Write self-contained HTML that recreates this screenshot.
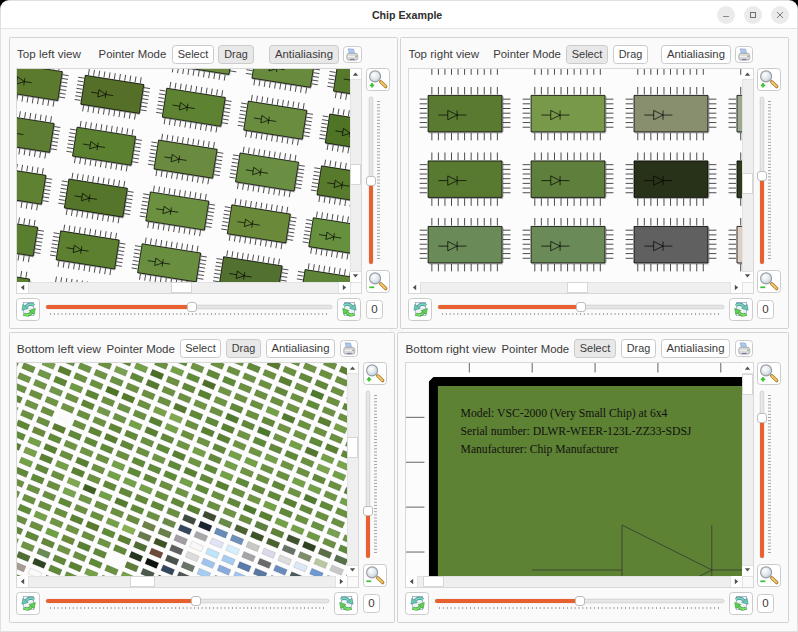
<!DOCTYPE html><html><head><meta charset="utf-8"><style>html,body{margin:0;padding:0;background:#000;overflow:hidden}svg{display:block}</style></head><body><svg width="798" height="632" viewBox="0 0 798 632" shape-rendering="auto">
<defs>
<radialGradient id="lens" cx="0.4" cy="0.35" r="0.7"><stop offset="0" stop-color="#ffffff"/><stop offset="0.6" stop-color="#dfe5ea"/><stop offset="1" stop-color="#b8c2cc"/></radialGradient>
<clipPath id="clipTL"><rect x="17" y="69" width="333" height="213"/></clipPath>
<clipPath id="clipTR"><rect x="409" y="69" width="333" height="213"/></clipPath>
<clipPath id="clipBL"><rect x="17" y="363" width="330" height="213"/></clipPath>
<clipPath id="clipBR"><rect x="406" y="363" width="336" height="213"/></clipPath>
<path id="pins" d="M18 13L18 5M18 54L18 62M25 13L25 5M25 54L25 62M32 13L32 5M32 54L32 62M39 13L39 5M39 54L39 62M46 13L46 5M46 54L46 62M53 13L53 5M53 54L53 62M60 13L60 5M60 54L60 62M67 13L67 5M67 54L67 62M74 13L74 5M74 54L74 62M81 13L81 5M81 54L81 62M88 13L88 5M88 54L88 62M5 18L13 18M94 18L102 18M5 23L13 23M94 23L102 23M5 28L13 28M94 28L102 28M5 33L13 33M94 33L102 33M5 38L13 38M94 38L102 38M5 43L13 43M94 43L102 43M5 48L13 48M94 48L102 48M25 35L35 35M35 30L35 40M35 30L45 35M35 40L45 35M45 30L45 40M45 35L55 35" fill="none" stroke="#000" stroke-width="0.7" vector-effect="non-scaling-stroke"/>
</defs>
<rect x="0" y="0" width="798" height="632" fill="#000000"/>
<path d="M0 632 L0 9 A9 9 0 0 1 9 0 L789 0 A9 9 0 0 1 798 9 L798 632Z" fill="#e0e0e0"/>
<path d="M1 631 L1 9 A8 8 0 0 1 9 1 L789 1 A8 8 0 0 1 797 9 L797 631Z" fill="#fafafa"/>
<path d="M1 28 L1 9 A8 8 0 0 1 9 1 L789 1 A8 8 0 0 1 797 9 L797 28Z" fill="#ffffff"/>
<rect x="1" y="28" width="796" height="1" fill="#e4e4e4"/>
<text x="0" y="0" transform="translate(371.90,18.80) scale(0.9258,1)" font-family='"Liberation Sans", sans-serif' font-size="11.5" font-weight="bold" fill="#2e2e2e">Chip Example</text>
<circle cx="726" cy="15" r="9" fill="#ebebeb"/>
<rect x="723" y="16" width="6" height="1" fill="#8a8a8a"/>
<circle cx="753" cy="15" r="9" fill="#ebebeb"/>
<rect x="750.5" y="12.5" width="5" height="5" fill="none" stroke="#707070" stroke-width="1"/>
<circle cx="780" cy="15" r="9" fill="#ebebeb"/>
<path d="M777 12L783 18M783 12L777 18" stroke="#707070" stroke-width="0.9"/>
<rect x="9.5" y="37.5" width="388" height="291" fill="#fafafa" stroke="#d3d3d3" stroke-width="1" rx="1"/>
<text x="0" y="0" transform="translate(17.00,58.40) scale(1.0115,1)" font-family='"Liberation Sans", sans-serif' font-size="11.5" fill="#3a3a3a">Top left view</text>
<text x="0" y="0" transform="translate(98.60,58.40) scale(0.9898,1)" font-family='"Liberation Sans", sans-serif' font-size="11.5" fill="#3a3a3a">Pointer Mode</text>
<rect x="172.5" y="45.5" width="41" height="18" fill="#ffffff" stroke="#cbcbcb" stroke-width="1" rx="3"/>
<text x="0" y="0" transform="translate(177.75,58.30) scale(0.9543,1)" font-family='"Liberation Sans", sans-serif' font-size="11.5" fill="#3a3a3a">Select</text>
<rect x="218.5" y="45.5" width="35" height="18" fill="#e8e8e8" stroke="#cbcbcb" stroke-width="1" rx="3"/>
<text x="0" y="0" transform="translate(224.25,58.30) scale(0.9428,1)" font-family='"Liberation Sans", sans-serif' font-size="11.5" fill="#3a3a3a">Drag</text>
<rect x="269.5" y="45.5" width="69" height="18" fill="#e8e8e8" stroke="#cbcbcb" stroke-width="1" rx="3"/>
<text x="0" y="0" transform="translate(275.00,58.30) scale(0.9862,1)" font-family='"Liberation Sans", sans-serif' font-size="11.5" fill="#3a3a3a">Antialiasing</text>
<rect x="343.5" y="46.5" width="18" height="16" fill="#ffffff" stroke="#cbcbcb" stroke-width="1" rx="3"/>
<g transform="translate(346,48)">
<path d="M2.2 0.8 L7.6 1.2 L8.6 6 L3.4 6Z" fill="#a6ccf2" stroke="#8c90c8" stroke-width="0.6"/>
<path d="M0.8 7.2 Q0.8 5.2 3.5 5.2 L9 5.2 Q11.8 5.2 11.8 7.6 L11.8 10.6 Q11.8 12.2 9.4 12.2 L3 12.2 Q0.8 12.2 0.8 10.6Z" fill="#d8d8d8" stroke="#9a9a9a" stroke-width="0.7"/>
<path d="M1.8 8.4h9" stroke="#f4f4f4" stroke-width="1"/>
<path d="M4 11.4 L8.6 11.4" stroke="#7474a0" stroke-width="1"/>
<circle cx="10" cy="8.2" r="0.7" fill="#4a9a4a"/>
</g>
<rect x="16.5" y="68.5" width="345" height="225" fill="#fcfcfc" stroke="#d8d8d8" stroke-width="1"/>
<g clip-path="url(#clipTL)">
<g transform="matrix(0.741,0.117,-0.117,0.741,-61.76,-118.083)"><path d="M15 54L94 54M94 53L94 15" stroke="#a0a0a4" stroke-width="1" fill="none"/><rect x="14" y="14" width="79" height="39" fill="#5f8236" stroke="#000" stroke-width="0.8" vector-effect="non-scaling-stroke"/><use href="#pins"/></g><g transform="matrix(0.741,0.117,-0.117,0.741,19.724,-105.177)"><path d="M15 54L94 54M94 53L94 15" stroke="#a0a0a4" stroke-width="1" fill="none"/><rect x="14" y="14" width="79" height="39" fill="#5f8236" stroke="#000" stroke-width="0.8" vector-effect="non-scaling-stroke"/><use href="#pins"/></g><g transform="matrix(0.741,0.117,-0.117,0.741,101.208,-92.271)"><path d="M15 54L94 54M94 53L94 15" stroke="#a0a0a4" stroke-width="1" fill="none"/><rect x="14" y="14" width="79" height="39" fill="#5f8236" stroke="#000" stroke-width="0.8" vector-effect="non-scaling-stroke"/><use href="#pins"/></g><g transform="matrix(0.741,0.117,-0.117,0.741,182.693,-79.365)"><path d="M15 54L94 54M94 53L94 15" stroke="#a0a0a4" stroke-width="1" fill="none"/><rect x="14" y="14" width="79" height="39" fill="#5f8236" stroke="#000" stroke-width="0.8" vector-effect="non-scaling-stroke"/><use href="#pins"/></g><g transform="matrix(0.741,0.117,-0.117,0.741,264.177,-66.459)"><path d="M15 54L94 54M94 53L94 15" stroke="#a0a0a4" stroke-width="1" fill="none"/><rect x="14" y="14" width="79" height="39" fill="#5f8236" stroke="#000" stroke-width="0.8" vector-effect="non-scaling-stroke"/><use href="#pins"/></g><g transform="matrix(0.741,0.117,-0.117,0.741,345.661,-53.553)"><path d="M15 54L94 54M94 53L94 15" stroke="#a0a0a4" stroke-width="1" fill="none"/><rect x="14" y="14" width="79" height="39" fill="#5f8236" stroke="#000" stroke-width="0.8" vector-effect="non-scaling-stroke"/><use href="#pins"/></g><g transform="matrix(0.741,0.117,-0.117,0.741,427.146,-40.648)"><path d="M15 54L94 54M94 53L94 15" stroke="#a0a0a4" stroke-width="1" fill="none"/><rect x="14" y="14" width="79" height="39" fill="#5f8236" stroke="#000" stroke-width="0.8" vector-effect="non-scaling-stroke"/><use href="#pins"/></g><g transform="matrix(0.741,0.117,-0.117,0.741,-69.973,-66.229)"><path d="M15 54L94 54M94 53L94 15" stroke="#a0a0a4" stroke-width="1" fill="none"/><rect x="14" y="14" width="79" height="39" fill="#5f8236" stroke="#000" stroke-width="0.8" vector-effect="non-scaling-stroke"/><use href="#pins"/></g><g transform="matrix(0.741,0.117,-0.117,0.741,11.511,-53.323)"><path d="M15 54L94 54M94 53L94 15" stroke="#a0a0a4" stroke-width="1" fill="none"/><rect x="14" y="14" width="79" height="39" fill="#5f8236" stroke="#000" stroke-width="0.8" vector-effect="non-scaling-stroke"/><use href="#pins"/></g><g transform="matrix(0.741,0.117,-0.117,0.741,92.996,-40.417)"><path d="M15 54L94 54M94 53L94 15" stroke="#a0a0a4" stroke-width="1" fill="none"/><rect x="14" y="14" width="79" height="39" fill="#5f8236" stroke="#000" stroke-width="0.8" vector-effect="non-scaling-stroke"/><use href="#pins"/></g><g transform="matrix(0.741,0.117,-0.117,0.741,174.48,-27.511)"><path d="M15 54L94 54M94 53L94 15" stroke="#a0a0a4" stroke-width="1" fill="none"/><rect x="14" y="14" width="79" height="39" fill="#5f8236" stroke="#000" stroke-width="0.8" vector-effect="non-scaling-stroke"/><use href="#pins"/></g><g transform="matrix(0.741,0.117,-0.117,0.741,255.964,-14.606)"><path d="M15 54L94 54M94 53L94 15" stroke="#a0a0a4" stroke-width="1" fill="none"/><rect x="14" y="14" width="79" height="39" fill="#5f8236" stroke="#000" stroke-width="0.8" vector-effect="non-scaling-stroke"/><use href="#pins"/></g><g transform="matrix(0.741,0.117,-0.117,0.741,337.448,-1.7)"><path d="M15 54L94 54M94 53L94 15" stroke="#a0a0a4" stroke-width="1" fill="none"/><rect x="14" y="14" width="79" height="39" fill="#5f8236" stroke="#000" stroke-width="0.8" vector-effect="non-scaling-stroke"/><use href="#pins"/></g><g transform="matrix(0.741,0.117,-0.117,0.741,418.933,11.206)"><path d="M15 54L94 54M94 53L94 15" stroke="#a0a0a4" stroke-width="1" fill="none"/><rect x="14" y="14" width="79" height="39" fill="#5f8236" stroke="#000" stroke-width="0.8" vector-effect="non-scaling-stroke"/><use href="#pins"/></g><g transform="matrix(0.741,0.117,-0.117,0.741,-78.186,-14.375)"><path d="M15 54L94 54M94 53L94 15" stroke="#a0a0a4" stroke-width="1" fill="none"/><rect x="14" y="14" width="79" height="39" fill="#5f8236" stroke="#000" stroke-width="0.8" vector-effect="non-scaling-stroke"/><use href="#pins"/></g><g transform="matrix(0.741,0.117,-0.117,0.741,3.299,-1.469)"><path d="M15 54L94 54M94 53L94 15" stroke="#a0a0a4" stroke-width="1" fill="none"/><rect x="14" y="14" width="79" height="39" fill="#5f8236" stroke="#000" stroke-width="0.8" vector-effect="non-scaling-stroke"/><use href="#pins"/></g><g transform="matrix(0.741,0.117,-0.117,0.741,84.783,11.436)"><path d="M15 54L94 54M94 53L94 15" stroke="#a0a0a4" stroke-width="1" fill="none"/><rect x="14" y="14" width="79" height="39" fill="#5e8034" stroke="#000" stroke-width="0.8" vector-effect="non-scaling-stroke"/><use href="#pins"/></g><g transform="matrix(0.741,0.117,-0.117,0.741,166.267,24.342)"><path d="M15 54L94 54M94 53L94 15" stroke="#a0a0a4" stroke-width="1" fill="none"/><rect x="14" y="14" width="79" height="39" fill="#6a8a3e" stroke="#000" stroke-width="0.8" vector-effect="non-scaling-stroke"/><use href="#pins"/></g><g transform="matrix(0.741,0.117,-0.117,0.741,247.751,37.248)"><path d="M15 54L94 54M94 53L94 15" stroke="#a0a0a4" stroke-width="1" fill="none"/><rect x="14" y="14" width="79" height="39" fill="#678a3c" stroke="#000" stroke-width="0.8" vector-effect="non-scaling-stroke"/><use href="#pins"/></g><g transform="matrix(0.741,0.117,-0.117,0.741,329.236,50.154)"><path d="M15 54L94 54M94 53L94 15" stroke="#a0a0a4" stroke-width="1" fill="none"/><rect x="14" y="14" width="79" height="39" fill="#55782c" stroke="#000" stroke-width="0.8" vector-effect="non-scaling-stroke"/><use href="#pins"/></g><g transform="matrix(0.741,0.117,-0.117,0.741,410.72,63.06)"><path d="M15 54L94 54M94 53L94 15" stroke="#a0a0a4" stroke-width="1" fill="none"/><rect x="14" y="14" width="79" height="39" fill="#5f8236" stroke="#000" stroke-width="0.8" vector-effect="non-scaling-stroke"/><use href="#pins"/></g><g transform="matrix(0.741,0.117,-0.117,0.741,-86.399,37.478)"><path d="M15 54L94 54M94 53L94 15" stroke="#a0a0a4" stroke-width="1" fill="none"/><rect x="14" y="14" width="79" height="39" fill="#5f8236" stroke="#000" stroke-width="0.8" vector-effect="non-scaling-stroke"/><use href="#pins"/></g><g transform="matrix(0.741,0.117,-0.117,0.741,-4.914,50.384)"><path d="M15 54L94 54M94 53L94 15" stroke="#a0a0a4" stroke-width="1" fill="none"/><rect x="14" y="14" width="79" height="39" fill="#5b7a2e" stroke="#000" stroke-width="0.8" vector-effect="non-scaling-stroke"/><use href="#pins"/></g><g transform="matrix(0.741,0.117,-0.117,0.741,76.57,63.29)"><path d="M15 54L94 54M94 53L94 15" stroke="#a0a0a4" stroke-width="1" fill="none"/><rect x="14" y="14" width="79" height="39" fill="#556f28" stroke="#000" stroke-width="0.8" vector-effect="non-scaling-stroke"/><use href="#pins"/></g><g transform="matrix(0.741,0.117,-0.117,0.741,158.054,76.196)"><path d="M15 54L94 54M94 53L94 15" stroke="#a0a0a4" stroke-width="1" fill="none"/><rect x="14" y="14" width="79" height="39" fill="#5c8232" stroke="#000" stroke-width="0.8" vector-effect="non-scaling-stroke"/><use href="#pins"/></g><g transform="matrix(0.741,0.117,-0.117,0.741,239.539,89.102)"><path d="M15 54L94 54M94 53L94 15" stroke="#a0a0a4" stroke-width="1" fill="none"/><rect x="14" y="14" width="79" height="39" fill="#6a8c3e" stroke="#000" stroke-width="0.8" vector-effect="non-scaling-stroke"/><use href="#pins"/></g><g transform="matrix(0.741,0.117,-0.117,0.741,321.023,102.008)"><path d="M15 54L94 54M94 53L94 15" stroke="#a0a0a4" stroke-width="1" fill="none"/><rect x="14" y="14" width="79" height="39" fill="#4f7425" stroke="#000" stroke-width="0.8" vector-effect="non-scaling-stroke"/><use href="#pins"/></g><g transform="matrix(0.741,0.117,-0.117,0.741,402.507,114.913)"><path d="M15 54L94 54M94 53L94 15" stroke="#a0a0a4" stroke-width="1" fill="none"/><rect x="14" y="14" width="79" height="39" fill="#5f8236" stroke="#000" stroke-width="0.8" vector-effect="non-scaling-stroke"/><use href="#pins"/></g><g transform="matrix(0.741,0.117,-0.117,0.741,-94.611,89.332)"><path d="M15 54L94 54M94 53L94 15" stroke="#a0a0a4" stroke-width="1" fill="none"/><rect x="14" y="14" width="79" height="39" fill="#5f8236" stroke="#000" stroke-width="0.8" vector-effect="non-scaling-stroke"/><use href="#pins"/></g><g transform="matrix(0.741,0.117,-0.117,0.741,-13.127,102.238)"><path d="M15 54L94 54M94 53L94 15" stroke="#a0a0a4" stroke-width="1" fill="none"/><rect x="14" y="14" width="79" height="39" fill="#5c7d32" stroke="#000" stroke-width="0.8" vector-effect="non-scaling-stroke"/><use href="#pins"/></g><g transform="matrix(0.741,0.117,-0.117,0.741,68.357,115.144)"><path d="M15 54L94 54M94 53L94 15" stroke="#a0a0a4" stroke-width="1" fill="none"/><rect x="14" y="14" width="79" height="39" fill="#5a8030" stroke="#000" stroke-width="0.8" vector-effect="non-scaling-stroke"/><use href="#pins"/></g><g transform="matrix(0.741,0.117,-0.117,0.741,149.841,128.049)"><path d="M15 54L94 54M94 53L94 15" stroke="#a0a0a4" stroke-width="1" fill="none"/><rect x="14" y="14" width="79" height="39" fill="#6a8a40" stroke="#000" stroke-width="0.8" vector-effect="non-scaling-stroke"/><use href="#pins"/></g><g transform="matrix(0.741,0.117,-0.117,0.741,231.326,140.955)"><path d="M15 54L94 54M94 53L94 15" stroke="#a0a0a4" stroke-width="1" fill="none"/><rect x="14" y="14" width="79" height="39" fill="#6a8e42" stroke="#000" stroke-width="0.8" vector-effect="non-scaling-stroke"/><use href="#pins"/></g><g transform="matrix(0.741,0.117,-0.117,0.741,312.81,153.861)"><path d="M15 54L94 54M94 53L94 15" stroke="#a0a0a4" stroke-width="1" fill="none"/><rect x="14" y="14" width="79" height="39" fill="#587a2c" stroke="#000" stroke-width="0.8" vector-effect="non-scaling-stroke"/><use href="#pins"/></g><g transform="matrix(0.741,0.117,-0.117,0.741,394.294,166.767)"><path d="M15 54L94 54M94 53L94 15" stroke="#a0a0a4" stroke-width="1" fill="none"/><rect x="14" y="14" width="79" height="39" fill="#5f8236" stroke="#000" stroke-width="0.8" vector-effect="non-scaling-stroke"/><use href="#pins"/></g><g transform="matrix(0.741,0.117,-0.117,0.741,-102.824,141.186)"><path d="M15 54L94 54M94 53L94 15" stroke="#a0a0a4" stroke-width="1" fill="none"/><rect x="14" y="14" width="79" height="39" fill="#5f8236" stroke="#000" stroke-width="0.8" vector-effect="non-scaling-stroke"/><use href="#pins"/></g><g transform="matrix(0.741,0.117,-0.117,0.741,-21.34,154.091)"><path d="M15 54L94 54M94 53L94 15" stroke="#a0a0a4" stroke-width="1" fill="none"/><rect x="14" y="14" width="79" height="39" fill="#5e8132" stroke="#000" stroke-width="0.8" vector-effect="non-scaling-stroke"/><use href="#pins"/></g><g transform="matrix(0.741,0.117,-0.117,0.741,60.144,166.997)"><path d="M15 54L94 54M94 53L94 15" stroke="#a0a0a4" stroke-width="1" fill="none"/><rect x="14" y="14" width="79" height="39" fill="#54752a" stroke="#000" stroke-width="0.8" vector-effect="non-scaling-stroke"/><use href="#pins"/></g><g transform="matrix(0.741,0.117,-0.117,0.741,141.629,179.903)"><path d="M15 54L94 54M94 53L94 15" stroke="#a0a0a4" stroke-width="1" fill="none"/><rect x="14" y="14" width="79" height="39" fill="#6a9040" stroke="#000" stroke-width="0.8" vector-effect="non-scaling-stroke"/><use href="#pins"/></g><g transform="matrix(0.741,0.117,-0.117,0.741,223.113,192.809)"><path d="M15 54L94 54M94 53L94 15" stroke="#a0a0a4" stroke-width="1" fill="none"/><rect x="14" y="14" width="79" height="39" fill="#6a8a3a" stroke="#000" stroke-width="0.8" vector-effect="non-scaling-stroke"/><use href="#pins"/></g><g transform="matrix(0.741,0.117,-0.117,0.741,304.597,205.715)"><path d="M15 54L94 54M94 53L94 15" stroke="#a0a0a4" stroke-width="1" fill="none"/><rect x="14" y="14" width="79" height="39" fill="#66903e" stroke="#000" stroke-width="0.8" vector-effect="non-scaling-stroke"/><use href="#pins"/></g><g transform="matrix(0.741,0.117,-0.117,0.741,386.082,218.621)"><path d="M15 54L94 54M94 53L94 15" stroke="#a0a0a4" stroke-width="1" fill="none"/><rect x="14" y="14" width="79" height="39" fill="#5f8236" stroke="#000" stroke-width="0.8" vector-effect="non-scaling-stroke"/><use href="#pins"/></g><g transform="matrix(0.741,0.117,-0.117,0.741,-111.037,193.039)"><path d="M15 54L94 54M94 53L94 15" stroke="#a0a0a4" stroke-width="1" fill="none"/><rect x="14" y="14" width="79" height="39" fill="#5f8236" stroke="#000" stroke-width="0.8" vector-effect="non-scaling-stroke"/><use href="#pins"/></g><g transform="matrix(0.741,0.117,-0.117,0.741,-29.553,205.945)"><path d="M15 54L94 54M94 53L94 15" stroke="#a0a0a4" stroke-width="1" fill="none"/><rect x="14" y="14" width="79" height="39" fill="#5a7e30" stroke="#000" stroke-width="0.8" vector-effect="non-scaling-stroke"/><use href="#pins"/></g><g transform="matrix(0.741,0.117,-0.117,0.741,51.932,218.851)"><path d="M15 54L94 54M94 53L94 15" stroke="#a0a0a4" stroke-width="1" fill="none"/><rect x="14" y="14" width="79" height="39" fill="#5c8030" stroke="#000" stroke-width="0.8" vector-effect="non-scaling-stroke"/><use href="#pins"/></g><g transform="matrix(0.741,0.117,-0.117,0.741,133.416,231.757)"><path d="M15 54L94 54M94 53L94 15" stroke="#a0a0a4" stroke-width="1" fill="none"/><rect x="14" y="14" width="79" height="39" fill="#6a8e40" stroke="#000" stroke-width="0.8" vector-effect="non-scaling-stroke"/><use href="#pins"/></g><g transform="matrix(0.741,0.117,-0.117,0.741,214.9,244.663)"><path d="M15 54L94 54M94 53L94 15" stroke="#a0a0a4" stroke-width="1" fill="none"/><rect x="14" y="14" width="79" height="39" fill="#527030" stroke="#000" stroke-width="0.8" vector-effect="non-scaling-stroke"/><use href="#pins"/></g><g transform="matrix(0.741,0.117,-0.117,0.741,296.384,257.568)"><path d="M15 54L94 54M94 53L94 15" stroke="#a0a0a4" stroke-width="1" fill="none"/><rect x="14" y="14" width="79" height="39" fill="#5e8438" stroke="#000" stroke-width="0.8" vector-effect="non-scaling-stroke"/><use href="#pins"/></g><g transform="matrix(0.741,0.117,-0.117,0.741,377.869,270.474)"><path d="M15 54L94 54M94 53L94 15" stroke="#a0a0a4" stroke-width="1" fill="none"/><rect x="14" y="14" width="79" height="39" fill="#5f8236" stroke="#000" stroke-width="0.8" vector-effect="non-scaling-stroke"/><use href="#pins"/></g><g transform="matrix(0.741,0.117,-0.117,0.741,-119.25,244.893)"><path d="M15 54L94 54M94 53L94 15" stroke="#a0a0a4" stroke-width="1" fill="none"/><rect x="14" y="14" width="79" height="39" fill="#5f8236" stroke="#000" stroke-width="0.8" vector-effect="non-scaling-stroke"/><use href="#pins"/></g><g transform="matrix(0.741,0.117,-0.117,0.741,-37.766,257.799)"><path d="M15 54L94 54M94 53L94 15" stroke="#a0a0a4" stroke-width="1" fill="none"/><rect x="14" y="14" width="79" height="39" fill="#5a8030" stroke="#000" stroke-width="0.8" vector-effect="non-scaling-stroke"/><use href="#pins"/></g><g transform="matrix(0.741,0.117,-0.117,0.741,43.719,270.705)"><path d="M15 54L94 54M94 53L94 15" stroke="#a0a0a4" stroke-width="1" fill="none"/><rect x="14" y="14" width="79" height="39" fill="#5c8034" stroke="#000" stroke-width="0.8" vector-effect="non-scaling-stroke"/><use href="#pins"/></g><g transform="matrix(0.741,0.117,-0.117,0.741,125.203,283.61)"><path d="M15 54L94 54M94 53L94 15" stroke="#a0a0a4" stroke-width="1" fill="none"/><rect x="14" y="14" width="79" height="39" fill="#5c8034" stroke="#000" stroke-width="0.8" vector-effect="non-scaling-stroke"/><use href="#pins"/></g><g transform="matrix(0.741,0.117,-0.117,0.741,206.687,296.516)"><path d="M15 54L94 54M94 53L94 15" stroke="#a0a0a4" stroke-width="1" fill="none"/><rect x="14" y="14" width="79" height="39" fill="#5c8034" stroke="#000" stroke-width="0.8" vector-effect="non-scaling-stroke"/><use href="#pins"/></g><g transform="matrix(0.741,0.117,-0.117,0.741,288.172,309.422)"><path d="M15 54L94 54M94 53L94 15" stroke="#a0a0a4" stroke-width="1" fill="none"/><rect x="14" y="14" width="79" height="39" fill="#5c8034" stroke="#000" stroke-width="0.8" vector-effect="non-scaling-stroke"/><use href="#pins"/></g><g transform="matrix(0.741,0.117,-0.117,0.741,369.656,322.328)"><path d="M15 54L94 54M94 53L94 15" stroke="#a0a0a4" stroke-width="1" fill="none"/><rect x="14" y="14" width="79" height="39" fill="#5f8236" stroke="#000" stroke-width="0.8" vector-effect="non-scaling-stroke"/><use href="#pins"/></g><g transform="matrix(0.741,0.117,-0.117,0.741,-127.463,296.747)"><path d="M15 54L94 54M94 53L94 15" stroke="#a0a0a4" stroke-width="1" fill="none"/><rect x="14" y="14" width="79" height="39" fill="#5f8236" stroke="#000" stroke-width="0.8" vector-effect="non-scaling-stroke"/><use href="#pins"/></g><g transform="matrix(0.741,0.117,-0.117,0.741,-45.978,309.652)"><path d="M15 54L94 54M94 53L94 15" stroke="#a0a0a4" stroke-width="1" fill="none"/><rect x="14" y="14" width="79" height="39" fill="#5f8236" stroke="#000" stroke-width="0.8" vector-effect="non-scaling-stroke"/><use href="#pins"/></g><g transform="matrix(0.741,0.117,-0.117,0.741,35.506,322.558)"><path d="M15 54L94 54M94 53L94 15" stroke="#a0a0a4" stroke-width="1" fill="none"/><rect x="14" y="14" width="79" height="39" fill="#5f8236" stroke="#000" stroke-width="0.8" vector-effect="non-scaling-stroke"/><use href="#pins"/></g><g transform="matrix(0.741,0.117,-0.117,0.741,116.99,335.464)"><path d="M15 54L94 54M94 53L94 15" stroke="#a0a0a4" stroke-width="1" fill="none"/><rect x="14" y="14" width="79" height="39" fill="#5f8236" stroke="#000" stroke-width="0.8" vector-effect="non-scaling-stroke"/><use href="#pins"/></g><g transform="matrix(0.741,0.117,-0.117,0.741,198.475,348.37)"><path d="M15 54L94 54M94 53L94 15" stroke="#a0a0a4" stroke-width="1" fill="none"/><rect x="14" y="14" width="79" height="39" fill="#5f8236" stroke="#000" stroke-width="0.8" vector-effect="non-scaling-stroke"/><use href="#pins"/></g><g transform="matrix(0.741,0.117,-0.117,0.741,279.959,361.276)"><path d="M15 54L94 54M94 53L94 15" stroke="#a0a0a4" stroke-width="1" fill="none"/><rect x="14" y="14" width="79" height="39" fill="#5f8236" stroke="#000" stroke-width="0.8" vector-effect="non-scaling-stroke"/><use href="#pins"/></g><g transform="matrix(0.741,0.117,-0.117,0.741,361.443,374.182)"><path d="M15 54L94 54M94 53L94 15" stroke="#a0a0a4" stroke-width="1" fill="none"/><rect x="14" y="14" width="79" height="39" fill="#5f8236" stroke="#000" stroke-width="0.8" vector-effect="non-scaling-stroke"/><use href="#pins"/></g>
</g>
<rect x="350" y="69" width="11" height="213" fill="#efefef"/>
<rect x="350" y="69" width="1" height="213" fill="#e2e2e2"/>
<rect x="350" y="69" width="11" height="10" fill="#ffffff"/>
<rect x="350" y="272" width="11" height="10" fill="#ffffff"/>
<rect x="350" y="79" width="11" height="1" fill="#e2e2e2"/>
<rect x="350" y="271" width="11" height="1" fill="#e2e2e2"/>
<path d="M352.8 75.8 L355.5 72.6 L358.2 75.8Z" fill="#505050"/>
<path d="M352.8 274.2 L355.5 277.4 L358.2 274.2Z" fill="#505050"/>
<rect x="350.5" y="164.5" width="10" height="20" fill="#ffffff" stroke="#d6d6d6" stroke-width="1"/>
<rect x="17" y="282" width="333" height="11" fill="#efefef"/>
<rect x="17" y="282" width="333" height="1" fill="#e2e2e2"/>
<rect x="17" y="282" width="11" height="11" fill="#ffffff"/>
<rect x="339" y="282" width="11" height="11" fill="#ffffff"/>
<rect x="28" y="282" width="1" height="11" fill="#e2e2e2"/>
<rect x="338" y="282" width="1" height="11" fill="#e2e2e2"/>
<path d="M24.2 284.8 L20.8 287.5 L24.2 290.2Z" fill="#505050"/>
<path d="M342.8 284.8 L346.2 287.5 L342.8 290.2Z" fill="#505050"/>
<rect x="171.5" y="282.5" width="20" height="10" fill="#ffffff" stroke="#d6d6d6" stroke-width="1"/>
<rect x="350" y="282" width="11" height="11" fill="#fafafa"/>
<rect x="350" y="282" width="1" height="11" fill="#e2e2e2"/>
<rect x="350" y="282" width="11" height="1" fill="#e2e2e2"/>
<rect x="366.5" y="68.5" width="23" height="22" fill="#ffffff" stroke="#cbcbcb" stroke-width="1" rx="3"/>
<line x1="380.70000000000005" y1="81.80000000000001" x2="385.70000000000005" y2="86.60000000000001" stroke="#a87a30" stroke-width="3.4" stroke-linecap="round"/>
<line x1="380.90000000000003" y1="82.0" x2="385.5" y2="86.4" stroke="#f2c866" stroke-width="2" stroke-linecap="round"/>
<circle cx="375.1" cy="76.4" r="5.5" fill="url(#lens)" stroke="#959ca4" stroke-width="1.1"/>
<path d="M369.8 85.3h4.4M372 83.1v4.4" stroke="#38c030" stroke-width="1.7"/>
<rect x="366.5" y="270.5" width="23" height="22" fill="#ffffff" stroke="#cbcbcb" stroke-width="1" rx="3"/>
<line x1="380.70000000000005" y1="283.79999999999995" x2="385.70000000000005" y2="288.59999999999997" stroke="#a87a30" stroke-width="3.4" stroke-linecap="round"/>
<line x1="380.90000000000003" y1="284.0" x2="385.5" y2="288.4" stroke="#f2c866" stroke-width="2" stroke-linecap="round"/>
<circle cx="375.1" cy="278.4" r="5.5" fill="url(#lens)" stroke="#959ca4" stroke-width="1.1"/>
<path d="M369.3 287.3h5" stroke="#38c030" stroke-width="1.7"/>
<rect x="369.2" y="97" width="3.6" height="167" fill="#e6e6e6" stroke="#c8c8c8" stroke-width="0.7" rx="1.8"/>
<rect x="369" y="181" width="4" height="83" fill="#e8602e" rx="2"/>
<rect x="377" y="101.00" width="3" height="1" fill="#a4a4a4"/>
<rect x="377" y="104.14" width="3" height="1" fill="#a4a4a4"/>
<rect x="377" y="107.28" width="3" height="1" fill="#a4a4a4"/>
<rect x="377" y="110.42" width="3" height="1" fill="#a4a4a4"/>
<rect x="377" y="113.56" width="3" height="1" fill="#a4a4a4"/>
<rect x="377" y="116.70" width="3" height="1" fill="#a4a4a4"/>
<rect x="377" y="119.84" width="3" height="1" fill="#a4a4a4"/>
<rect x="377" y="122.98" width="3" height="1" fill="#a4a4a4"/>
<rect x="377" y="126.12" width="3" height="1" fill="#a4a4a4"/>
<rect x="377" y="129.26" width="3" height="1" fill="#a4a4a4"/>
<rect x="377" y="132.40" width="3" height="1" fill="#a4a4a4"/>
<rect x="377" y="135.54" width="3" height="1" fill="#a4a4a4"/>
<rect x="377" y="138.68" width="3" height="1" fill="#a4a4a4"/>
<rect x="377" y="141.82" width="3" height="1" fill="#a4a4a4"/>
<rect x="377" y="144.96" width="3" height="1" fill="#a4a4a4"/>
<rect x="377" y="148.10" width="3" height="1" fill="#a4a4a4"/>
<rect x="377" y="151.24" width="3" height="1" fill="#a4a4a4"/>
<rect x="377" y="154.38" width="3" height="1" fill="#a4a4a4"/>
<rect x="377" y="157.52" width="3" height="1" fill="#a4a4a4"/>
<rect x="377" y="160.66" width="3" height="1" fill="#a4a4a4"/>
<rect x="377" y="163.80" width="3" height="1" fill="#a4a4a4"/>
<rect x="377" y="166.94" width="3" height="1" fill="#a4a4a4"/>
<rect x="377" y="170.08" width="3" height="1" fill="#a4a4a4"/>
<rect x="377" y="173.22" width="3" height="1" fill="#a4a4a4"/>
<rect x="377" y="176.36" width="3" height="1" fill="#a4a4a4"/>
<rect x="377" y="179.50" width="3" height="1" fill="#a4a4a4"/>
<rect x="377" y="182.64" width="3" height="1" fill="#a4a4a4"/>
<rect x="377" y="185.78" width="3" height="1" fill="#a4a4a4"/>
<rect x="377" y="188.92" width="3" height="1" fill="#a4a4a4"/>
<rect x="377" y="192.06" width="3" height="1" fill="#a4a4a4"/>
<rect x="377" y="195.20" width="3" height="1" fill="#a4a4a4"/>
<rect x="377" y="198.34" width="3" height="1" fill="#a4a4a4"/>
<rect x="377" y="201.48" width="3" height="1" fill="#a4a4a4"/>
<rect x="377" y="204.62" width="3" height="1" fill="#a4a4a4"/>
<rect x="377" y="207.76" width="3" height="1" fill="#a4a4a4"/>
<rect x="377" y="210.90" width="3" height="1" fill="#a4a4a4"/>
<rect x="377" y="214.04" width="3" height="1" fill="#a4a4a4"/>
<rect x="377" y="217.18" width="3" height="1" fill="#a4a4a4"/>
<rect x="377" y="220.32" width="3" height="1" fill="#a4a4a4"/>
<rect x="377" y="223.46" width="3" height="1" fill="#a4a4a4"/>
<rect x="377" y="226.60" width="3" height="1" fill="#a4a4a4"/>
<rect x="377" y="229.74" width="3" height="1" fill="#a4a4a4"/>
<rect x="377" y="232.88" width="3" height="1" fill="#a4a4a4"/>
<rect x="377" y="236.02" width="3" height="1" fill="#a4a4a4"/>
<rect x="377" y="239.16" width="3" height="1" fill="#a4a4a4"/>
<rect x="377" y="242.30" width="3" height="1" fill="#a4a4a4"/>
<rect x="377" y="245.44" width="3" height="1" fill="#a4a4a4"/>
<rect x="377" y="248.58" width="3" height="1" fill="#a4a4a4"/>
<rect x="377" y="251.72" width="3" height="1" fill="#a4a4a4"/>
<rect x="377" y="254.86" width="3" height="1" fill="#a4a4a4"/>
<rect x="377" y="258.00" width="3" height="1" fill="#a4a4a4"/>
<rect x="366.5" y="176.5" width="9" height="9" fill="#ffffff" stroke="#bdbdbd" stroke-width="1" rx="2.5"/>
<rect x="16.5" y="298.5" width="23" height="22" fill="#ffffff" stroke="#cbcbcb" stroke-width="1" rx="3"/>
<g transform="translate(21.5,302)">
<rect x="1.8" y="0.6" width="10.4" height="13" fill="#eef1f5" stroke="#92a2b8" stroke-width="0.7"/>
<path d="M12.6 3.4 Q8.2 0.4 4.4 4.8" stroke="#3c8c98" stroke-width="3" fill="none"/>
<path d="M12.6 3.4 Q8.2 0.4 4.4 4.8" stroke="#7ed8b8" stroke-width="1.8" fill="none"/>
<path d="M0.4 8.2 L1.4 2.4 L6.8 6.4Z" fill="#6ccaa8" stroke="#3c8c98" stroke-width="0.6"/>
<path d="M2.4 12.0 Q6.8 14.8 10.4 10.0" stroke="#3a9a40" stroke-width="3" fill="none"/>
<path d="M2.4 12.0 Q6.8 14.8 10.4 10.0" stroke="#78e060" stroke-width="1.8" fill="none"/>
<path d="M13.8 6.4 L12.8 12.4 L7.6 8.6Z" fill="#60d050" stroke="#3a9a40" stroke-width="0.6"/>
</g>
<rect x="337.5" y="298.5" width="23" height="22" fill="#ffffff" stroke="#cbcbcb" stroke-width="1" rx="3"/>
<g transform="translate(342.5,302) translate(14,0) scale(-1,1)">
<rect x="1.8" y="0.6" width="10.4" height="13" fill="#eef1f5" stroke="#92a2b8" stroke-width="0.7"/>
<path d="M12.6 3.4 Q8.2 0.4 4.4 4.8" stroke="#3c8c98" stroke-width="3" fill="none"/>
<path d="M12.6 3.4 Q8.2 0.4 4.4 4.8" stroke="#7ed8b8" stroke-width="1.8" fill="none"/>
<path d="M0.4 8.2 L1.4 2.4 L6.8 6.4Z" fill="#6ccaa8" stroke="#3c8c98" stroke-width="0.6"/>
<path d="M2.4 12.0 Q6.8 14.8 10.4 10.0" stroke="#3a9a40" stroke-width="3" fill="none"/>
<path d="M2.4 12.0 Q6.8 14.8 10.4 10.0" stroke="#78e060" stroke-width="1.8" fill="none"/>
<path d="M13.8 6.4 L12.8 12.4 L7.6 8.6Z" fill="#60d050" stroke="#3a9a40" stroke-width="0.6"/>
</g>
<rect x="46" y="305.2" width="286" height="3.6" fill="#e6e6e6" stroke="#c8c8c8" stroke-width="0.7" rx="1.8"/>
<rect x="46" y="305" width="143" height="4" fill="#e8602e" rx="2"/>
<rect x="50.00" y="313" width="1" height="2" fill="#a4a4a4"/>
<rect x="53.83" y="313" width="1" height="2" fill="#a4a4a4"/>
<rect x="57.67" y="313" width="1" height="2" fill="#a4a4a4"/>
<rect x="61.50" y="313" width="1" height="2" fill="#a4a4a4"/>
<rect x="65.33" y="313" width="1" height="2" fill="#a4a4a4"/>
<rect x="69.17" y="313" width="1" height="2" fill="#a4a4a4"/>
<rect x="73.00" y="313" width="1" height="2" fill="#a4a4a4"/>
<rect x="76.83" y="313" width="1" height="2" fill="#a4a4a4"/>
<rect x="80.67" y="313" width="1" height="2" fill="#a4a4a4"/>
<rect x="84.50" y="313" width="1" height="2" fill="#a4a4a4"/>
<rect x="88.33" y="313" width="1" height="2" fill="#a4a4a4"/>
<rect x="92.17" y="313" width="1" height="2" fill="#a4a4a4"/>
<rect x="96.00" y="313" width="1" height="2" fill="#a4a4a4"/>
<rect x="99.83" y="313" width="1" height="2" fill="#a4a4a4"/>
<rect x="103.67" y="313" width="1" height="2" fill="#a4a4a4"/>
<rect x="107.50" y="313" width="1" height="2" fill="#a4a4a4"/>
<rect x="111.33" y="313" width="1" height="2" fill="#a4a4a4"/>
<rect x="115.17" y="313" width="1" height="2" fill="#a4a4a4"/>
<rect x="119.00" y="313" width="1" height="2" fill="#a4a4a4"/>
<rect x="122.83" y="313" width="1" height="2" fill="#a4a4a4"/>
<rect x="126.67" y="313" width="1" height="2" fill="#a4a4a4"/>
<rect x="130.50" y="313" width="1" height="2" fill="#a4a4a4"/>
<rect x="134.33" y="313" width="1" height="2" fill="#a4a4a4"/>
<rect x="138.17" y="313" width="1" height="2" fill="#a4a4a4"/>
<rect x="142.00" y="313" width="1" height="2" fill="#a4a4a4"/>
<rect x="145.83" y="313" width="1" height="2" fill="#a4a4a4"/>
<rect x="149.67" y="313" width="1" height="2" fill="#a4a4a4"/>
<rect x="153.50" y="313" width="1" height="2" fill="#a4a4a4"/>
<rect x="157.33" y="313" width="1" height="2" fill="#a4a4a4"/>
<rect x="161.17" y="313" width="1" height="2" fill="#a4a4a4"/>
<rect x="165.00" y="313" width="1" height="2" fill="#a4a4a4"/>
<rect x="168.83" y="313" width="1" height="2" fill="#a4a4a4"/>
<rect x="172.67" y="313" width="1" height="2" fill="#a4a4a4"/>
<rect x="176.50" y="313" width="1" height="2" fill="#a4a4a4"/>
<rect x="180.33" y="313" width="1" height="2" fill="#a4a4a4"/>
<rect x="184.17" y="313" width="1" height="2" fill="#a4a4a4"/>
<rect x="188.00" y="313" width="1" height="2" fill="#a4a4a4"/>
<rect x="191.83" y="313" width="1" height="2" fill="#a4a4a4"/>
<rect x="195.67" y="313" width="1" height="2" fill="#a4a4a4"/>
<rect x="199.50" y="313" width="1" height="2" fill="#a4a4a4"/>
<rect x="203.33" y="313" width="1" height="2" fill="#a4a4a4"/>
<rect x="207.17" y="313" width="1" height="2" fill="#a4a4a4"/>
<rect x="211.00" y="313" width="1" height="2" fill="#a4a4a4"/>
<rect x="214.83" y="313" width="1" height="2" fill="#a4a4a4"/>
<rect x="218.67" y="313" width="1" height="2" fill="#a4a4a4"/>
<rect x="222.50" y="313" width="1" height="2" fill="#a4a4a4"/>
<rect x="226.33" y="313" width="1" height="2" fill="#a4a4a4"/>
<rect x="230.17" y="313" width="1" height="2" fill="#a4a4a4"/>
<rect x="234.00" y="313" width="1" height="2" fill="#a4a4a4"/>
<rect x="237.83" y="313" width="1" height="2" fill="#a4a4a4"/>
<rect x="241.67" y="313" width="1" height="2" fill="#a4a4a4"/>
<rect x="245.50" y="313" width="1" height="2" fill="#a4a4a4"/>
<rect x="249.33" y="313" width="1" height="2" fill="#a4a4a4"/>
<rect x="253.17" y="313" width="1" height="2" fill="#a4a4a4"/>
<rect x="257.00" y="313" width="1" height="2" fill="#a4a4a4"/>
<rect x="260.83" y="313" width="1" height="2" fill="#a4a4a4"/>
<rect x="264.67" y="313" width="1" height="2" fill="#a4a4a4"/>
<rect x="268.50" y="313" width="1" height="2" fill="#a4a4a4"/>
<rect x="272.33" y="313" width="1" height="2" fill="#a4a4a4"/>
<rect x="276.17" y="313" width="1" height="2" fill="#a4a4a4"/>
<rect x="280.00" y="313" width="1" height="2" fill="#a4a4a4"/>
<rect x="283.83" y="313" width="1" height="2" fill="#a4a4a4"/>
<rect x="287.67" y="313" width="1" height="2" fill="#a4a4a4"/>
<rect x="291.50" y="313" width="1" height="2" fill="#a4a4a4"/>
<rect x="295.33" y="313" width="1" height="2" fill="#a4a4a4"/>
<rect x="299.17" y="313" width="1" height="2" fill="#a4a4a4"/>
<rect x="303.00" y="313" width="1" height="2" fill="#a4a4a4"/>
<rect x="306.83" y="313" width="1" height="2" fill="#a4a4a4"/>
<rect x="310.67" y="313" width="1" height="2" fill="#a4a4a4"/>
<rect x="314.50" y="313" width="1" height="2" fill="#a4a4a4"/>
<rect x="318.33" y="313" width="1" height="2" fill="#a4a4a4"/>
<rect x="322.17" y="313" width="1" height="2" fill="#a4a4a4"/>
<rect x="326.00" y="313" width="1" height="2" fill="#a4a4a4"/>
<rect x="187.5" y="302.5" width="9" height="9" fill="#ffffff" stroke="#bdbdbd" stroke-width="1" rx="2.5"/>
<rect x="366.5" y="300.5" width="16" height="18" fill="#ffffff" stroke="#cbcbcb" stroke-width="1" rx="3"/>
<text x="0" y="0" transform="translate(371.30,313.30) scale(1.0008,1)" font-family='"Liberation Sans", sans-serif' font-size="11.5" fill="#3a3a3a">0</text>
<rect x="400.5" y="37.5" width="388" height="291" fill="#fafafa" stroke="#d3d3d3" stroke-width="1" rx="1"/>
<text x="0" y="0" transform="translate(408.40,58.40) scale(1.0070,1)" font-family='"Liberation Sans", sans-serif' font-size="11.5" fill="#3a3a3a">Top right view</text>
<text x="0" y="0" transform="translate(493.20,58.40) scale(0.9898,1)" font-family='"Liberation Sans", sans-serif' font-size="11.5" fill="#3a3a3a">Pointer Mode</text>
<rect x="566.5" y="45.5" width="41" height="18" fill="#e8e8e8" stroke="#cbcbcb" stroke-width="1" rx="3"/>
<text x="0" y="0" transform="translate(571.75,58.30) scale(0.9543,1)" font-family='"Liberation Sans", sans-serif' font-size="11.5" fill="#3a3a3a">Select</text>
<rect x="613.5" y="45.5" width="34" height="18" fill="#ffffff" stroke="#cbcbcb" stroke-width="1" rx="3"/>
<text x="0" y="0" transform="translate(618.75,58.30) scale(0.9428,1)" font-family='"Liberation Sans", sans-serif' font-size="11.5" fill="#3a3a3a">Drag</text>
<rect x="661.5" y="45.5" width="69" height="18" fill="#ffffff" stroke="#cbcbcb" stroke-width="1" rx="3"/>
<text x="0" y="0" transform="translate(667.00,58.30) scale(0.9862,1)" font-family='"Liberation Sans", sans-serif' font-size="11.5" fill="#3a3a3a">Antialiasing</text>
<rect x="735.5" y="46.5" width="17" height="16" fill="#ffffff" stroke="#cbcbcb" stroke-width="1" rx="3"/>
<g transform="translate(738,48)">
<path d="M2.2 0.8 L7.6 1.2 L8.6 6 L3.4 6Z" fill="#a6ccf2" stroke="#8c90c8" stroke-width="0.6"/>
<path d="M0.8 7.2 Q0.8 5.2 3.5 5.2 L9 5.2 Q11.8 5.2 11.8 7.6 L11.8 10.6 Q11.8 12.2 9.4 12.2 L3 12.2 Q0.8 12.2 0.8 10.6Z" fill="#d8d8d8" stroke="#9a9a9a" stroke-width="0.7"/>
<path d="M1.8 8.4h9" stroke="#f4f4f4" stroke-width="1"/>
<path d="M4 11.4 L8.6 11.4" stroke="#7474a0" stroke-width="1"/>
<circle cx="10" cy="8.2" r="0.7" fill="#4a9a4a"/>
</g>
<rect x="408.5" y="68.5" width="345" height="225" fill="#fcfcfc" stroke="#d8d8d8" stroke-width="1"/>
<g clip-path="url(#clipTR)">
<g transform="matrix(0.936,0,-0,0.936,312.04,16.78)"><path d="M15 54L94 54M94 53L94 15" stroke="#a0a0a4" stroke-width="1" fill="none"/><rect x="14" y="14" width="79" height="39" fill="#6a8a4a" stroke="#000" stroke-width="0.8" vector-effect="non-scaling-stroke"/><use href="#pins"/></g><g transform="matrix(0.936,0,-0,0.936,415,16.78)"><path d="M15 54L94 54M94 53L94 15" stroke="#a0a0a4" stroke-width="1" fill="none"/><rect x="14" y="14" width="79" height="39" fill="#6a8a4a" stroke="#000" stroke-width="0.8" vector-effect="non-scaling-stroke"/><use href="#pins"/></g><g transform="matrix(0.936,0,-0,0.936,517.96,16.78)"><path d="M15 54L94 54M94 53L94 15" stroke="#a0a0a4" stroke-width="1" fill="none"/><rect x="14" y="14" width="79" height="39" fill="#6a8a4a" stroke="#000" stroke-width="0.8" vector-effect="non-scaling-stroke"/><use href="#pins"/></g><g transform="matrix(0.936,0,-0,0.936,620.92,16.78)"><path d="M15 54L94 54M94 53L94 15" stroke="#a0a0a4" stroke-width="1" fill="none"/><rect x="14" y="14" width="79" height="39" fill="#6a8a4a" stroke="#000" stroke-width="0.8" vector-effect="non-scaling-stroke"/><use href="#pins"/></g><g transform="matrix(0.936,0,-0,0.936,723.88,16.78)"><path d="M15 54L94 54M94 53L94 15" stroke="#a0a0a4" stroke-width="1" fill="none"/><rect x="14" y="14" width="79" height="39" fill="#6a8a4a" stroke="#000" stroke-width="0.8" vector-effect="non-scaling-stroke"/><use href="#pins"/></g><g transform="matrix(0.936,0,-0,0.936,312.04,82.3)"><path d="M15 54L94 54M94 53L94 15" stroke="#a0a0a4" stroke-width="1" fill="none"/><rect x="14" y="14" width="79" height="39" fill="#6a8a4a" stroke="#000" stroke-width="0.8" vector-effect="non-scaling-stroke"/><use href="#pins"/></g><g transform="matrix(0.936,0,-0,0.936,415,82.3)"><path d="M15 54L94 54M94 53L94 15" stroke="#a0a0a4" stroke-width="1" fill="none"/><rect x="14" y="14" width="79" height="39" fill="#5a7a32" stroke="#000" stroke-width="0.8" vector-effect="non-scaling-stroke"/><use href="#pins"/></g><g transform="matrix(0.936,0,-0,0.936,517.96,82.3)"><path d="M15 54L94 54M94 53L94 15" stroke="#a0a0a4" stroke-width="1" fill="none"/><rect x="14" y="14" width="79" height="39" fill="#78994a" stroke="#000" stroke-width="0.8" vector-effect="non-scaling-stroke"/><use href="#pins"/></g><g transform="matrix(0.936,0,-0,0.936,620.92,82.3)"><path d="M15 54L94 54M94 53L94 15" stroke="#a0a0a4" stroke-width="1" fill="none"/><rect x="14" y="14" width="79" height="39" fill="#878f6e" stroke="#000" stroke-width="0.8" vector-effect="non-scaling-stroke"/><use href="#pins"/></g><g transform="matrix(0.936,0,-0,0.936,723.88,82.3)"><path d="M15 54L94 54M94 53L94 15" stroke="#a0a0a4" stroke-width="1" fill="none"/><rect x="14" y="14" width="79" height="39" fill="#9aa890" stroke="#000" stroke-width="0.8" vector-effect="non-scaling-stroke"/><use href="#pins"/></g><g transform="matrix(0.936,0,-0,0.936,312.04,147.82)"><path d="M15 54L94 54M94 53L94 15" stroke="#a0a0a4" stroke-width="1" fill="none"/><rect x="14" y="14" width="79" height="39" fill="#6a8a4a" stroke="#000" stroke-width="0.8" vector-effect="non-scaling-stroke"/><use href="#pins"/></g><g transform="matrix(0.936,0,-0,0.936,415,147.82)"><path d="M15 54L94 54M94 53L94 15" stroke="#a0a0a4" stroke-width="1" fill="none"/><rect x="14" y="14" width="79" height="39" fill="#587a30" stroke="#000" stroke-width="0.8" vector-effect="non-scaling-stroke"/><use href="#pins"/></g><g transform="matrix(0.936,0,-0,0.936,517.96,147.82)"><path d="M15 54L94 54M94 53L94 15" stroke="#a0a0a4" stroke-width="1" fill="none"/><rect x="14" y="14" width="79" height="39" fill="#5f7f3c" stroke="#000" stroke-width="0.8" vector-effect="non-scaling-stroke"/><use href="#pins"/></g><g transform="matrix(0.936,0,-0,0.936,620.92,147.82)"><path d="M15 54L94 54M94 53L94 15" stroke="#a0a0a4" stroke-width="1" fill="none"/><rect x="14" y="14" width="79" height="39" fill="#283218" stroke="#000" stroke-width="0.8" vector-effect="non-scaling-stroke"/><use href="#pins"/></g><g transform="matrix(0.936,0,-0,0.936,723.88,147.82)"><path d="M15 54L94 54M94 53L94 15" stroke="#a0a0a4" stroke-width="1" fill="none"/><rect x="14" y="14" width="79" height="39" fill="#2d3a1e" stroke="#000" stroke-width="0.8" vector-effect="non-scaling-stroke"/><use href="#pins"/></g><g transform="matrix(0.936,0,-0,0.936,312.04,213.34)"><path d="M15 54L94 54M94 53L94 15" stroke="#a0a0a4" stroke-width="1" fill="none"/><rect x="14" y="14" width="79" height="39" fill="#6a8a4a" stroke="#000" stroke-width="0.8" vector-effect="non-scaling-stroke"/><use href="#pins"/></g><g transform="matrix(0.936,0,-0,0.936,415,213.34)"><path d="M15 54L94 54M94 53L94 15" stroke="#a0a0a4" stroke-width="1" fill="none"/><rect x="14" y="14" width="79" height="39" fill="#6a8a58" stroke="#000" stroke-width="0.8" vector-effect="non-scaling-stroke"/><use href="#pins"/></g><g transform="matrix(0.936,0,-0,0.936,517.96,213.34)"><path d="M15 54L94 54M94 53L94 15" stroke="#a0a0a4" stroke-width="1" fill="none"/><rect x="14" y="14" width="79" height="39" fill="#6a8a58" stroke="#000" stroke-width="0.8" vector-effect="non-scaling-stroke"/><use href="#pins"/></g><g transform="matrix(0.936,0,-0,0.936,620.92,213.34)"><path d="M15 54L94 54M94 53L94 15" stroke="#a0a0a4" stroke-width="1" fill="none"/><rect x="14" y="14" width="79" height="39" fill="#606060" stroke="#000" stroke-width="0.8" vector-effect="non-scaling-stroke"/><use href="#pins"/></g><g transform="matrix(0.936,0,-0,0.936,723.88,213.34)"><path d="M15 54L94 54M94 53L94 15" stroke="#a0a0a4" stroke-width="1" fill="none"/><rect x="14" y="14" width="79" height="39" fill="#e0d0c4" stroke="#000" stroke-width="0.8" vector-effect="non-scaling-stroke"/><use href="#pins"/></g><g transform="matrix(0.936,0,-0,0.936,312.04,278.86)"><path d="M15 54L94 54M94 53L94 15" stroke="#a0a0a4" stroke-width="1" fill="none"/><rect x="14" y="14" width="79" height="39" fill="#6a8a4a" stroke="#000" stroke-width="0.8" vector-effect="non-scaling-stroke"/><use href="#pins"/></g><g transform="matrix(0.936,0,-0,0.936,415,278.86)"><path d="M15 54L94 54M94 53L94 15" stroke="#a0a0a4" stroke-width="1" fill="none"/><rect x="14" y="14" width="79" height="39" fill="#6a8a4a" stroke="#000" stroke-width="0.8" vector-effect="non-scaling-stroke"/><use href="#pins"/></g><g transform="matrix(0.936,0,-0,0.936,517.96,278.86)"><path d="M15 54L94 54M94 53L94 15" stroke="#a0a0a4" stroke-width="1" fill="none"/><rect x="14" y="14" width="79" height="39" fill="#6a8a4a" stroke="#000" stroke-width="0.8" vector-effect="non-scaling-stroke"/><use href="#pins"/></g><g transform="matrix(0.936,0,-0,0.936,620.92,278.86)"><path d="M15 54L94 54M94 53L94 15" stroke="#a0a0a4" stroke-width="1" fill="none"/><rect x="14" y="14" width="79" height="39" fill="#6a8a4a" stroke="#000" stroke-width="0.8" vector-effect="non-scaling-stroke"/><use href="#pins"/></g><g transform="matrix(0.936,0,-0,0.936,723.88,278.86)"><path d="M15 54L94 54M94 53L94 15" stroke="#a0a0a4" stroke-width="1" fill="none"/><rect x="14" y="14" width="79" height="39" fill="#6a8a4a" stroke="#000" stroke-width="0.8" vector-effect="non-scaling-stroke"/><use href="#pins"/></g>
</g>
<rect x="742" y="69" width="11" height="213" fill="#efefef"/>
<rect x="742" y="69" width="1" height="213" fill="#e2e2e2"/>
<rect x="742" y="69" width="11" height="10" fill="#ffffff"/>
<rect x="742" y="272" width="11" height="10" fill="#ffffff"/>
<rect x="742" y="79" width="11" height="1" fill="#e2e2e2"/>
<rect x="742" y="271" width="11" height="1" fill="#e2e2e2"/>
<path d="M744.8 75.8 L747.5 72.6 L750.2 75.8Z" fill="#505050"/>
<path d="M744.8 274.2 L747.5 277.4 L750.2 274.2Z" fill="#505050"/>
<rect x="742.5" y="173.5" width="10" height="20" fill="#ffffff" stroke="#d6d6d6" stroke-width="1"/>
<rect x="409" y="282" width="333" height="11" fill="#efefef"/>
<rect x="409" y="282" width="333" height="1" fill="#e2e2e2"/>
<rect x="409" y="282" width="11" height="11" fill="#ffffff"/>
<rect x="731" y="282" width="11" height="11" fill="#ffffff"/>
<rect x="420" y="282" width="1" height="11" fill="#e2e2e2"/>
<rect x="730" y="282" width="1" height="11" fill="#e2e2e2"/>
<path d="M416.2 284.8 L412.8 287.5 L416.2 290.2Z" fill="#505050"/>
<path d="M734.8 284.8 L738.2 287.5 L734.8 290.2Z" fill="#505050"/>
<rect x="567.5" y="282.5" width="20" height="10" fill="#ffffff" stroke="#d6d6d6" stroke-width="1"/>
<rect x="742" y="282" width="11" height="11" fill="#fafafa"/>
<rect x="742" y="282" width="1" height="11" fill="#e2e2e2"/>
<rect x="742" y="282" width="11" height="1" fill="#e2e2e2"/>
<rect x="757.5" y="68.5" width="23" height="22" fill="#ffffff" stroke="#cbcbcb" stroke-width="1" rx="3"/>
<line x1="771.7" y1="81.80000000000001" x2="776.7" y2="86.60000000000001" stroke="#a87a30" stroke-width="3.4" stroke-linecap="round"/>
<line x1="771.9" y1="82.0" x2="776.5" y2="86.4" stroke="#f2c866" stroke-width="2" stroke-linecap="round"/>
<circle cx="766.1" cy="76.4" r="5.5" fill="url(#lens)" stroke="#959ca4" stroke-width="1.1"/>
<path d="M760.8 85.3h4.4M763 83.1v4.4" stroke="#38c030" stroke-width="1.7"/>
<rect x="757.5" y="270.5" width="23" height="22" fill="#ffffff" stroke="#cbcbcb" stroke-width="1" rx="3"/>
<line x1="771.7" y1="283.79999999999995" x2="776.7" y2="288.59999999999997" stroke="#a87a30" stroke-width="3.4" stroke-linecap="round"/>
<line x1="771.9" y1="284.0" x2="776.5" y2="288.4" stroke="#f2c866" stroke-width="2" stroke-linecap="round"/>
<circle cx="766.1" cy="278.4" r="5.5" fill="url(#lens)" stroke="#959ca4" stroke-width="1.1"/>
<path d="M760.3 287.3h5" stroke="#38c030" stroke-width="1.7"/>
<rect x="760.2" y="97" width="3.6" height="167" fill="#e6e6e6" stroke="#c8c8c8" stroke-width="0.7" rx="1.8"/>
<rect x="760" y="176" width="4" height="88" fill="#e8602e" rx="2"/>
<rect x="768" y="101.00" width="3" height="1" fill="#a4a4a4"/>
<rect x="768" y="104.14" width="3" height="1" fill="#a4a4a4"/>
<rect x="768" y="107.28" width="3" height="1" fill="#a4a4a4"/>
<rect x="768" y="110.42" width="3" height="1" fill="#a4a4a4"/>
<rect x="768" y="113.56" width="3" height="1" fill="#a4a4a4"/>
<rect x="768" y="116.70" width="3" height="1" fill="#a4a4a4"/>
<rect x="768" y="119.84" width="3" height="1" fill="#a4a4a4"/>
<rect x="768" y="122.98" width="3" height="1" fill="#a4a4a4"/>
<rect x="768" y="126.12" width="3" height="1" fill="#a4a4a4"/>
<rect x="768" y="129.26" width="3" height="1" fill="#a4a4a4"/>
<rect x="768" y="132.40" width="3" height="1" fill="#a4a4a4"/>
<rect x="768" y="135.54" width="3" height="1" fill="#a4a4a4"/>
<rect x="768" y="138.68" width="3" height="1" fill="#a4a4a4"/>
<rect x="768" y="141.82" width="3" height="1" fill="#a4a4a4"/>
<rect x="768" y="144.96" width="3" height="1" fill="#a4a4a4"/>
<rect x="768" y="148.10" width="3" height="1" fill="#a4a4a4"/>
<rect x="768" y="151.24" width="3" height="1" fill="#a4a4a4"/>
<rect x="768" y="154.38" width="3" height="1" fill="#a4a4a4"/>
<rect x="768" y="157.52" width="3" height="1" fill="#a4a4a4"/>
<rect x="768" y="160.66" width="3" height="1" fill="#a4a4a4"/>
<rect x="768" y="163.80" width="3" height="1" fill="#a4a4a4"/>
<rect x="768" y="166.94" width="3" height="1" fill="#a4a4a4"/>
<rect x="768" y="170.08" width="3" height="1" fill="#a4a4a4"/>
<rect x="768" y="173.22" width="3" height="1" fill="#a4a4a4"/>
<rect x="768" y="176.36" width="3" height="1" fill="#a4a4a4"/>
<rect x="768" y="179.50" width="3" height="1" fill="#a4a4a4"/>
<rect x="768" y="182.64" width="3" height="1" fill="#a4a4a4"/>
<rect x="768" y="185.78" width="3" height="1" fill="#a4a4a4"/>
<rect x="768" y="188.92" width="3" height="1" fill="#a4a4a4"/>
<rect x="768" y="192.06" width="3" height="1" fill="#a4a4a4"/>
<rect x="768" y="195.20" width="3" height="1" fill="#a4a4a4"/>
<rect x="768" y="198.34" width="3" height="1" fill="#a4a4a4"/>
<rect x="768" y="201.48" width="3" height="1" fill="#a4a4a4"/>
<rect x="768" y="204.62" width="3" height="1" fill="#a4a4a4"/>
<rect x="768" y="207.76" width="3" height="1" fill="#a4a4a4"/>
<rect x="768" y="210.90" width="3" height="1" fill="#a4a4a4"/>
<rect x="768" y="214.04" width="3" height="1" fill="#a4a4a4"/>
<rect x="768" y="217.18" width="3" height="1" fill="#a4a4a4"/>
<rect x="768" y="220.32" width="3" height="1" fill="#a4a4a4"/>
<rect x="768" y="223.46" width="3" height="1" fill="#a4a4a4"/>
<rect x="768" y="226.60" width="3" height="1" fill="#a4a4a4"/>
<rect x="768" y="229.74" width="3" height="1" fill="#a4a4a4"/>
<rect x="768" y="232.88" width="3" height="1" fill="#a4a4a4"/>
<rect x="768" y="236.02" width="3" height="1" fill="#a4a4a4"/>
<rect x="768" y="239.16" width="3" height="1" fill="#a4a4a4"/>
<rect x="768" y="242.30" width="3" height="1" fill="#a4a4a4"/>
<rect x="768" y="245.44" width="3" height="1" fill="#a4a4a4"/>
<rect x="768" y="248.58" width="3" height="1" fill="#a4a4a4"/>
<rect x="768" y="251.72" width="3" height="1" fill="#a4a4a4"/>
<rect x="768" y="254.86" width="3" height="1" fill="#a4a4a4"/>
<rect x="768" y="258.00" width="3" height="1" fill="#a4a4a4"/>
<rect x="757.5" y="171.5" width="9" height="9" fill="#ffffff" stroke="#bdbdbd" stroke-width="1" rx="2.5"/>
<rect x="408.5" y="298.5" width="23" height="22" fill="#ffffff" stroke="#cbcbcb" stroke-width="1" rx="3"/>
<g transform="translate(413.5,302)">
<rect x="1.8" y="0.6" width="10.4" height="13" fill="#eef1f5" stroke="#92a2b8" stroke-width="0.7"/>
<path d="M12.6 3.4 Q8.2 0.4 4.4 4.8" stroke="#3c8c98" stroke-width="3" fill="none"/>
<path d="M12.6 3.4 Q8.2 0.4 4.4 4.8" stroke="#7ed8b8" stroke-width="1.8" fill="none"/>
<path d="M0.4 8.2 L1.4 2.4 L6.8 6.4Z" fill="#6ccaa8" stroke="#3c8c98" stroke-width="0.6"/>
<path d="M2.4 12.0 Q6.8 14.8 10.4 10.0" stroke="#3a9a40" stroke-width="3" fill="none"/>
<path d="M2.4 12.0 Q6.8 14.8 10.4 10.0" stroke="#78e060" stroke-width="1.8" fill="none"/>
<path d="M13.8 6.4 L12.8 12.4 L7.6 8.6Z" fill="#60d050" stroke="#3a9a40" stroke-width="0.6"/>
</g>
<rect x="729.5" y="298.5" width="23" height="22" fill="#ffffff" stroke="#cbcbcb" stroke-width="1" rx="3"/>
<g transform="translate(734.5,302) translate(14,0) scale(-1,1)">
<rect x="1.8" y="0.6" width="10.4" height="13" fill="#eef1f5" stroke="#92a2b8" stroke-width="0.7"/>
<path d="M12.6 3.4 Q8.2 0.4 4.4 4.8" stroke="#3c8c98" stroke-width="3" fill="none"/>
<path d="M12.6 3.4 Q8.2 0.4 4.4 4.8" stroke="#7ed8b8" stroke-width="1.8" fill="none"/>
<path d="M0.4 8.2 L1.4 2.4 L6.8 6.4Z" fill="#6ccaa8" stroke="#3c8c98" stroke-width="0.6"/>
<path d="M2.4 12.0 Q6.8 14.8 10.4 10.0" stroke="#3a9a40" stroke-width="3" fill="none"/>
<path d="M2.4 12.0 Q6.8 14.8 10.4 10.0" stroke="#78e060" stroke-width="1.8" fill="none"/>
<path d="M13.8 6.4 L12.8 12.4 L7.6 8.6Z" fill="#60d050" stroke="#3a9a40" stroke-width="0.6"/>
</g>
<rect x="438" y="305.2" width="286" height="3.6" fill="#e6e6e6" stroke="#c8c8c8" stroke-width="0.7" rx="1.8"/>
<rect x="438" y="305" width="140" height="4" fill="#e8602e" rx="2"/>
<rect x="442.00" y="313" width="1" height="2" fill="#a4a4a4"/>
<rect x="445.83" y="313" width="1" height="2" fill="#a4a4a4"/>
<rect x="449.67" y="313" width="1" height="2" fill="#a4a4a4"/>
<rect x="453.50" y="313" width="1" height="2" fill="#a4a4a4"/>
<rect x="457.33" y="313" width="1" height="2" fill="#a4a4a4"/>
<rect x="461.17" y="313" width="1" height="2" fill="#a4a4a4"/>
<rect x="465.00" y="313" width="1" height="2" fill="#a4a4a4"/>
<rect x="468.83" y="313" width="1" height="2" fill="#a4a4a4"/>
<rect x="472.67" y="313" width="1" height="2" fill="#a4a4a4"/>
<rect x="476.50" y="313" width="1" height="2" fill="#a4a4a4"/>
<rect x="480.33" y="313" width="1" height="2" fill="#a4a4a4"/>
<rect x="484.17" y="313" width="1" height="2" fill="#a4a4a4"/>
<rect x="488.00" y="313" width="1" height="2" fill="#a4a4a4"/>
<rect x="491.83" y="313" width="1" height="2" fill="#a4a4a4"/>
<rect x="495.67" y="313" width="1" height="2" fill="#a4a4a4"/>
<rect x="499.50" y="313" width="1" height="2" fill="#a4a4a4"/>
<rect x="503.33" y="313" width="1" height="2" fill="#a4a4a4"/>
<rect x="507.17" y="313" width="1" height="2" fill="#a4a4a4"/>
<rect x="511.00" y="313" width="1" height="2" fill="#a4a4a4"/>
<rect x="514.83" y="313" width="1" height="2" fill="#a4a4a4"/>
<rect x="518.67" y="313" width="1" height="2" fill="#a4a4a4"/>
<rect x="522.50" y="313" width="1" height="2" fill="#a4a4a4"/>
<rect x="526.33" y="313" width="1" height="2" fill="#a4a4a4"/>
<rect x="530.17" y="313" width="1" height="2" fill="#a4a4a4"/>
<rect x="534.00" y="313" width="1" height="2" fill="#a4a4a4"/>
<rect x="537.83" y="313" width="1" height="2" fill="#a4a4a4"/>
<rect x="541.67" y="313" width="1" height="2" fill="#a4a4a4"/>
<rect x="545.50" y="313" width="1" height="2" fill="#a4a4a4"/>
<rect x="549.33" y="313" width="1" height="2" fill="#a4a4a4"/>
<rect x="553.17" y="313" width="1" height="2" fill="#a4a4a4"/>
<rect x="557.00" y="313" width="1" height="2" fill="#a4a4a4"/>
<rect x="560.83" y="313" width="1" height="2" fill="#a4a4a4"/>
<rect x="564.67" y="313" width="1" height="2" fill="#a4a4a4"/>
<rect x="568.50" y="313" width="1" height="2" fill="#a4a4a4"/>
<rect x="572.33" y="313" width="1" height="2" fill="#a4a4a4"/>
<rect x="576.17" y="313" width="1" height="2" fill="#a4a4a4"/>
<rect x="580.00" y="313" width="1" height="2" fill="#a4a4a4"/>
<rect x="583.83" y="313" width="1" height="2" fill="#a4a4a4"/>
<rect x="587.67" y="313" width="1" height="2" fill="#a4a4a4"/>
<rect x="591.50" y="313" width="1" height="2" fill="#a4a4a4"/>
<rect x="595.33" y="313" width="1" height="2" fill="#a4a4a4"/>
<rect x="599.17" y="313" width="1" height="2" fill="#a4a4a4"/>
<rect x="603.00" y="313" width="1" height="2" fill="#a4a4a4"/>
<rect x="606.83" y="313" width="1" height="2" fill="#a4a4a4"/>
<rect x="610.67" y="313" width="1" height="2" fill="#a4a4a4"/>
<rect x="614.50" y="313" width="1" height="2" fill="#a4a4a4"/>
<rect x="618.33" y="313" width="1" height="2" fill="#a4a4a4"/>
<rect x="622.17" y="313" width="1" height="2" fill="#a4a4a4"/>
<rect x="626.00" y="313" width="1" height="2" fill="#a4a4a4"/>
<rect x="629.83" y="313" width="1" height="2" fill="#a4a4a4"/>
<rect x="633.67" y="313" width="1" height="2" fill="#a4a4a4"/>
<rect x="637.50" y="313" width="1" height="2" fill="#a4a4a4"/>
<rect x="641.33" y="313" width="1" height="2" fill="#a4a4a4"/>
<rect x="645.17" y="313" width="1" height="2" fill="#a4a4a4"/>
<rect x="649.00" y="313" width="1" height="2" fill="#a4a4a4"/>
<rect x="652.83" y="313" width="1" height="2" fill="#a4a4a4"/>
<rect x="656.67" y="313" width="1" height="2" fill="#a4a4a4"/>
<rect x="660.50" y="313" width="1" height="2" fill="#a4a4a4"/>
<rect x="664.33" y="313" width="1" height="2" fill="#a4a4a4"/>
<rect x="668.17" y="313" width="1" height="2" fill="#a4a4a4"/>
<rect x="672.00" y="313" width="1" height="2" fill="#a4a4a4"/>
<rect x="675.83" y="313" width="1" height="2" fill="#a4a4a4"/>
<rect x="679.67" y="313" width="1" height="2" fill="#a4a4a4"/>
<rect x="683.50" y="313" width="1" height="2" fill="#a4a4a4"/>
<rect x="687.33" y="313" width="1" height="2" fill="#a4a4a4"/>
<rect x="691.17" y="313" width="1" height="2" fill="#a4a4a4"/>
<rect x="695.00" y="313" width="1" height="2" fill="#a4a4a4"/>
<rect x="698.83" y="313" width="1" height="2" fill="#a4a4a4"/>
<rect x="702.67" y="313" width="1" height="2" fill="#a4a4a4"/>
<rect x="706.50" y="313" width="1" height="2" fill="#a4a4a4"/>
<rect x="710.33" y="313" width="1" height="2" fill="#a4a4a4"/>
<rect x="714.17" y="313" width="1" height="2" fill="#a4a4a4"/>
<rect x="718.00" y="313" width="1" height="2" fill="#a4a4a4"/>
<rect x="576.5" y="302.5" width="9" height="9" fill="#ffffff" stroke="#bdbdbd" stroke-width="1" rx="2.5"/>
<rect x="757.5" y="300.5" width="16" height="18" fill="#ffffff" stroke="#cbcbcb" stroke-width="1" rx="3"/>
<text x="0" y="0" transform="translate(762.30,313.30) scale(1.0008,1)" font-family='"Liberation Sans", sans-serif' font-size="11.5" fill="#3a3a3a">0</text>
<rect x="9.5" y="332.5" width="385" height="290" fill="#fafafa" stroke="#d3d3d3" stroke-width="1" rx="1"/>
<text x="0" y="0" transform="translate(16.80,352.50) scale(1.0374,1)" font-family='"Liberation Sans", sans-serif' font-size="11.5" fill="#3a3a3a">Bottom left view</text>
<text x="0" y="0" transform="translate(106.50,352.50) scale(1.0001,1)" font-family='"Liberation Sans", sans-serif' font-size="11.5" fill="#3a3a3a">Pointer Mode</text>
<rect x="180.5" y="339.5" width="40" height="18" fill="#ffffff" stroke="#cbcbcb" stroke-width="1" rx="3"/>
<text x="0" y="0" transform="translate(185.25,352.30) scale(0.9543,1)" font-family='"Liberation Sans", sans-serif' font-size="11.5" fill="#3a3a3a">Select</text>
<rect x="226.5" y="339.5" width="34" height="18" fill="#e8e8e8" stroke="#cbcbcb" stroke-width="1" rx="3"/>
<text x="0" y="0" transform="translate(231.75,352.30) scale(0.9428,1)" font-family='"Liberation Sans", sans-serif' font-size="11.5" fill="#3a3a3a">Drag</text>
<rect x="266.5" y="339.5" width="68" height="18" fill="#ffffff" stroke="#cbcbcb" stroke-width="1" rx="3"/>
<text x="0" y="0" transform="translate(271.50,352.30) scale(0.9862,1)" font-family='"Liberation Sans", sans-serif' font-size="11.5" fill="#3a3a3a">Antialiasing</text>
<rect x="340.5" y="340.5" width="17" height="16" fill="#ffffff" stroke="#cbcbcb" stroke-width="1" rx="3"/>
<g transform="translate(343,342)">
<path d="M2.2 0.8 L7.6 1.2 L8.6 6 L3.4 6Z" fill="#a6ccf2" stroke="#8c90c8" stroke-width="0.6"/>
<path d="M0.8 7.2 Q0.8 5.2 3.5 5.2 L9 5.2 Q11.8 5.2 11.8 7.6 L11.8 10.6 Q11.8 12.2 9.4 12.2 L3 12.2 Q0.8 12.2 0.8 10.6Z" fill="#d8d8d8" stroke="#9a9a9a" stroke-width="0.7"/>
<path d="M1.8 8.4h9" stroke="#f4f4f4" stroke-width="1"/>
<path d="M4 11.4 L8.6 11.4" stroke="#7474a0" stroke-width="1"/>
<circle cx="10" cy="8.2" r="0.7" fill="#4a9a4a"/>
</g>
<rect x="16.5" y="362.5" width="342" height="225" fill="#fcfcfc" stroke="#d8d8d8" stroke-width="1"/>
<g clip-path="url(#clipBL)">
<rect transform="matrix(0.145,0.061,-0.061,0.145,348.895,342.802)" x="14" y="14" width="79" height="39" fill="#6e9444" stroke="#000" stroke-opacity="0.5" stroke-width="1.2"/><rect transform="matrix(0.145,0.061,-0.061,0.145,328.704,346.171)" x="14" y="14" width="79" height="39" fill="#5f8a38" stroke="#000" stroke-opacity="0.5" stroke-width="1.2"/><rect transform="matrix(0.145,0.061,-0.061,0.145,344.601,352.919)" x="14" y="14" width="79" height="39" fill="#62883a" stroke="#000" stroke-opacity="0.5" stroke-width="1.2"/><rect transform="matrix(0.145,0.061,-0.061,0.145,292.615,342.791)" x="14" y="14" width="79" height="39" fill="#74a048" stroke="#000" stroke-opacity="0.5" stroke-width="1.2"/><rect transform="matrix(0.145,0.061,-0.061,0.145,308.512,349.539)" x="14" y="14" width="79" height="39" fill="#6a9040" stroke="#000" stroke-opacity="0.5" stroke-width="1.2"/><rect transform="matrix(0.145,0.061,-0.061,0.145,324.41,356.287)" x="14" y="14" width="79" height="39" fill="#6a9040" stroke="#000" stroke-opacity="0.5" stroke-width="1.2"/><rect transform="matrix(0.145,0.061,-0.061,0.145,340.307,363.035)" x="14" y="14" width="79" height="39" fill="#5a8032" stroke="#000" stroke-opacity="0.5" stroke-width="1.2"/><rect transform="matrix(0.145,0.061,-0.061,0.145,272.424,346.16)" x="14" y="14" width="79" height="39" fill="#6a9040" stroke="#000" stroke-opacity="0.5" stroke-width="1.2"/><rect transform="matrix(0.145,0.061,-0.061,0.145,288.321,352.908)" x="14" y="14" width="79" height="39" fill="#6a9040" stroke="#000" stroke-opacity="0.5" stroke-width="1.2"/><rect transform="matrix(0.145,0.061,-0.061,0.145,304.218,359.656)" x="14" y="14" width="79" height="39" fill="#6e9444" stroke="#000" stroke-opacity="0.5" stroke-width="1.2"/><rect transform="matrix(0.145,0.061,-0.061,0.145,320.115,366.404)" x="14" y="14" width="79" height="39" fill="#6a9040" stroke="#000" stroke-opacity="0.5" stroke-width="1.2"/><rect transform="matrix(0.145,0.061,-0.061,0.145,336.013,373.151)" x="14" y="14" width="79" height="39" fill="#6a9040" stroke="#000" stroke-opacity="0.5" stroke-width="1.2"/><rect transform="matrix(0.145,0.061,-0.061,0.145,351.91,379.899)" x="14" y="14" width="79" height="39" fill="#6a9040" stroke="#000" stroke-opacity="0.5" stroke-width="1.2"/><rect transform="matrix(0.145,0.061,-0.061,0.145,236.336,342.78)" x="14" y="14" width="79" height="39" fill="#5f8a38" stroke="#000" stroke-opacity="0.5" stroke-width="1.2"/><rect transform="matrix(0.145,0.061,-0.061,0.145,252.233,349.528)" x="14" y="14" width="79" height="39" fill="#6a9040" stroke="#000" stroke-opacity="0.5" stroke-width="1.2"/><rect transform="matrix(0.145,0.061,-0.061,0.145,268.13,356.276)" x="14" y="14" width="79" height="39" fill="#5a7a34" stroke="#000" stroke-opacity="0.5" stroke-width="1.2"/><rect transform="matrix(0.145,0.061,-0.061,0.145,284.027,363.024)" x="14" y="14" width="79" height="39" fill="#6a9040" stroke="#000" stroke-opacity="0.5" stroke-width="1.2"/><rect transform="matrix(0.145,0.061,-0.061,0.145,299.924,369.772)" x="14" y="14" width="79" height="39" fill="#62883a" stroke="#000" stroke-opacity="0.5" stroke-width="1.2"/><rect transform="matrix(0.145,0.061,-0.061,0.145,315.821,376.52)" x="14" y="14" width="79" height="39" fill="#62883a" stroke="#000" stroke-opacity="0.5" stroke-width="1.2"/><rect transform="matrix(0.145,0.061,-0.061,0.145,331.718,383.268)" x="14" y="14" width="79" height="39" fill="#6a9040" stroke="#000" stroke-opacity="0.5" stroke-width="1.2"/><rect transform="matrix(0.145,0.061,-0.061,0.145,347.616,390.016)" x="14" y="14" width="79" height="39" fill="#5f8a38" stroke="#000" stroke-opacity="0.5" stroke-width="1.2"/><rect transform="matrix(0.145,0.061,-0.061,0.145,216.144,346.149)" x="14" y="14" width="79" height="39" fill="#6a9040" stroke="#000" stroke-opacity="0.5" stroke-width="1.2"/><rect transform="matrix(0.145,0.061,-0.061,0.145,232.042,352.897)" x="14" y="14" width="79" height="39" fill="#6a9040" stroke="#000" stroke-opacity="0.5" stroke-width="1.2"/><rect transform="matrix(0.145,0.061,-0.061,0.145,247.939,359.645)" x="14" y="14" width="79" height="39" fill="#62883a" stroke="#000" stroke-opacity="0.5" stroke-width="1.2"/><rect transform="matrix(0.145,0.061,-0.061,0.145,263.836,366.392)" x="14" y="14" width="79" height="39" fill="#6a9040" stroke="#000" stroke-opacity="0.5" stroke-width="1.2"/><rect transform="matrix(0.145,0.061,-0.061,0.145,279.733,373.14)" x="14" y="14" width="79" height="39" fill="#5a8032" stroke="#000" stroke-opacity="0.5" stroke-width="1.2"/><rect transform="matrix(0.145,0.061,-0.061,0.145,295.63,379.888)" x="14" y="14" width="79" height="39" fill="#6a9040" stroke="#000" stroke-opacity="0.5" stroke-width="1.2"/><rect transform="matrix(0.145,0.061,-0.061,0.145,311.527,386.636)" x="14" y="14" width="79" height="39" fill="#4e7a2e" stroke="#000" stroke-opacity="0.5" stroke-width="1.2"/><rect transform="matrix(0.145,0.061,-0.061,0.145,327.424,393.384)" x="14" y="14" width="79" height="39" fill="#6a9040" stroke="#000" stroke-opacity="0.5" stroke-width="1.2"/><rect transform="matrix(0.145,0.061,-0.061,0.145,343.321,400.132)" x="14" y="14" width="79" height="39" fill="#5f8a38" stroke="#000" stroke-opacity="0.5" stroke-width="1.2"/><rect transform="matrix(0.145,0.061,-0.061,0.145,180.056,342.769)" x="14" y="14" width="79" height="39" fill="#74a048" stroke="#000" stroke-opacity="0.5" stroke-width="1.2"/><rect transform="matrix(0.145,0.061,-0.061,0.145,195.953,349.517)" x="14" y="14" width="79" height="39" fill="#74a048" stroke="#000" stroke-opacity="0.5" stroke-width="1.2"/><rect transform="matrix(0.145,0.061,-0.061,0.145,211.85,356.265)" x="14" y="14" width="79" height="39" fill="#6a9040" stroke="#000" stroke-opacity="0.5" stroke-width="1.2"/><rect transform="matrix(0.145,0.061,-0.061,0.145,227.747,363.013)" x="14" y="14" width="79" height="39" fill="#6a9040" stroke="#000" stroke-opacity="0.5" stroke-width="1.2"/><rect transform="matrix(0.145,0.061,-0.061,0.145,243.645,369.761)" x="14" y="14" width="79" height="39" fill="#6a9040" stroke="#000" stroke-opacity="0.5" stroke-width="1.2"/><rect transform="matrix(0.145,0.061,-0.061,0.145,259.542,376.509)" x="14" y="14" width="79" height="39" fill="#6a9040" stroke="#000" stroke-opacity="0.5" stroke-width="1.2"/><rect transform="matrix(0.145,0.061,-0.061,0.145,275.439,383.257)" x="14" y="14" width="79" height="39" fill="#62883a" stroke="#000" stroke-opacity="0.5" stroke-width="1.2"/><rect transform="matrix(0.145,0.061,-0.061,0.145,291.336,390.005)" x="14" y="14" width="79" height="39" fill="#6a9040" stroke="#000" stroke-opacity="0.5" stroke-width="1.2"/><rect transform="matrix(0.145,0.061,-0.061,0.145,307.233,396.753)" x="14" y="14" width="79" height="39" fill="#5f8a38" stroke="#000" stroke-opacity="0.5" stroke-width="1.2"/><rect transform="matrix(0.145,0.061,-0.061,0.145,323.13,403.5)" x="14" y="14" width="79" height="39" fill="#6a9040" stroke="#000" stroke-opacity="0.5" stroke-width="1.2"/><rect transform="matrix(0.145,0.061,-0.061,0.145,339.027,410.248)" x="14" y="14" width="79" height="39" fill="#6a9040" stroke="#000" stroke-opacity="0.5" stroke-width="1.2"/><rect transform="matrix(0.145,0.061,-0.061,0.145,159.865,346.138)" x="14" y="14" width="79" height="39" fill="#5a8032" stroke="#000" stroke-opacity="0.5" stroke-width="1.2"/><rect transform="matrix(0.145,0.061,-0.061,0.145,175.762,352.886)" x="14" y="14" width="79" height="39" fill="#5f8a38" stroke="#000" stroke-opacity="0.5" stroke-width="1.2"/><rect transform="matrix(0.145,0.061,-0.061,0.145,191.659,359.633)" x="14" y="14" width="79" height="39" fill="#6e9444" stroke="#000" stroke-opacity="0.5" stroke-width="1.2"/><rect transform="matrix(0.145,0.061,-0.061,0.145,207.556,366.381)" x="14" y="14" width="79" height="39" fill="#62883a" stroke="#000" stroke-opacity="0.5" stroke-width="1.2"/><rect transform="matrix(0.145,0.061,-0.061,0.145,223.453,373.129)" x="14" y="14" width="79" height="39" fill="#5f8a38" stroke="#000" stroke-opacity="0.5" stroke-width="1.2"/><rect transform="matrix(0.145,0.061,-0.061,0.145,239.35,379.877)" x="14" y="14" width="79" height="39" fill="#6a9040" stroke="#000" stroke-opacity="0.5" stroke-width="1.2"/><rect transform="matrix(0.145,0.061,-0.061,0.145,255.248,386.625)" x="14" y="14" width="79" height="39" fill="#6a9040" stroke="#000" stroke-opacity="0.5" stroke-width="1.2"/><rect transform="matrix(0.145,0.061,-0.061,0.145,271.145,393.373)" x="14" y="14" width="79" height="39" fill="#6a9040" stroke="#000" stroke-opacity="0.5" stroke-width="1.2"/><rect transform="matrix(0.145,0.061,-0.061,0.145,287.042,400.121)" x="14" y="14" width="79" height="39" fill="#6e9444" stroke="#000" stroke-opacity="0.5" stroke-width="1.2"/><rect transform="matrix(0.145,0.061,-0.061,0.145,302.939,406.869)" x="14" y="14" width="79" height="39" fill="#6a9040" stroke="#000" stroke-opacity="0.5" stroke-width="1.2"/><rect transform="matrix(0.145,0.061,-0.061,0.145,318.836,413.617)" x="14" y="14" width="79" height="39" fill="#5a8032" stroke="#000" stroke-opacity="0.5" stroke-width="1.2"/><rect transform="matrix(0.145,0.061,-0.061,0.145,334.733,420.365)" x="14" y="14" width="79" height="39" fill="#74a048" stroke="#000" stroke-opacity="0.5" stroke-width="1.2"/><rect transform="matrix(0.145,0.061,-0.061,0.145,350.63,427.113)" x="14" y="14" width="79" height="39" fill="#5f8a38" stroke="#000" stroke-opacity="0.5" stroke-width="1.2"/><rect transform="matrix(0.145,0.061,-0.061,0.145,123.776,342.758)" x="14" y="14" width="79" height="39" fill="#6a9040" stroke="#000" stroke-opacity="0.5" stroke-width="1.2"/><rect transform="matrix(0.145,0.061,-0.061,0.145,139.674,349.506)" x="14" y="14" width="79" height="39" fill="#6a9040" stroke="#000" stroke-opacity="0.5" stroke-width="1.2"/><rect transform="matrix(0.145,0.061,-0.061,0.145,155.571,356.254)" x="14" y="14" width="79" height="39" fill="#6a9040" stroke="#000" stroke-opacity="0.5" stroke-width="1.2"/><rect transform="matrix(0.145,0.061,-0.061,0.145,171.468,363.002)" x="14" y="14" width="79" height="39" fill="#74a048" stroke="#000" stroke-opacity="0.5" stroke-width="1.2"/><rect transform="matrix(0.145,0.061,-0.061,0.145,187.365,369.75)" x="14" y="14" width="79" height="39" fill="#5f8a38" stroke="#000" stroke-opacity="0.5" stroke-width="1.2"/><rect transform="matrix(0.145,0.061,-0.061,0.145,203.262,376.498)" x="14" y="14" width="79" height="39" fill="#4e6e2a" stroke="#000" stroke-opacity="0.5" stroke-width="1.2"/><rect transform="matrix(0.145,0.061,-0.061,0.145,219.159,383.246)" x="14" y="14" width="79" height="39" fill="#6e9444" stroke="#000" stroke-opacity="0.5" stroke-width="1.2"/><rect transform="matrix(0.145,0.061,-0.061,0.145,235.056,389.994)" x="14" y="14" width="79" height="39" fill="#6a9040" stroke="#000" stroke-opacity="0.5" stroke-width="1.2"/><rect transform="matrix(0.145,0.061,-0.061,0.145,250.953,396.741)" x="14" y="14" width="79" height="39" fill="#6a9040" stroke="#000" stroke-opacity="0.5" stroke-width="1.2"/><rect transform="matrix(0.145,0.061,-0.061,0.145,266.851,403.489)" x="14" y="14" width="79" height="39" fill="#74a048" stroke="#000" stroke-opacity="0.5" stroke-width="1.2"/><rect transform="matrix(0.145,0.061,-0.061,0.145,282.748,410.237)" x="14" y="14" width="79" height="39" fill="#527a30" stroke="#000" stroke-opacity="0.5" stroke-width="1.2"/><rect transform="matrix(0.145,0.061,-0.061,0.145,298.645,416.985)" x="14" y="14" width="79" height="39" fill="#6a9040" stroke="#000" stroke-opacity="0.5" stroke-width="1.2"/><rect transform="matrix(0.145,0.061,-0.061,0.145,314.542,423.733)" x="14" y="14" width="79" height="39" fill="#6a9040" stroke="#000" stroke-opacity="0.5" stroke-width="1.2"/><rect transform="matrix(0.145,0.061,-0.061,0.145,330.439,430.481)" x="14" y="14" width="79" height="39" fill="#6a9040" stroke="#000" stroke-opacity="0.5" stroke-width="1.2"/><rect transform="matrix(0.145,0.061,-0.061,0.145,346.336,437.229)" x="14" y="14" width="79" height="39" fill="#6a9040" stroke="#000" stroke-opacity="0.5" stroke-width="1.2"/><rect transform="matrix(0.145,0.061,-0.061,0.145,103.585,346.126)" x="14" y="14" width="79" height="39" fill="#5f8a38" stroke="#000" stroke-opacity="0.5" stroke-width="1.2"/><rect transform="matrix(0.145,0.061,-0.061,0.145,119.482,352.874)" x="14" y="14" width="79" height="39" fill="#62883a" stroke="#000" stroke-opacity="0.5" stroke-width="1.2"/><rect transform="matrix(0.145,0.061,-0.061,0.145,135.379,359.622)" x="14" y="14" width="79" height="39" fill="#74a048" stroke="#000" stroke-opacity="0.5" stroke-width="1.2"/><rect transform="matrix(0.145,0.061,-0.061,0.145,151.277,366.37)" x="14" y="14" width="79" height="39" fill="#4a7028" stroke="#000" stroke-opacity="0.5" stroke-width="1.2"/><rect transform="matrix(0.145,0.061,-0.061,0.145,167.174,373.118)" x="14" y="14" width="79" height="39" fill="#6a9040" stroke="#000" stroke-opacity="0.5" stroke-width="1.2"/><rect transform="matrix(0.145,0.061,-0.061,0.145,183.071,379.866)" x="14" y="14" width="79" height="39" fill="#62883a" stroke="#000" stroke-opacity="0.5" stroke-width="1.2"/><rect transform="matrix(0.145,0.061,-0.061,0.145,198.968,386.614)" x="14" y="14" width="79" height="39" fill="#5a8032" stroke="#000" stroke-opacity="0.5" stroke-width="1.2"/><rect transform="matrix(0.145,0.061,-0.061,0.145,214.865,393.362)" x="14" y="14" width="79" height="39" fill="#6e9444" stroke="#000" stroke-opacity="0.5" stroke-width="1.2"/><rect transform="matrix(0.145,0.061,-0.061,0.145,230.762,400.11)" x="14" y="14" width="79" height="39" fill="#62883a" stroke="#000" stroke-opacity="0.5" stroke-width="1.2"/><rect transform="matrix(0.145,0.061,-0.061,0.145,246.659,406.858)" x="14" y="14" width="79" height="39" fill="#6a9040" stroke="#000" stroke-opacity="0.5" stroke-width="1.2"/><rect transform="matrix(0.145,0.061,-0.061,0.145,262.556,413.606)" x="14" y="14" width="79" height="39" fill="#62883a" stroke="#000" stroke-opacity="0.5" stroke-width="1.2"/><rect transform="matrix(0.145,0.061,-0.061,0.145,278.454,420.354)" x="14" y="14" width="79" height="39" fill="#6e9444" stroke="#000" stroke-opacity="0.5" stroke-width="1.2"/><rect transform="matrix(0.145,0.061,-0.061,0.145,294.351,427.102)" x="14" y="14" width="79" height="39" fill="#6e9444" stroke="#000" stroke-opacity="0.5" stroke-width="1.2"/><rect transform="matrix(0.145,0.061,-0.061,0.145,310.248,433.85)" x="14" y="14" width="79" height="39" fill="#5f8a38" stroke="#000" stroke-opacity="0.5" stroke-width="1.2"/><rect transform="matrix(0.145,0.061,-0.061,0.145,326.145,440.597)" x="14" y="14" width="79" height="39" fill="#5a8032" stroke="#000" stroke-opacity="0.5" stroke-width="1.2"/><rect transform="matrix(0.145,0.061,-0.061,0.145,342.042,447.345)" x="14" y="14" width="79" height="39" fill="#5f8a38" stroke="#000" stroke-opacity="0.5" stroke-width="1.2"/><rect transform="matrix(0.145,0.061,-0.061,0.145,67.497,342.747)" x="14" y="14" width="79" height="39" fill="#74a048" stroke="#000" stroke-opacity="0.5" stroke-width="1.2"/><rect transform="matrix(0.145,0.061,-0.061,0.145,83.394,349.495)" x="14" y="14" width="79" height="39" fill="#5a8032" stroke="#000" stroke-opacity="0.5" stroke-width="1.2"/><rect transform="matrix(0.145,0.061,-0.061,0.145,99.291,356.243)" x="14" y="14" width="79" height="39" fill="#6a9040" stroke="#000" stroke-opacity="0.5" stroke-width="1.2"/><rect transform="matrix(0.145,0.061,-0.061,0.145,115.188,362.991)" x="14" y="14" width="79" height="39" fill="#78a050" stroke="#000" stroke-opacity="0.5" stroke-width="1.2"/><rect transform="matrix(0.145,0.061,-0.061,0.145,131.085,369.739)" x="14" y="14" width="79" height="39" fill="#5f8a38" stroke="#000" stroke-opacity="0.5" stroke-width="1.2"/><rect transform="matrix(0.145,0.061,-0.061,0.145,146.982,376.487)" x="14" y="14" width="79" height="39" fill="#567a32" stroke="#000" stroke-opacity="0.5" stroke-width="1.2"/><rect transform="matrix(0.145,0.061,-0.061,0.145,162.88,383.235)" x="14" y="14" width="79" height="39" fill="#6a9040" stroke="#000" stroke-opacity="0.5" stroke-width="1.2"/><rect transform="matrix(0.145,0.061,-0.061,0.145,178.777,389.982)" x="14" y="14" width="79" height="39" fill="#6a9040" stroke="#000" stroke-opacity="0.5" stroke-width="1.2"/><rect transform="matrix(0.145,0.061,-0.061,0.145,194.674,396.73)" x="14" y="14" width="79" height="39" fill="#6e9444" stroke="#000" stroke-opacity="0.5" stroke-width="1.2"/><rect transform="matrix(0.145,0.061,-0.061,0.145,210.571,403.478)" x="14" y="14" width="79" height="39" fill="#6a9040" stroke="#000" stroke-opacity="0.5" stroke-width="1.2"/><rect transform="matrix(0.145,0.061,-0.061,0.145,226.468,410.226)" x="14" y="14" width="79" height="39" fill="#4e7a2e" stroke="#000" stroke-opacity="0.5" stroke-width="1.2"/><rect transform="matrix(0.145,0.061,-0.061,0.145,242.365,416.974)" x="14" y="14" width="79" height="39" fill="#62883a" stroke="#000" stroke-opacity="0.5" stroke-width="1.2"/><rect transform="matrix(0.145,0.061,-0.061,0.145,258.262,423.722)" x="14" y="14" width="79" height="39" fill="#4e7a2e" stroke="#000" stroke-opacity="0.5" stroke-width="1.2"/><rect transform="matrix(0.145,0.061,-0.061,0.145,274.159,430.47)" x="14" y="14" width="79" height="39" fill="#6e9444" stroke="#000" stroke-opacity="0.5" stroke-width="1.2"/><rect transform="matrix(0.145,0.061,-0.061,0.145,290.056,437.218)" x="14" y="14" width="79" height="39" fill="#74a048" stroke="#000" stroke-opacity="0.5" stroke-width="1.2"/><rect transform="matrix(0.145,0.061,-0.061,0.145,305.954,443.966)" x="14" y="14" width="79" height="39" fill="#54782e" stroke="#000" stroke-opacity="0.5" stroke-width="1.2"/><rect transform="matrix(0.145,0.061,-0.061,0.145,321.851,450.714)" x="14" y="14" width="79" height="39" fill="#74a048" stroke="#000" stroke-opacity="0.5" stroke-width="1.2"/><rect transform="matrix(0.145,0.061,-0.061,0.145,337.748,457.462)" x="14" y="14" width="79" height="39" fill="#7aa44e" stroke="#000" stroke-opacity="0.5" stroke-width="1.2"/><rect transform="matrix(0.145,0.061,-0.061,0.145,353.645,464.21)" x="14" y="14" width="79" height="39" fill="#62883a" stroke="#000" stroke-opacity="0.5" stroke-width="1.2"/><rect transform="matrix(0.145,0.061,-0.061,0.145,47.306,346.115)" x="14" y="14" width="79" height="39" fill="#6e9444" stroke="#000" stroke-opacity="0.5" stroke-width="1.2"/><rect transform="matrix(0.145,0.061,-0.061,0.145,63.203,352.863)" x="14" y="14" width="79" height="39" fill="#6a9040" stroke="#000" stroke-opacity="0.5" stroke-width="1.2"/><rect transform="matrix(0.145,0.061,-0.061,0.145,79.1,359.611)" x="14" y="14" width="79" height="39" fill="#6a9444" stroke="#000" stroke-opacity="0.5" stroke-width="1.2"/><rect transform="matrix(0.145,0.061,-0.061,0.145,94.997,366.359)" x="14" y="14" width="79" height="39" fill="#6e9444" stroke="#000" stroke-opacity="0.5" stroke-width="1.2"/><rect transform="matrix(0.145,0.061,-0.061,0.145,110.894,373.107)" x="14" y="14" width="79" height="39" fill="#6a9444" stroke="#000" stroke-opacity="0.5" stroke-width="1.2"/><rect transform="matrix(0.145,0.061,-0.061,0.145,126.791,379.855)" x="14" y="14" width="79" height="39" fill="#6a9040" stroke="#000" stroke-opacity="0.5" stroke-width="1.2"/><rect transform="matrix(0.145,0.061,-0.061,0.145,142.688,386.603)" x="14" y="14" width="79" height="39" fill="#6a9040" stroke="#000" stroke-opacity="0.5" stroke-width="1.2"/><rect transform="matrix(0.145,0.061,-0.061,0.145,158.585,393.351)" x="14" y="14" width="79" height="39" fill="#6a9040" stroke="#000" stroke-opacity="0.5" stroke-width="1.2"/><rect transform="matrix(0.145,0.061,-0.061,0.145,174.483,400.099)" x="14" y="14" width="79" height="39" fill="#56782e" stroke="#000" stroke-opacity="0.5" stroke-width="1.2"/><rect transform="matrix(0.145,0.061,-0.061,0.145,190.38,406.847)" x="14" y="14" width="79" height="39" fill="#62883a" stroke="#000" stroke-opacity="0.5" stroke-width="1.2"/><rect transform="matrix(0.145,0.061,-0.061,0.145,206.277,413.595)" x="14" y="14" width="79" height="39" fill="#5f8a38" stroke="#000" stroke-opacity="0.5" stroke-width="1.2"/><rect transform="matrix(0.145,0.061,-0.061,0.145,222.174,420.343)" x="14" y="14" width="79" height="39" fill="#5a8032" stroke="#000" stroke-opacity="0.5" stroke-width="1.2"/><rect transform="matrix(0.145,0.061,-0.061,0.145,238.071,427.091)" x="14" y="14" width="79" height="39" fill="#6e9444" stroke="#000" stroke-opacity="0.5" stroke-width="1.2"/><rect transform="matrix(0.145,0.061,-0.061,0.145,253.968,433.838)" x="14" y="14" width="79" height="39" fill="#5f8a38" stroke="#000" stroke-opacity="0.5" stroke-width="1.2"/><rect transform="matrix(0.145,0.061,-0.061,0.145,269.865,440.586)" x="14" y="14" width="79" height="39" fill="#62883a" stroke="#000" stroke-opacity="0.5" stroke-width="1.2"/><rect transform="matrix(0.145,0.061,-0.061,0.145,285.762,447.334)" x="14" y="14" width="79" height="39" fill="#62883a" stroke="#000" stroke-opacity="0.5" stroke-width="1.2"/><rect transform="matrix(0.145,0.061,-0.061,0.145,301.659,454.082)" x="14" y="14" width="79" height="39" fill="#6a9040" stroke="#000" stroke-opacity="0.5" stroke-width="1.2"/><rect transform="matrix(0.145,0.061,-0.061,0.145,317.557,460.83)" x="14" y="14" width="79" height="39" fill="#7aa44e" stroke="#000" stroke-opacity="0.5" stroke-width="1.2"/><rect transform="matrix(0.145,0.061,-0.061,0.145,333.454,467.578)" x="14" y="14" width="79" height="39" fill="#72a046" stroke="#000" stroke-opacity="0.5" stroke-width="1.2"/><rect transform="matrix(0.145,0.061,-0.061,0.145,349.351,474.326)" x="14" y="14" width="79" height="39" fill="#74a048" stroke="#000" stroke-opacity="0.5" stroke-width="1.2"/><rect transform="matrix(0.145,0.061,-0.061,0.145,11.217,342.736)" x="14" y="14" width="79" height="39" fill="#6a9040" stroke="#000" stroke-opacity="0.5" stroke-width="1.2"/><rect transform="matrix(0.145,0.061,-0.061,0.145,27.114,349.484)" x="14" y="14" width="79" height="39" fill="#5a8032" stroke="#000" stroke-opacity="0.5" stroke-width="1.2"/><rect transform="matrix(0.145,0.061,-0.061,0.145,43.011,356.232)" x="14" y="14" width="79" height="39" fill="#78a050" stroke="#000" stroke-opacity="0.5" stroke-width="1.2"/><rect transform="matrix(0.145,0.061,-0.061,0.145,58.909,362.98)" x="14" y="14" width="79" height="39" fill="#5a8030" stroke="#000" stroke-opacity="0.5" stroke-width="1.2"/><rect transform="matrix(0.145,0.061,-0.061,0.145,74.806,369.728)" x="14" y="14" width="79" height="39" fill="#6a9040" stroke="#000" stroke-opacity="0.5" stroke-width="1.2"/><rect transform="matrix(0.145,0.061,-0.061,0.145,90.703,376.476)" x="14" y="14" width="79" height="39" fill="#6a9040" stroke="#000" stroke-opacity="0.5" stroke-width="1.2"/><rect transform="matrix(0.145,0.061,-0.061,0.145,106.6,383.223)" x="14" y="14" width="79" height="39" fill="#4f7425" stroke="#000" stroke-opacity="0.5" stroke-width="1.2"/><rect transform="matrix(0.145,0.061,-0.061,0.145,122.497,389.971)" x="14" y="14" width="79" height="39" fill="#557a2a" stroke="#000" stroke-opacity="0.5" stroke-width="1.2"/><rect transform="matrix(0.145,0.061,-0.061,0.145,138.394,396.719)" x="14" y="14" width="79" height="39" fill="#6a9040" stroke="#000" stroke-opacity="0.5" stroke-width="1.2"/><rect transform="matrix(0.145,0.061,-0.061,0.145,154.291,403.467)" x="14" y="14" width="79" height="39" fill="#78a04a" stroke="#000" stroke-opacity="0.5" stroke-width="1.2"/><rect transform="matrix(0.145,0.061,-0.061,0.145,170.188,410.215)" x="14" y="14" width="79" height="39" fill="#80a850" stroke="#000" stroke-opacity="0.5" stroke-width="1.2"/><rect transform="matrix(0.145,0.061,-0.061,0.145,186.086,416.963)" x="14" y="14" width="79" height="39" fill="#6a9040" stroke="#000" stroke-opacity="0.5" stroke-width="1.2"/><rect transform="matrix(0.145,0.061,-0.061,0.145,201.983,423.711)" x="14" y="14" width="79" height="39" fill="#5a8032" stroke="#000" stroke-opacity="0.5" stroke-width="1.2"/><rect transform="matrix(0.145,0.061,-0.061,0.145,217.88,430.459)" x="14" y="14" width="79" height="39" fill="#5a8032" stroke="#000" stroke-opacity="0.5" stroke-width="1.2"/><rect transform="matrix(0.145,0.061,-0.061,0.145,233.777,437.207)" x="14" y="14" width="79" height="39" fill="#6e9444" stroke="#000" stroke-opacity="0.5" stroke-width="1.2"/><rect transform="matrix(0.145,0.061,-0.061,0.145,249.674,443.955)" x="14" y="14" width="79" height="39" fill="#6e9444" stroke="#000" stroke-opacity="0.5" stroke-width="1.2"/><rect transform="matrix(0.145,0.061,-0.061,0.145,265.571,450.703)" x="14" y="14" width="79" height="39" fill="#74a048" stroke="#000" stroke-opacity="0.5" stroke-width="1.2"/><rect transform="matrix(0.145,0.061,-0.061,0.145,281.468,457.451)" x="14" y="14" width="79" height="39" fill="#6e9444" stroke="#000" stroke-opacity="0.5" stroke-width="1.2"/><rect transform="matrix(0.145,0.061,-0.061,0.145,297.365,464.199)" x="14" y="14" width="79" height="39" fill="#6a9040" stroke="#000" stroke-opacity="0.5" stroke-width="1.2"/><rect transform="matrix(0.145,0.061,-0.061,0.145,313.262,470.947)" x="14" y="14" width="79" height="39" fill="#62883a" stroke="#000" stroke-opacity="0.5" stroke-width="1.2"/><rect transform="matrix(0.145,0.061,-0.061,0.145,329.16,477.694)" x="14" y="14" width="79" height="39" fill="#6a9040" stroke="#000" stroke-opacity="0.5" stroke-width="1.2"/><rect transform="matrix(0.145,0.061,-0.061,0.145,345.057,484.442)" x="14" y="14" width="79" height="39" fill="#5a8032" stroke="#000" stroke-opacity="0.5" stroke-width="1.2"/><rect transform="matrix(0.145,0.061,-0.061,0.145,6.923,352.852)" x="14" y="14" width="79" height="39" fill="#62883a" stroke="#000" stroke-opacity="0.5" stroke-width="1.2"/><rect transform="matrix(0.145,0.061,-0.061,0.145,22.82,359.6)" x="14" y="14" width="79" height="39" fill="#6a9040" stroke="#000" stroke-opacity="0.5" stroke-width="1.2"/><rect transform="matrix(0.145,0.061,-0.061,0.145,38.717,366.348)" x="14" y="14" width="79" height="39" fill="#70964a" stroke="#000" stroke-opacity="0.5" stroke-width="1.2"/><rect transform="matrix(0.145,0.061,-0.061,0.145,54.614,373.096)" x="14" y="14" width="79" height="39" fill="#5e8634" stroke="#000" stroke-opacity="0.5" stroke-width="1.2"/><rect transform="matrix(0.145,0.061,-0.061,0.145,70.512,379.844)" x="14" y="14" width="79" height="39" fill="#6e9a44" stroke="#000" stroke-opacity="0.5" stroke-width="1.2"/><rect transform="matrix(0.145,0.061,-0.061,0.145,86.409,386.592)" x="14" y="14" width="79" height="39" fill="#5e8634" stroke="#000" stroke-opacity="0.5" stroke-width="1.2"/><rect transform="matrix(0.145,0.061,-0.061,0.145,102.306,393.34)" x="14" y="14" width="79" height="39" fill="#6a9040" stroke="#000" stroke-opacity="0.5" stroke-width="1.2"/><rect transform="matrix(0.145,0.061,-0.061,0.145,118.203,400.088)" x="14" y="14" width="79" height="39" fill="#6a9444" stroke="#000" stroke-opacity="0.5" stroke-width="1.2"/><rect transform="matrix(0.145,0.061,-0.061,0.145,134.1,406.836)" x="14" y="14" width="79" height="39" fill="#6a9040" stroke="#000" stroke-opacity="0.5" stroke-width="1.2"/><rect transform="matrix(0.145,0.061,-0.061,0.145,149.997,413.584)" x="14" y="14" width="79" height="39" fill="#5a8032" stroke="#000" stroke-opacity="0.5" stroke-width="1.2"/><rect transform="matrix(0.145,0.061,-0.061,0.145,165.894,420.332)" x="14" y="14" width="79" height="39" fill="#74a046" stroke="#000" stroke-opacity="0.5" stroke-width="1.2"/><rect transform="matrix(0.145,0.061,-0.061,0.145,181.791,427.079)" x="14" y="14" width="79" height="39" fill="#6a9040" stroke="#000" stroke-opacity="0.5" stroke-width="1.2"/><rect transform="matrix(0.145,0.061,-0.061,0.145,197.688,433.827)" x="14" y="14" width="79" height="39" fill="#6e9444" stroke="#000" stroke-opacity="0.5" stroke-width="1.2"/><rect transform="matrix(0.145,0.061,-0.061,0.145,213.586,440.575)" x="14" y="14" width="79" height="39" fill="#62883a" stroke="#000" stroke-opacity="0.5" stroke-width="1.2"/><rect transform="matrix(0.145,0.061,-0.061,0.145,229.483,447.323)" x="14" y="14" width="79" height="39" fill="#74a048" stroke="#000" stroke-opacity="0.5" stroke-width="1.2"/><rect transform="matrix(0.145,0.061,-0.061,0.145,245.38,454.071)" x="14" y="14" width="79" height="39" fill="#74a048" stroke="#000" stroke-opacity="0.5" stroke-width="1.2"/><rect transform="matrix(0.145,0.061,-0.061,0.145,261.277,460.819)" x="14" y="14" width="79" height="39" fill="#6a9040" stroke="#000" stroke-opacity="0.5" stroke-width="1.2"/><rect transform="matrix(0.145,0.061,-0.061,0.145,277.174,467.567)" x="14" y="14" width="79" height="39" fill="#6a9040" stroke="#000" stroke-opacity="0.5" stroke-width="1.2"/><rect transform="matrix(0.145,0.061,-0.061,0.145,293.071,474.315)" x="14" y="14" width="79" height="39" fill="#74a048" stroke="#000" stroke-opacity="0.5" stroke-width="1.2"/><rect transform="matrix(0.145,0.061,-0.061,0.145,308.968,481.063)" x="14" y="14" width="79" height="39" fill="#74a048" stroke="#000" stroke-opacity="0.5" stroke-width="1.2"/><rect transform="matrix(0.145,0.061,-0.061,0.145,324.865,487.811)" x="14" y="14" width="79" height="39" fill="#6e9444" stroke="#000" stroke-opacity="0.5" stroke-width="1.2"/><rect transform="matrix(0.145,0.061,-0.061,0.145,340.763,494.559)" x="14" y="14" width="79" height="39" fill="#74a048" stroke="#000" stroke-opacity="0.5" stroke-width="1.2"/><rect transform="matrix(0.145,0.061,-0.061,0.145,2.629,362.969)" x="14" y="14" width="79" height="39" fill="#6a9040" stroke="#000" stroke-opacity="0.5" stroke-width="1.2"/><rect transform="matrix(0.145,0.061,-0.061,0.145,18.526,369.717)" x="14" y="14" width="79" height="39" fill="#6e9444" stroke="#000" stroke-opacity="0.5" stroke-width="1.2"/><rect transform="matrix(0.145,0.061,-0.061,0.145,34.423,376.464)" x="14" y="14" width="79" height="39" fill="#6e9444" stroke="#000" stroke-opacity="0.5" stroke-width="1.2"/><rect transform="matrix(0.145,0.061,-0.061,0.145,50.32,383.212)" x="14" y="14" width="79" height="39" fill="#70964a" stroke="#000" stroke-opacity="0.5" stroke-width="1.2"/><rect transform="matrix(0.145,0.061,-0.061,0.145,66.217,389.96)" x="14" y="14" width="79" height="39" fill="#6a9040" stroke="#000" stroke-opacity="0.5" stroke-width="1.2"/><rect transform="matrix(0.145,0.061,-0.061,0.145,82.115,396.708)" x="14" y="14" width="79" height="39" fill="#5e8634" stroke="#000" stroke-opacity="0.5" stroke-width="1.2"/><rect transform="matrix(0.145,0.061,-0.061,0.145,98.012,403.456)" x="14" y="14" width="79" height="39" fill="#74984a" stroke="#000" stroke-opacity="0.5" stroke-width="1.2"/><rect transform="matrix(0.145,0.061,-0.061,0.145,113.909,410.204)" x="14" y="14" width="79" height="39" fill="#6a9444" stroke="#000" stroke-opacity="0.5" stroke-width="1.2"/><rect transform="matrix(0.145,0.061,-0.061,0.145,129.806,416.952)" x="14" y="14" width="79" height="39" fill="#74a048" stroke="#000" stroke-opacity="0.5" stroke-width="1.2"/><rect transform="matrix(0.145,0.061,-0.061,0.145,145.703,423.7)" x="14" y="14" width="79" height="39" fill="#5a8032" stroke="#000" stroke-opacity="0.5" stroke-width="1.2"/><rect transform="matrix(0.145,0.061,-0.061,0.145,161.6,430.448)" x="14" y="14" width="79" height="39" fill="#62883a" stroke="#000" stroke-opacity="0.5" stroke-width="1.2"/><rect transform="matrix(0.145,0.061,-0.061,0.145,177.497,437.196)" x="14" y="14" width="79" height="39" fill="#6e9444" stroke="#000" stroke-opacity="0.5" stroke-width="1.2"/><rect transform="matrix(0.145,0.061,-0.061,0.145,193.394,443.944)" x="14" y="14" width="79" height="39" fill="#74a048" stroke="#000" stroke-opacity="0.5" stroke-width="1.2"/><rect transform="matrix(0.145,0.061,-0.061,0.145,209.291,450.692)" x="14" y="14" width="79" height="39" fill="#62883a" stroke="#000" stroke-opacity="0.5" stroke-width="1.2"/><rect transform="matrix(0.145,0.061,-0.061,0.145,225.189,457.44)" x="14" y="14" width="79" height="39" fill="#74a048" stroke="#000" stroke-opacity="0.5" stroke-width="1.2"/><rect transform="matrix(0.145,0.061,-0.061,0.145,241.086,464.188)" x="14" y="14" width="79" height="39" fill="#6e9444" stroke="#000" stroke-opacity="0.5" stroke-width="1.2"/><rect transform="matrix(0.145,0.061,-0.061,0.145,256.983,470.935)" x="14" y="14" width="79" height="39" fill="#6a9040" stroke="#000" stroke-opacity="0.5" stroke-width="1.2"/><rect transform="matrix(0.145,0.061,-0.061,0.145,272.88,477.683)" x="14" y="14" width="79" height="39" fill="#62883a" stroke="#000" stroke-opacity="0.5" stroke-width="1.2"/><rect transform="matrix(0.145,0.061,-0.061,0.145,288.777,484.431)" x="14" y="14" width="79" height="39" fill="#6e9444" stroke="#000" stroke-opacity="0.5" stroke-width="1.2"/><rect transform="matrix(0.145,0.061,-0.061,0.145,304.674,491.179)" x="14" y="14" width="79" height="39" fill="#527a30" stroke="#000" stroke-opacity="0.5" stroke-width="1.2"/><rect transform="matrix(0.145,0.061,-0.061,0.145,320.571,497.927)" x="14" y="14" width="79" height="39" fill="#5f8a38" stroke="#000" stroke-opacity="0.5" stroke-width="1.2"/><rect transform="matrix(0.145,0.061,-0.061,0.145,336.468,504.675)" x="14" y="14" width="79" height="39" fill="#6a9040" stroke="#000" stroke-opacity="0.5" stroke-width="1.2"/><rect transform="matrix(0.145,0.061,-0.061,0.145,352.366,511.423)" x="14" y="14" width="79" height="39" fill="#6a9040" stroke="#000" stroke-opacity="0.5" stroke-width="1.2"/><rect transform="matrix(0.145,0.061,-0.061,0.145,14.232,379.833)" x="14" y="14" width="79" height="39" fill="#6a9040" stroke="#000" stroke-opacity="0.5" stroke-width="1.2"/><rect transform="matrix(0.145,0.061,-0.061,0.145,30.129,386.581)" x="14" y="14" width="79" height="39" fill="#6a9040" stroke="#000" stroke-opacity="0.5" stroke-width="1.2"/><rect transform="matrix(0.145,0.061,-0.061,0.145,46.026,393.329)" x="14" y="14" width="79" height="39" fill="#6e9444" stroke="#000" stroke-opacity="0.5" stroke-width="1.2"/><rect transform="matrix(0.145,0.061,-0.061,0.145,61.923,400.077)" x="14" y="14" width="79" height="39" fill="#6e9444" stroke="#000" stroke-opacity="0.5" stroke-width="1.2"/><rect transform="matrix(0.145,0.061,-0.061,0.145,77.82,406.825)" x="14" y="14" width="79" height="39" fill="#6a9040" stroke="#000" stroke-opacity="0.5" stroke-width="1.2"/><rect transform="matrix(0.145,0.061,-0.061,0.145,93.718,413.573)" x="14" y="14" width="79" height="39" fill="#6a9040" stroke="#000" stroke-opacity="0.5" stroke-width="1.2"/><rect transform="matrix(0.145,0.061,-0.061,0.145,109.615,420.32)" x="14" y="14" width="79" height="39" fill="#5e8634" stroke="#000" stroke-opacity="0.5" stroke-width="1.2"/><rect transform="matrix(0.145,0.061,-0.061,0.145,125.512,427.068)" x="14" y="14" width="79" height="39" fill="#62883a" stroke="#000" stroke-opacity="0.5" stroke-width="1.2"/><rect transform="matrix(0.145,0.061,-0.061,0.145,141.409,433.816)" x="14" y="14" width="79" height="39" fill="#6a9040" stroke="#000" stroke-opacity="0.5" stroke-width="1.2"/><rect transform="matrix(0.145,0.061,-0.061,0.145,157.306,440.564)" x="14" y="14" width="79" height="39" fill="#5f8a38" stroke="#000" stroke-opacity="0.5" stroke-width="1.2"/><rect transform="matrix(0.145,0.061,-0.061,0.145,173.203,447.312)" x="14" y="14" width="79" height="39" fill="#5a8032" stroke="#000" stroke-opacity="0.5" stroke-width="1.2"/><rect transform="matrix(0.145,0.061,-0.061,0.145,189.1,454.06)" x="14" y="14" width="79" height="39" fill="#6e9444" stroke="#000" stroke-opacity="0.5" stroke-width="1.2"/><rect transform="matrix(0.145,0.061,-0.061,0.145,204.997,460.808)" x="14" y="14" width="79" height="39" fill="#5f8a38" stroke="#000" stroke-opacity="0.5" stroke-width="1.2"/><rect transform="matrix(0.145,0.061,-0.061,0.145,220.894,467.556)" x="14" y="14" width="79" height="39" fill="#74a048" stroke="#000" stroke-opacity="0.5" stroke-width="1.2"/><rect transform="matrix(0.145,0.061,-0.061,0.145,236.792,474.304)" x="14" y="14" width="79" height="39" fill="#5f8a38" stroke="#000" stroke-opacity="0.5" stroke-width="1.2"/><rect transform="matrix(0.145,0.061,-0.061,0.145,252.689,481.052)" x="14" y="14" width="79" height="39" fill="#62883a" stroke="#000" stroke-opacity="0.5" stroke-width="1.2"/><rect transform="matrix(0.145,0.061,-0.061,0.145,268.586,487.8)" x="14" y="14" width="79" height="39" fill="#62883a" stroke="#000" stroke-opacity="0.5" stroke-width="1.2"/><rect transform="matrix(0.145,0.061,-0.061,0.145,284.483,494.548)" x="14" y="14" width="79" height="39" fill="#5a8032" stroke="#000" stroke-opacity="0.5" stroke-width="1.2"/><rect transform="matrix(0.145,0.061,-0.061,0.145,300.38,501.296)" x="14" y="14" width="79" height="39" fill="#62883a" stroke="#000" stroke-opacity="0.5" stroke-width="1.2"/><rect transform="matrix(0.145,0.061,-0.061,0.145,316.277,508.043)" x="14" y="14" width="79" height="39" fill="#6a9040" stroke="#000" stroke-opacity="0.5" stroke-width="1.2"/><rect transform="matrix(0.145,0.061,-0.061,0.145,332.174,514.791)" x="14" y="14" width="79" height="39" fill="#6a9040" stroke="#000" stroke-opacity="0.5" stroke-width="1.2"/><rect transform="matrix(0.145,0.061,-0.061,0.145,348.071,521.539)" x="14" y="14" width="79" height="39" fill="#5f8a38" stroke="#000" stroke-opacity="0.5" stroke-width="1.2"/><rect transform="matrix(0.145,0.061,-0.061,0.145,9.938,389.949)" x="14" y="14" width="79" height="39" fill="#62883a" stroke="#000" stroke-opacity="0.5" stroke-width="1.2"/><rect transform="matrix(0.145,0.061,-0.061,0.145,25.835,396.697)" x="14" y="14" width="79" height="39" fill="#6e9444" stroke="#000" stroke-opacity="0.5" stroke-width="1.2"/><rect transform="matrix(0.145,0.061,-0.061,0.145,41.732,403.445)" x="14" y="14" width="79" height="39" fill="#6a9040" stroke="#000" stroke-opacity="0.5" stroke-width="1.2"/><rect transform="matrix(0.145,0.061,-0.061,0.145,57.629,410.193)" x="14" y="14" width="79" height="39" fill="#fafafa"/><rect transform="matrix(0.145,0.061,-0.061,0.145,73.526,416.941)" x="14" y="14" width="79" height="39" fill="#6a9040" stroke="#000" stroke-opacity="0.5" stroke-width="1.2"/><rect transform="matrix(0.145,0.061,-0.061,0.145,89.423,423.689)" x="14" y="14" width="79" height="39" fill="#5e8634" stroke="#000" stroke-opacity="0.5" stroke-width="1.2"/><rect transform="matrix(0.145,0.061,-0.061,0.145,105.32,430.437)" x="14" y="14" width="79" height="39" fill="#5a7e30" stroke="#000" stroke-opacity="0.5" stroke-width="1.2"/><rect transform="matrix(0.145,0.061,-0.061,0.145,121.218,437.185)" x="14" y="14" width="79" height="39" fill="#62883a" stroke="#000" stroke-opacity="0.5" stroke-width="1.2"/><rect transform="matrix(0.145,0.061,-0.061,0.145,137.115,443.933)" x="14" y="14" width="79" height="39" fill="#6a9040" stroke="#000" stroke-opacity="0.5" stroke-width="1.2"/><rect transform="matrix(0.145,0.061,-0.061,0.145,153.012,450.681)" x="14" y="14" width="79" height="39" fill="#6e9444" stroke="#000" stroke-opacity="0.5" stroke-width="1.2"/><rect transform="matrix(0.145,0.061,-0.061,0.145,168.909,457.428)" x="14" y="14" width="79" height="39" fill="#5f8a38" stroke="#000" stroke-opacity="0.5" stroke-width="1.2"/><rect transform="matrix(0.145,0.061,-0.061,0.145,184.806,464.176)" x="14" y="14" width="79" height="39" fill="#5a8032" stroke="#000" stroke-opacity="0.5" stroke-width="1.2"/><rect transform="matrix(0.145,0.061,-0.061,0.145,200.703,470.924)" x="14" y="14" width="79" height="39" fill="#62883a" stroke="#000" stroke-opacity="0.5" stroke-width="1.2"/><rect transform="matrix(0.145,0.061,-0.061,0.145,216.6,477.672)" x="14" y="14" width="79" height="39" fill="#5a8032" stroke="#000" stroke-opacity="0.5" stroke-width="1.2"/><rect transform="matrix(0.145,0.061,-0.061,0.145,232.497,484.42)" x="14" y="14" width="79" height="39" fill="#6a9040" stroke="#000" stroke-opacity="0.5" stroke-width="1.2"/><rect transform="matrix(0.145,0.061,-0.061,0.145,248.395,491.168)" x="14" y="14" width="79" height="39" fill="#6e9444" stroke="#000" stroke-opacity="0.5" stroke-width="1.2"/><rect transform="matrix(0.145,0.061,-0.061,0.145,264.292,497.916)" x="14" y="14" width="79" height="39" fill="#74a048" stroke="#000" stroke-opacity="0.5" stroke-width="1.2"/><rect transform="matrix(0.145,0.061,-0.061,0.145,280.189,504.664)" x="14" y="14" width="79" height="39" fill="#62883a" stroke="#000" stroke-opacity="0.5" stroke-width="1.2"/><rect transform="matrix(0.145,0.061,-0.061,0.145,296.086,511.412)" x="14" y="14" width="79" height="39" fill="#6a9040" stroke="#000" stroke-opacity="0.5" stroke-width="1.2"/><rect transform="matrix(0.145,0.061,-0.061,0.145,311.983,518.16)" x="14" y="14" width="79" height="39" fill="#689244" stroke="#000" stroke-opacity="0.5" stroke-width="1.2"/><rect transform="matrix(0.145,0.061,-0.061,0.145,327.88,524.908)" x="14" y="14" width="79" height="39" fill="#78a050" stroke="#000" stroke-opacity="0.5" stroke-width="1.2"/><rect transform="matrix(0.145,0.061,-0.061,0.145,343.777,531.656)" x="14" y="14" width="79" height="39" fill="#6e9444" stroke="#000" stroke-opacity="0.5" stroke-width="1.2"/><rect transform="matrix(0.145,0.061,-0.061,0.145,5.644,400.066)" x="14" y="14" width="79" height="39" fill="#74a048" stroke="#000" stroke-opacity="0.5" stroke-width="1.2"/><rect transform="matrix(0.145,0.061,-0.061,0.145,21.541,406.814)" x="14" y="14" width="79" height="39" fill="#6a9040" stroke="#000" stroke-opacity="0.5" stroke-width="1.2"/><rect transform="matrix(0.145,0.061,-0.061,0.145,37.438,413.561)" x="14" y="14" width="79" height="39" fill="#6a9040" stroke="#000" stroke-opacity="0.5" stroke-width="1.2"/><rect transform="matrix(0.145,0.061,-0.061,0.145,53.335,420.309)" x="14" y="14" width="79" height="39" fill="#5a7e30" stroke="#000" stroke-opacity="0.5" stroke-width="1.2"/><rect transform="matrix(0.145,0.061,-0.061,0.145,69.232,427.057)" x="14" y="14" width="79" height="39" fill="#62883a" stroke="#000" stroke-opacity="0.5" stroke-width="1.2"/><rect transform="matrix(0.145,0.061,-0.061,0.145,85.129,433.805)" x="14" y="14" width="79" height="39" fill="#5f8a38" stroke="#000" stroke-opacity="0.5" stroke-width="1.2"/><rect transform="matrix(0.145,0.061,-0.061,0.145,101.026,440.553)" x="14" y="14" width="79" height="39" fill="#5f8a38" stroke="#000" stroke-opacity="0.5" stroke-width="1.2"/><rect transform="matrix(0.145,0.061,-0.061,0.145,116.923,447.301)" x="14" y="14" width="79" height="39" fill="#6a9040" stroke="#000" stroke-opacity="0.5" stroke-width="1.2"/><rect transform="matrix(0.145,0.061,-0.061,0.145,132.821,454.049)" x="14" y="14" width="79" height="39" fill="#5f8a38" stroke="#000" stroke-opacity="0.5" stroke-width="1.2"/><rect transform="matrix(0.145,0.061,-0.061,0.145,148.718,460.797)" x="14" y="14" width="79" height="39" fill="#5f8a38" stroke="#000" stroke-opacity="0.5" stroke-width="1.2"/><rect transform="matrix(0.145,0.061,-0.061,0.145,164.615,467.545)" x="14" y="14" width="79" height="39" fill="#5f8a38" stroke="#000" stroke-opacity="0.5" stroke-width="1.2"/><rect transform="matrix(0.145,0.061,-0.061,0.145,180.512,474.293)" x="14" y="14" width="79" height="39" fill="#74a048" stroke="#000" stroke-opacity="0.5" stroke-width="1.2"/><rect transform="matrix(0.145,0.061,-0.061,0.145,196.409,481.041)" x="14" y="14" width="79" height="39" fill="#5f8a38" stroke="#000" stroke-opacity="0.5" stroke-width="1.2"/><rect transform="matrix(0.145,0.061,-0.061,0.145,212.306,487.789)" x="14" y="14" width="79" height="39" fill="#6a9040" stroke="#000" stroke-opacity="0.5" stroke-width="1.2"/><rect transform="matrix(0.145,0.061,-0.061,0.145,228.203,494.537)" x="14" y="14" width="79" height="39" fill="#62883a" stroke="#000" stroke-opacity="0.5" stroke-width="1.2"/><rect transform="matrix(0.145,0.061,-0.061,0.145,244.1,501.284)" x="14" y="14" width="79" height="39" fill="#4e7a2e" stroke="#000" stroke-opacity="0.5" stroke-width="1.2"/><rect transform="matrix(0.145,0.061,-0.061,0.145,259.998,508.032)" x="14" y="14" width="79" height="39" fill="#5a8032" stroke="#000" stroke-opacity="0.5" stroke-width="1.2"/><rect transform="matrix(0.145,0.061,-0.061,0.145,275.895,514.78)" x="14" y="14" width="79" height="39" fill="#74a046" stroke="#000" stroke-opacity="0.5" stroke-width="1.2"/><rect transform="matrix(0.145,0.061,-0.061,0.145,291.792,521.528)" x="14" y="14" width="79" height="39" fill="#76a04a" stroke="#000" stroke-opacity="0.5" stroke-width="1.2"/><rect transform="matrix(0.145,0.061,-0.061,0.145,307.689,528.276)" x="14" y="14" width="79" height="39" fill="#6e9a44" stroke="#000" stroke-opacity="0.5" stroke-width="1.2"/><rect transform="matrix(0.145,0.061,-0.061,0.145,323.586,535.024)" x="14" y="14" width="79" height="39" fill="#6a9044" stroke="#000" stroke-opacity="0.5" stroke-width="1.2"/><rect transform="matrix(0.145,0.061,-0.061,0.145,339.483,541.772)" x="14" y="14" width="79" height="39" fill="#5e8a3a" stroke="#000" stroke-opacity="0.5" stroke-width="1.2"/><rect transform="matrix(0.145,0.061,-0.061,0.145,1.35,410.182)" x="14" y="14" width="79" height="39" fill="#6a9040" stroke="#000" stroke-opacity="0.5" stroke-width="1.2"/><rect transform="matrix(0.145,0.061,-0.061,0.145,17.247,416.93)" x="14" y="14" width="79" height="39" fill="#5e8634" stroke="#000" stroke-opacity="0.5" stroke-width="1.2"/><rect transform="matrix(0.145,0.061,-0.061,0.145,33.144,423.678)" x="14" y="14" width="79" height="39" fill="#6a8a38" stroke="#000" stroke-opacity="0.5" stroke-width="1.2"/><rect transform="matrix(0.145,0.061,-0.061,0.145,49.041,430.426)" x="14" y="14" width="79" height="39" fill="#5f8a38" stroke="#000" stroke-opacity="0.5" stroke-width="1.2"/><rect transform="matrix(0.145,0.061,-0.061,0.145,64.938,437.174)" x="14" y="14" width="79" height="39" fill="#6e9444" stroke="#000" stroke-opacity="0.5" stroke-width="1.2"/><rect transform="matrix(0.145,0.061,-0.061,0.145,80.835,443.922)" x="14" y="14" width="79" height="39" fill="#6e9444" stroke="#000" stroke-opacity="0.5" stroke-width="1.2"/><rect transform="matrix(0.145,0.061,-0.061,0.145,96.732,450.669)" x="14" y="14" width="79" height="39" fill="#6a9040" stroke="#000" stroke-opacity="0.5" stroke-width="1.2"/><rect transform="matrix(0.145,0.061,-0.061,0.145,112.629,457.417)" x="14" y="14" width="79" height="39" fill="#74a048" stroke="#000" stroke-opacity="0.5" stroke-width="1.2"/><rect transform="matrix(0.145,0.061,-0.061,0.145,128.526,464.165)" x="14" y="14" width="79" height="39" fill="#5f8a38" stroke="#000" stroke-opacity="0.5" stroke-width="1.2"/><rect transform="matrix(0.145,0.061,-0.061,0.145,144.424,470.913)" x="14" y="14" width="79" height="39" fill="#62883a" stroke="#000" stroke-opacity="0.5" stroke-width="1.2"/><rect transform="matrix(0.145,0.061,-0.061,0.145,160.321,477.661)" x="14" y="14" width="79" height="39" fill="#6a9040" stroke="#000" stroke-opacity="0.5" stroke-width="1.2"/><rect transform="matrix(0.145,0.061,-0.061,0.145,176.218,484.409)" x="14" y="14" width="79" height="39" fill="#6e9444" stroke="#000" stroke-opacity="0.5" stroke-width="1.2"/><rect transform="matrix(0.145,0.061,-0.061,0.145,192.115,491.157)" x="14" y="14" width="79" height="39" fill="#6a9040" stroke="#000" stroke-opacity="0.5" stroke-width="1.2"/><rect transform="matrix(0.145,0.061,-0.061,0.145,208.012,497.905)" x="14" y="14" width="79" height="39" fill="#6a9040" stroke="#000" stroke-opacity="0.5" stroke-width="1.2"/><rect transform="matrix(0.145,0.061,-0.061,0.145,223.909,504.653)" x="14" y="14" width="79" height="39" fill="#6e9444" stroke="#000" stroke-opacity="0.5" stroke-width="1.2"/><rect transform="matrix(0.145,0.061,-0.061,0.145,239.806,511.401)" x="14" y="14" width="79" height="39" fill="#6a8c3e" stroke="#000" stroke-opacity="0.5" stroke-width="1.2"/><rect transform="matrix(0.145,0.061,-0.061,0.145,255.703,518.149)" x="14" y="14" width="79" height="39" fill="#5e8040" stroke="#000" stroke-opacity="0.5" stroke-width="1.2"/><rect transform="matrix(0.145,0.061,-0.061,0.145,271.601,524.897)" x="14" y="14" width="79" height="39" fill="#5e823a" stroke="#000" stroke-opacity="0.5" stroke-width="1.2"/><rect transform="matrix(0.145,0.061,-0.061,0.145,287.498,531.645)" x="14" y="14" width="79" height="39" fill="#405230" stroke="#000" stroke-opacity="0.5" stroke-width="1.2"/><rect transform="matrix(0.145,0.061,-0.061,0.145,303.395,538.393)" x="14" y="14" width="79" height="39" fill="#2e4420" stroke="#000" stroke-opacity="0.5" stroke-width="1.2"/><rect transform="matrix(0.145,0.061,-0.061,0.145,319.292,545.14)" x="14" y="14" width="79" height="39" fill="#5a6e48" stroke="#000" stroke-opacity="0.5" stroke-width="1.2"/><rect transform="matrix(0.145,0.061,-0.061,0.145,335.189,551.888)" x="14" y="14" width="79" height="39" fill="#56704a" stroke="#000" stroke-opacity="0.5" stroke-width="1.2"/><rect transform="matrix(0.145,0.061,-0.061,0.145,351.086,558.636)" x="14" y="14" width="79" height="39" fill="#6a8a50" stroke="#000" stroke-opacity="0.5" stroke-width="1.2"/><rect transform="matrix(0.145,0.061,-0.061,0.145,12.952,427.046)" x="14" y="14" width="79" height="39" fill="#5f8a38" stroke="#000" stroke-opacity="0.5" stroke-width="1.2"/><rect transform="matrix(0.145,0.061,-0.061,0.145,28.85,433.794)" x="14" y="14" width="79" height="39" fill="#74a048" stroke="#000" stroke-opacity="0.5" stroke-width="1.2"/><rect transform="matrix(0.145,0.061,-0.061,0.145,44.747,440.542)" x="14" y="14" width="79" height="39" fill="#5a8032" stroke="#000" stroke-opacity="0.5" stroke-width="1.2"/><rect transform="matrix(0.145,0.061,-0.061,0.145,60.644,447.29)" x="14" y="14" width="79" height="39" fill="#6a9040" stroke="#000" stroke-opacity="0.5" stroke-width="1.2"/><rect transform="matrix(0.145,0.061,-0.061,0.145,76.541,454.038)" x="14" y="14" width="79" height="39" fill="#5a8034" stroke="#000" stroke-opacity="0.5" stroke-width="1.2"/><rect transform="matrix(0.145,0.061,-0.061,0.145,92.438,460.786)" x="14" y="14" width="79" height="39" fill="#6a9040" stroke="#000" stroke-opacity="0.5" stroke-width="1.2"/><rect transform="matrix(0.145,0.061,-0.061,0.145,108.335,467.534)" x="14" y="14" width="79" height="39" fill="#74a048" stroke="#000" stroke-opacity="0.5" stroke-width="1.2"/><rect transform="matrix(0.145,0.061,-0.061,0.145,124.232,474.282)" x="14" y="14" width="79" height="39" fill="#74a048" stroke="#000" stroke-opacity="0.5" stroke-width="1.2"/><rect transform="matrix(0.145,0.061,-0.061,0.145,140.129,481.03)" x="14" y="14" width="79" height="39" fill="#74a048" stroke="#000" stroke-opacity="0.5" stroke-width="1.2"/><rect transform="matrix(0.145,0.061,-0.061,0.145,156.027,487.778)" x="14" y="14" width="79" height="39" fill="#6a9040" stroke="#000" stroke-opacity="0.5" stroke-width="1.2"/><rect transform="matrix(0.145,0.061,-0.061,0.145,171.924,494.525)" x="14" y="14" width="79" height="39" fill="#62883a" stroke="#000" stroke-opacity="0.5" stroke-width="1.2"/><rect transform="matrix(0.145,0.061,-0.061,0.145,187.821,501.273)" x="14" y="14" width="79" height="39" fill="#5a8032" stroke="#000" stroke-opacity="0.5" stroke-width="1.2"/><rect transform="matrix(0.145,0.061,-0.061,0.145,203.718,508.021)" x="14" y="14" width="79" height="39" fill="#3f4a30" stroke="#000" stroke-opacity="0.5" stroke-width="1.2"/><rect transform="matrix(0.145,0.061,-0.061,0.145,219.615,514.769)" x="14" y="14" width="79" height="39" fill="#6a8a48" stroke="#000" stroke-opacity="0.5" stroke-width="1.2"/><rect transform="matrix(0.145,0.061,-0.061,0.145,235.512,521.517)" x="14" y="14" width="79" height="39" fill="#4c6230" stroke="#000" stroke-opacity="0.5" stroke-width="1.2"/><rect transform="matrix(0.145,0.061,-0.061,0.145,251.409,528.265)" x="14" y="14" width="79" height="39" fill="#3e5228" stroke="#000" stroke-opacity="0.5" stroke-width="1.2"/><rect transform="matrix(0.145,0.061,-0.061,0.145,267.306,535.013)" x="14" y="14" width="79" height="39" fill="#4a6230" stroke="#000" stroke-opacity="0.5" stroke-width="1.2"/><rect transform="matrix(0.145,0.061,-0.061,0.145,283.204,541.761)" x="14" y="14" width="79" height="39" fill="#667266" stroke="#000" stroke-opacity="0.5" stroke-width="1.2"/><rect transform="matrix(0.145,0.061,-0.061,0.145,299.101,548.509)" x="14" y="14" width="79" height="39" fill="#7e8c6a" stroke="#000" stroke-opacity="0.5" stroke-width="1.2"/><rect transform="matrix(0.145,0.061,-0.061,0.145,314.998,555.257)" x="14" y="14" width="79" height="39" fill="#b8c8a0" stroke="#000" stroke-opacity="0.5" stroke-width="1.2"/><rect transform="matrix(0.145,0.061,-0.061,0.145,330.895,562.005)" x="14" y="14" width="79" height="39" fill="#c8c8c8" stroke="#000" stroke-opacity="0.5" stroke-width="1.2"/><rect transform="matrix(0.145,0.061,-0.061,0.145,346.792,568.753)" x="14" y="14" width="79" height="39" fill="#8a9a80" stroke="#000" stroke-opacity="0.5" stroke-width="1.2"/><rect transform="matrix(0.145,0.061,-0.061,0.145,8.658,437.163)" x="14" y="14" width="79" height="39" fill="#5a8032" stroke="#000" stroke-opacity="0.5" stroke-width="1.2"/><rect transform="matrix(0.145,0.061,-0.061,0.145,24.555,443.91)" x="14" y="14" width="79" height="39" fill="#7aa04a" stroke="#000" stroke-opacity="0.5" stroke-width="1.2"/><rect transform="matrix(0.145,0.061,-0.061,0.145,40.453,450.658)" x="14" y="14" width="79" height="39" fill="#5a8032" stroke="#000" stroke-opacity="0.5" stroke-width="1.2"/><rect transform="matrix(0.145,0.061,-0.061,0.145,56.35,457.406)" x="14" y="14" width="79" height="39" fill="#74a048" stroke="#000" stroke-opacity="0.5" stroke-width="1.2"/><rect transform="matrix(0.145,0.061,-0.061,0.145,72.247,464.154)" x="14" y="14" width="79" height="39" fill="#5a8032" stroke="#000" stroke-opacity="0.5" stroke-width="1.2"/><rect transform="matrix(0.145,0.061,-0.061,0.145,88.144,470.902)" x="14" y="14" width="79" height="39" fill="#6a9040" stroke="#000" stroke-opacity="0.5" stroke-width="1.2"/><rect transform="matrix(0.145,0.061,-0.061,0.145,104.041,477.65)" x="14" y="14" width="79" height="39" fill="#62883a" stroke="#000" stroke-opacity="0.5" stroke-width="1.2"/><rect transform="matrix(0.145,0.061,-0.061,0.145,119.938,484.398)" x="14" y="14" width="79" height="39" fill="#62883a" stroke="#000" stroke-opacity="0.5" stroke-width="1.2"/><rect transform="matrix(0.145,0.061,-0.061,0.145,135.835,491.146)" x="14" y="14" width="79" height="39" fill="#62883a" stroke="#000" stroke-opacity="0.5" stroke-width="1.2"/><rect transform="matrix(0.145,0.061,-0.061,0.145,151.732,497.894)" x="14" y="14" width="79" height="39" fill="#62883a" stroke="#000" stroke-opacity="0.5" stroke-width="1.2"/><rect transform="matrix(0.145,0.061,-0.061,0.145,167.63,504.642)" x="14" y="14" width="79" height="39" fill="#6a9040" stroke="#000" stroke-opacity="0.5" stroke-width="1.2"/><rect transform="matrix(0.145,0.061,-0.061,0.145,183.527,511.39)" x="14" y="14" width="79" height="39" fill="#404a40" stroke="#000" stroke-opacity="0.5" stroke-width="1.2"/><rect transform="matrix(0.145,0.061,-0.061,0.145,199.424,518.138)" x="14" y="14" width="79" height="39" fill="#1c2430" stroke="#000" stroke-opacity="0.5" stroke-width="1.2"/><rect transform="matrix(0.145,0.061,-0.061,0.145,215.321,524.886)" x="14" y="14" width="79" height="39" fill="#6a8cb8" stroke="#000" stroke-opacity="0.5" stroke-width="1.2"/><rect transform="matrix(0.145,0.061,-0.061,0.145,231.218,531.634)" x="14" y="14" width="79" height="39" fill="#7090b8" stroke="#000" stroke-opacity="0.5" stroke-width="1.2"/><rect transform="matrix(0.145,0.061,-0.061,0.145,247.115,538.381)" x="14" y="14" width="79" height="39" fill="#c8c8c4" stroke="#000" stroke-opacity="0.5" stroke-width="1.2"/><rect transform="matrix(0.145,0.061,-0.061,0.145,263.012,545.129)" x="14" y="14" width="79" height="39" fill="#dcd8e8" stroke="#000" stroke-opacity="0.5" stroke-width="1.2"/><rect transform="matrix(0.145,0.061,-0.061,0.145,278.909,551.877)" x="14" y="14" width="79" height="39" fill="#dcdcdc" stroke="#000" stroke-opacity="0.5" stroke-width="1.2"/><rect transform="matrix(0.145,0.061,-0.061,0.145,294.806,558.625)" x="14" y="14" width="79" height="39" fill="#dce8f8" stroke="#000" stroke-opacity="0.5" stroke-width="1.2"/><rect transform="matrix(0.145,0.061,-0.061,0.145,310.704,565.373)" x="14" y="14" width="79" height="39" fill="#7098d0" stroke="#000" stroke-opacity="0.5" stroke-width="1.2"/><rect transform="matrix(0.145,0.061,-0.061,0.145,326.601,572.121)" x="14" y="14" width="79" height="39" fill="#a0b8d8" stroke="#000" stroke-opacity="0.5" stroke-width="1.2"/><rect transform="matrix(0.145,0.061,-0.061,0.145,342.498,578.869)" x="14" y="14" width="79" height="39" fill="#c0c8d0" stroke="#000" stroke-opacity="0.5" stroke-width="1.2"/><rect transform="matrix(0.145,0.061,-0.061,0.145,4.364,447.279)" x="14" y="14" width="79" height="39" fill="#62883a" stroke="#000" stroke-opacity="0.5" stroke-width="1.2"/><rect transform="matrix(0.145,0.061,-0.061,0.145,20.261,454.027)" x="14" y="14" width="79" height="39" fill="#74a048" stroke="#000" stroke-opacity="0.5" stroke-width="1.2"/><rect transform="matrix(0.145,0.061,-0.061,0.145,36.158,460.775)" x="14" y="14" width="79" height="39" fill="#62883a" stroke="#000" stroke-opacity="0.5" stroke-width="1.2"/><rect transform="matrix(0.145,0.061,-0.061,0.145,52.056,467.523)" x="14" y="14" width="79" height="39" fill="#6a9040" stroke="#000" stroke-opacity="0.5" stroke-width="1.2"/><rect transform="matrix(0.145,0.061,-0.061,0.145,67.953,474.271)" x="14" y="14" width="79" height="39" fill="#80a850" stroke="#000" stroke-opacity="0.5" stroke-width="1.2"/><rect transform="matrix(0.145,0.061,-0.061,0.145,83.85,481.019)" x="14" y="14" width="79" height="39" fill="#3e5e24" stroke="#000" stroke-opacity="0.5" stroke-width="1.2"/><rect transform="matrix(0.145,0.061,-0.061,0.145,99.747,487.766)" x="14" y="14" width="79" height="39" fill="#72a046" stroke="#000" stroke-opacity="0.5" stroke-width="1.2"/><rect transform="matrix(0.145,0.061,-0.061,0.145,115.644,494.514)" x="14" y="14" width="79" height="39" fill="#557a30" stroke="#000" stroke-opacity="0.5" stroke-width="1.2"/><rect transform="matrix(0.145,0.061,-0.061,0.145,131.541,501.262)" x="14" y="14" width="79" height="39" fill="#5f8a38" stroke="#000" stroke-opacity="0.5" stroke-width="1.2"/><rect transform="matrix(0.145,0.061,-0.061,0.145,147.438,508.01)" x="14" y="14" width="79" height="39" fill="#6a9040" stroke="#000" stroke-opacity="0.5" stroke-width="1.2"/><rect transform="matrix(0.145,0.061,-0.061,0.145,163.335,514.758)" x="14" y="14" width="79" height="39" fill="#6a8848" stroke="#000" stroke-opacity="0.5" stroke-width="1.2"/><rect transform="matrix(0.145,0.061,-0.061,0.145,179.233,521.506)" x="14" y="14" width="79" height="39" fill="#34465e" stroke="#000" stroke-opacity="0.5" stroke-width="1.2"/><rect transform="matrix(0.145,0.061,-0.061,0.145,195.13,528.254)" x="14" y="14" width="79" height="39" fill="#a8a8aa" stroke="#000" stroke-opacity="0.5" stroke-width="1.2"/><rect transform="matrix(0.145,0.061,-0.061,0.145,211.027,535.002)" x="14" y="14" width="79" height="39" fill="#e0e4f4" stroke="#000" stroke-opacity="0.5" stroke-width="1.2"/><rect transform="matrix(0.145,0.061,-0.061,0.145,226.924,541.75)" x="14" y="14" width="79" height="39" fill="#d4f0fc" stroke="#000" stroke-opacity="0.5" stroke-width="1.2"/><rect transform="matrix(0.145,0.061,-0.061,0.145,242.821,548.498)" x="14" y="14" width="79" height="39" fill="#a4a4a8" stroke="#000" stroke-opacity="0.5" stroke-width="1.2"/><rect transform="matrix(0.145,0.061,-0.061,0.145,258.718,555.246)" x="14" y="14" width="79" height="39" fill="#6a6a6a" stroke="#000" stroke-opacity="0.5" stroke-width="1.2"/><rect transform="matrix(0.145,0.061,-0.061,0.145,274.615,561.994)" x="14" y="14" width="79" height="39" fill="#6a8cbc" stroke="#000" stroke-opacity="0.5" stroke-width="1.2"/><rect transform="matrix(0.145,0.061,-0.061,0.145,290.512,568.742)" x="14" y="14" width="79" height="39" fill="#4a5a5a" stroke="#000" stroke-opacity="0.5" stroke-width="1.2"/><rect transform="matrix(0.145,0.061,-0.061,0.145,306.409,575.49)" x="14" y="14" width="79" height="39" fill="#8aa8d0" stroke="#000" stroke-opacity="0.5" stroke-width="1.2"/><rect transform="matrix(0.145,0.061,-0.061,0.145,0.07,457.395)" x="14" y="14" width="79" height="39" fill="#5f8a38" stroke="#000" stroke-opacity="0.5" stroke-width="1.2"/><rect transform="matrix(0.145,0.061,-0.061,0.145,15.967,464.143)" x="14" y="14" width="79" height="39" fill="#62883a" stroke="#000" stroke-opacity="0.5" stroke-width="1.2"/><rect transform="matrix(0.145,0.061,-0.061,0.145,31.864,470.891)" x="14" y="14" width="79" height="39" fill="#5f8a38" stroke="#000" stroke-opacity="0.5" stroke-width="1.2"/><rect transform="matrix(0.145,0.061,-0.061,0.145,47.761,477.639)" x="14" y="14" width="79" height="39" fill="#6a9040" stroke="#000" stroke-opacity="0.5" stroke-width="1.2"/><rect transform="matrix(0.145,0.061,-0.061,0.145,63.659,484.387)" x="14" y="14" width="79" height="39" fill="#7aa44e" stroke="#000" stroke-opacity="0.5" stroke-width="1.2"/><rect transform="matrix(0.145,0.061,-0.061,0.145,79.556,491.135)" x="14" y="14" width="79" height="39" fill="#6e9444" stroke="#000" stroke-opacity="0.5" stroke-width="1.2"/><rect transform="matrix(0.145,0.061,-0.061,0.145,95.453,497.883)" x="14" y="14" width="79" height="39" fill="#6a9040" stroke="#000" stroke-opacity="0.5" stroke-width="1.2"/><rect transform="matrix(0.145,0.061,-0.061,0.145,111.35,504.631)" x="14" y="14" width="79" height="39" fill="#6a9040" stroke="#000" stroke-opacity="0.5" stroke-width="1.2"/><rect transform="matrix(0.145,0.061,-0.061,0.145,127.247,511.379)" x="14" y="14" width="79" height="39" fill="#6a8c40" stroke="#000" stroke-opacity="0.5" stroke-width="1.2"/><rect transform="matrix(0.145,0.061,-0.061,0.145,143.144,518.127)" x="14" y="14" width="79" height="39" fill="#6e8248" stroke="#000" stroke-opacity="0.5" stroke-width="1.2"/><rect transform="matrix(0.145,0.061,-0.061,0.145,159.041,524.875)" x="14" y="14" width="79" height="39" fill="#6a7e4a" stroke="#000" stroke-opacity="0.5" stroke-width="1.2"/><rect transform="matrix(0.145,0.061,-0.061,0.145,174.938,531.622)" x="14" y="14" width="79" height="39" fill="#a29ea4" stroke="#000" stroke-opacity="0.5" stroke-width="1.2"/><rect transform="matrix(0.145,0.061,-0.061,0.145,190.836,538.37)" x="14" y="14" width="79" height="39" fill="#f8f8f8" stroke="#000" stroke-opacity="0.5" stroke-width="1.2"/><rect transform="matrix(0.145,0.061,-0.061,0.145,206.733,545.118)" x="14" y="14" width="79" height="39" fill="#c0e4f8" stroke="#000" stroke-opacity="0.5" stroke-width="1.2"/><rect transform="matrix(0.145,0.061,-0.061,0.145,222.63,551.866)" x="14" y="14" width="79" height="39" fill="#a8ccf0" stroke="#000" stroke-opacity="0.5" stroke-width="1.2"/><rect transform="matrix(0.145,0.061,-0.061,0.145,238.527,558.614)" x="14" y="14" width="79" height="39" fill="#5a7aa8" stroke="#000" stroke-opacity="0.5" stroke-width="1.2"/><rect transform="matrix(0.145,0.061,-0.061,0.145,254.424,565.362)" x="14" y="14" width="79" height="39" fill="#5a78a4" stroke="#000" stroke-opacity="0.5" stroke-width="1.2"/><rect transform="matrix(0.145,0.061,-0.061,0.145,270.321,572.11)" x="14" y="14" width="79" height="39" fill="#90b0d8" stroke="#000" stroke-opacity="0.5" stroke-width="1.2"/><rect transform="matrix(0.145,0.061,-0.061,0.145,286.218,578.858)" x="14" y="14" width="79" height="39" fill="#c0d0e0" stroke="#000" stroke-opacity="0.5" stroke-width="1.2"/><rect transform="matrix(0.145,0.061,-0.061,0.145,11.673,474.26)" x="14" y="14" width="79" height="39" fill="#6a9040" stroke="#000" stroke-opacity="0.5" stroke-width="1.2"/><rect transform="matrix(0.145,0.061,-0.061,0.145,27.57,481.007)" x="14" y="14" width="79" height="39" fill="#6a9040" stroke="#000" stroke-opacity="0.5" stroke-width="1.2"/><rect transform="matrix(0.145,0.061,-0.061,0.145,43.467,487.755)" x="14" y="14" width="79" height="39" fill="#6a9040" stroke="#000" stroke-opacity="0.5" stroke-width="1.2"/><rect transform="matrix(0.145,0.061,-0.061,0.145,59.364,494.503)" x="14" y="14" width="79" height="39" fill="#5f8a38" stroke="#000" stroke-opacity="0.5" stroke-width="1.2"/><rect transform="matrix(0.145,0.061,-0.061,0.145,75.262,501.251)" x="14" y="14" width="79" height="39" fill="#6a9040" stroke="#000" stroke-opacity="0.5" stroke-width="1.2"/><rect transform="matrix(0.145,0.061,-0.061,0.145,91.159,507.999)" x="14" y="14" width="79" height="39" fill="#6a9040" stroke="#000" stroke-opacity="0.5" stroke-width="1.2"/><rect transform="matrix(0.145,0.061,-0.061,0.145,107.056,514.747)" x="14" y="14" width="79" height="39" fill="#76a048" stroke="#000" stroke-opacity="0.5" stroke-width="1.2"/><rect transform="matrix(0.145,0.061,-0.061,0.145,122.953,521.495)" x="14" y="14" width="79" height="39" fill="#88b050" stroke="#000" stroke-opacity="0.5" stroke-width="1.2"/><rect transform="matrix(0.145,0.061,-0.061,0.145,138.85,528.243)" x="14" y="14" width="79" height="39" fill="#687a4c" stroke="#000" stroke-opacity="0.5" stroke-width="1.2"/><rect transform="matrix(0.145,0.061,-0.061,0.145,154.747,534.991)" x="14" y="14" width="79" height="39" fill="#3e5226" stroke="#000" stroke-opacity="0.5" stroke-width="1.2"/><rect transform="matrix(0.145,0.061,-0.061,0.145,170.644,541.739)" x="14" y="14" width="79" height="39" fill="#606060" stroke="#000" stroke-opacity="0.5" stroke-width="1.2"/><rect transform="matrix(0.145,0.061,-0.061,0.145,186.541,548.487)" x="14" y="14" width="79" height="39" fill="#dcdcdc" stroke="#000" stroke-opacity="0.5" stroke-width="1.2"/><rect transform="matrix(0.145,0.061,-0.061,0.145,202.438,555.235)" x="14" y="14" width="79" height="39" fill="#a0c4ec" stroke="#000" stroke-opacity="0.5" stroke-width="1.2"/><rect transform="matrix(0.145,0.061,-0.061,0.145,218.336,561.983)" x="14" y="14" width="79" height="39" fill="#88aadc" stroke="#000" stroke-opacity="0.5" stroke-width="1.2"/><rect transform="matrix(0.145,0.061,-0.061,0.145,234.233,568.73)" x="14" y="14" width="79" height="39" fill="#a0c4ec" stroke="#000" stroke-opacity="0.5" stroke-width="1.2"/><rect transform="matrix(0.145,0.061,-0.061,0.145,250.13,575.478)" x="14" y="14" width="79" height="39" fill="#7090c0" stroke="#000" stroke-opacity="0.5" stroke-width="1.2"/><rect transform="matrix(0.145,0.061,-0.061,0.145,7.379,484.376)" x="14" y="14" width="79" height="39" fill="#6e9444" stroke="#000" stroke-opacity="0.5" stroke-width="1.2"/><rect transform="matrix(0.145,0.061,-0.061,0.145,23.276,491.124)" x="14" y="14" width="79" height="39" fill="#6a9040" stroke="#000" stroke-opacity="0.5" stroke-width="1.2"/><rect transform="matrix(0.145,0.061,-0.061,0.145,39.173,497.872)" x="14" y="14" width="79" height="39" fill="#6a9040" stroke="#000" stroke-opacity="0.5" stroke-width="1.2"/><rect transform="matrix(0.145,0.061,-0.061,0.145,55.07,504.62)" x="14" y="14" width="79" height="39" fill="#6a9040" stroke="#000" stroke-opacity="0.5" stroke-width="1.2"/><rect transform="matrix(0.145,0.061,-0.061,0.145,70.967,511.368)" x="14" y="14" width="79" height="39" fill="#5a8032" stroke="#000" stroke-opacity="0.5" stroke-width="1.2"/><rect transform="matrix(0.145,0.061,-0.061,0.145,86.865,518.116)" x="14" y="14" width="79" height="39" fill="#5a7a2e" stroke="#000" stroke-opacity="0.5" stroke-width="1.2"/><rect transform="matrix(0.145,0.061,-0.061,0.145,102.762,524.863)" x="14" y="14" width="79" height="39" fill="#5f8a38" stroke="#000" stroke-opacity="0.5" stroke-width="1.2"/><rect transform="matrix(0.145,0.061,-0.061,0.145,118.659,531.611)" x="14" y="14" width="79" height="39" fill="#5a8030" stroke="#000" stroke-opacity="0.5" stroke-width="1.2"/><rect transform="matrix(0.145,0.061,-0.061,0.145,134.556,538.359)" x="14" y="14" width="79" height="39" fill="#4e6e34" stroke="#000" stroke-opacity="0.5" stroke-width="1.2"/><rect transform="matrix(0.145,0.061,-0.061,0.145,150.453,545.107)" x="14" y="14" width="79" height="39" fill="#6e4a3a" stroke="#000" stroke-opacity="0.5" stroke-width="1.2"/><rect transform="matrix(0.145,0.061,-0.061,0.145,166.35,551.855)" x="14" y="14" width="79" height="39" fill="#4a544c" stroke="#000" stroke-opacity="0.5" stroke-width="1.2"/><rect transform="matrix(0.145,0.061,-0.061,0.145,182.247,558.603)" x="14" y="14" width="79" height="39" fill="#6a7468" stroke="#000" stroke-opacity="0.5" stroke-width="1.2"/><rect transform="matrix(0.145,0.061,-0.061,0.145,198.144,565.351)" x="14" y="14" width="79" height="39" fill="#a8ccf0" stroke="#000" stroke-opacity="0.5" stroke-width="1.2"/><rect transform="matrix(0.145,0.061,-0.061,0.145,214.041,572.099)" x="14" y="14" width="79" height="39" fill="#90b0e0" stroke="#000" stroke-opacity="0.5" stroke-width="1.2"/><rect transform="matrix(0.145,0.061,-0.061,0.145,229.939,578.847)" x="14" y="14" width="79" height="39" fill="#6a9040" stroke="#000" stroke-opacity="0.5" stroke-width="1.2"/><rect transform="matrix(0.145,0.061,-0.061,0.145,3.085,494.492)" x="14" y="14" width="79" height="39" fill="#62883a" stroke="#000" stroke-opacity="0.5" stroke-width="1.2"/><rect transform="matrix(0.145,0.061,-0.061,0.145,18.982,501.24)" x="14" y="14" width="79" height="39" fill="#5f8a38" stroke="#000" stroke-opacity="0.5" stroke-width="1.2"/><rect transform="matrix(0.145,0.061,-0.061,0.145,34.879,507.988)" x="14" y="14" width="79" height="39" fill="#74a048" stroke="#000" stroke-opacity="0.5" stroke-width="1.2"/><rect transform="matrix(0.145,0.061,-0.061,0.145,50.776,514.736)" x="14" y="14" width="79" height="39" fill="#6e9444" stroke="#000" stroke-opacity="0.5" stroke-width="1.2"/><rect transform="matrix(0.145,0.061,-0.061,0.145,66.673,521.484)" x="14" y="14" width="79" height="39" fill="#6e9444" stroke="#000" stroke-opacity="0.5" stroke-width="1.2"/><rect transform="matrix(0.145,0.061,-0.061,0.145,82.57,528.232)" x="14" y="14" width="79" height="39" fill="#6a9040" stroke="#000" stroke-opacity="0.5" stroke-width="1.2"/><rect transform="matrix(0.145,0.061,-0.061,0.145,98.468,534.98)" x="14" y="14" width="79" height="39" fill="#6e9444" stroke="#000" stroke-opacity="0.5" stroke-width="1.2"/><rect transform="matrix(0.145,0.061,-0.061,0.145,114.365,541.728)" x="14" y="14" width="79" height="39" fill="#62883a" stroke="#000" stroke-opacity="0.5" stroke-width="1.2"/><rect transform="matrix(0.145,0.061,-0.061,0.145,130.262,548.476)" x="14" y="14" width="79" height="39" fill="#263620" stroke="#000" stroke-opacity="0.5" stroke-width="1.2"/><rect transform="matrix(0.145,0.061,-0.061,0.145,146.159,555.224)" x="14" y="14" width="79" height="39" fill="#0e140e" stroke="#000" stroke-opacity="0.5" stroke-width="1.2"/><rect transform="matrix(0.145,0.061,-0.061,0.145,162.056,561.971)" x="14" y="14" width="79" height="39" fill="#34465e" stroke="#000" stroke-opacity="0.5" stroke-width="1.2"/><rect transform="matrix(0.145,0.061,-0.061,0.145,177.953,568.719)" x="14" y="14" width="79" height="39" fill="#505452" stroke="#000" stroke-opacity="0.5" stroke-width="1.2"/><rect transform="matrix(0.145,0.061,-0.061,0.145,193.85,575.467)" x="14" y="14" width="79" height="39" fill="#90b4e0" stroke="#000" stroke-opacity="0.5" stroke-width="1.2"/><rect transform="matrix(0.145,0.061,-0.061,0.145,14.688,511.356)" x="14" y="14" width="79" height="39" fill="#6a9040" stroke="#000" stroke-opacity="0.5" stroke-width="1.2"/><rect transform="matrix(0.145,0.061,-0.061,0.145,30.585,518.104)" x="14" y="14" width="79" height="39" fill="#6a9040" stroke="#000" stroke-opacity="0.5" stroke-width="1.2"/><rect transform="matrix(0.145,0.061,-0.061,0.145,46.482,524.852)" x="14" y="14" width="79" height="39" fill="#6ea044" stroke="#000" stroke-opacity="0.5" stroke-width="1.2"/><rect transform="matrix(0.145,0.061,-0.061,0.145,62.379,531.6)" x="14" y="14" width="79" height="39" fill="#6a8a38" stroke="#000" stroke-opacity="0.5" stroke-width="1.2"/><rect transform="matrix(0.145,0.061,-0.061,0.145,78.276,538.348)" x="14" y="14" width="79" height="39" fill="#5a8032" stroke="#000" stroke-opacity="0.5" stroke-width="1.2"/><rect transform="matrix(0.145,0.061,-0.061,0.145,94.173,545.096)" x="14" y="14" width="79" height="39" fill="#62883a" stroke="#000" stroke-opacity="0.5" stroke-width="1.2"/><rect transform="matrix(0.145,0.061,-0.061,0.145,110.07,551.844)" x="14" y="14" width="79" height="39" fill="#fcfcfc"/><rect transform="matrix(0.145,0.061,-0.061,0.145,125.968,558.592)" x="14" y="14" width="79" height="39" fill="#5e7e3a" stroke="#000" stroke-opacity="0.5" stroke-width="1.2"/><rect transform="matrix(0.145,0.061,-0.061,0.145,141.865,565.34)" x="14" y="14" width="79" height="39" fill="#4c5a4c" stroke="#000" stroke-opacity="0.5" stroke-width="1.2"/><rect transform="matrix(0.145,0.061,-0.061,0.145,157.762,572.088)" x="14" y="14" width="79" height="39" fill="#202428" stroke="#000" stroke-opacity="0.5" stroke-width="1.2"/><rect transform="matrix(0.145,0.061,-0.061,0.145,173.659,578.836)" x="14" y="14" width="79" height="39" fill="#808080" stroke="#000" stroke-opacity="0.5" stroke-width="1.2"/><rect transform="matrix(0.145,0.061,-0.061,0.145,10.394,521.473)" x="14" y="14" width="79" height="39" fill="#62883a" stroke="#000" stroke-opacity="0.5" stroke-width="1.2"/><rect transform="matrix(0.145,0.061,-0.061,0.145,26.291,528.221)" x="14" y="14" width="79" height="39" fill="#62883a" stroke="#000" stroke-opacity="0.5" stroke-width="1.2"/><rect transform="matrix(0.145,0.061,-0.061,0.145,42.188,534.969)" x="14" y="14" width="79" height="39" fill="#62883a" stroke="#000" stroke-opacity="0.5" stroke-width="1.2"/><rect transform="matrix(0.145,0.061,-0.061,0.145,58.085,541.717)" x="14" y="14" width="79" height="39" fill="#6e9444" stroke="#000" stroke-opacity="0.5" stroke-width="1.2"/><rect transform="matrix(0.145,0.061,-0.061,0.145,73.982,548.465)" x="14" y="14" width="79" height="39" fill="#6a9040" stroke="#000" stroke-opacity="0.5" stroke-width="1.2"/><rect transform="matrix(0.145,0.061,-0.061,0.145,89.879,555.212)" x="14" y="14" width="79" height="39" fill="#5f8a38" stroke="#000" stroke-opacity="0.5" stroke-width="1.2"/><rect transform="matrix(0.145,0.061,-0.061,0.145,105.776,561.96)" x="14" y="14" width="79" height="39" fill="#6a9040" stroke="#000" stroke-opacity="0.5" stroke-width="1.2"/><rect transform="matrix(0.145,0.061,-0.061,0.145,121.673,568.708)" x="14" y="14" width="79" height="39" fill="#74a048" stroke="#000" stroke-opacity="0.5" stroke-width="1.2"/><rect transform="matrix(0.145,0.061,-0.061,0.145,137.571,575.456)" x="14" y="14" width="79" height="39" fill="#6e9444" stroke="#000" stroke-opacity="0.5" stroke-width="1.2"/><rect transform="matrix(0.145,0.061,-0.061,0.145,6.1,531.589)" x="14" y="14" width="79" height="39" fill="#74a048" stroke="#000" stroke-opacity="0.5" stroke-width="1.2"/><rect transform="matrix(0.145,0.061,-0.061,0.145,21.997,538.337)" x="14" y="14" width="79" height="39" fill="#6e9444" stroke="#000" stroke-opacity="0.5" stroke-width="1.2"/><rect transform="matrix(0.145,0.061,-0.061,0.145,37.894,545.085)" x="14" y="14" width="79" height="39" fill="#6a8a58" stroke="#000" stroke-opacity="0.5" stroke-width="1.2"/><rect transform="matrix(0.145,0.061,-0.061,0.145,53.791,551.833)" x="14" y="14" width="79" height="39" fill="#62883a" stroke="#000" stroke-opacity="0.5" stroke-width="1.2"/><rect transform="matrix(0.145,0.061,-0.061,0.145,69.688,558.581)" x="14" y="14" width="79" height="39" fill="#5a8032" stroke="#000" stroke-opacity="0.5" stroke-width="1.2"/><rect transform="matrix(0.145,0.061,-0.061,0.145,85.585,565.329)" x="14" y="14" width="79" height="39" fill="#74a048" stroke="#000" stroke-opacity="0.5" stroke-width="1.2"/><rect transform="matrix(0.145,0.061,-0.061,0.145,101.482,572.077)" x="14" y="14" width="79" height="39" fill="#5f8a38" stroke="#000" stroke-opacity="0.5" stroke-width="1.2"/><rect transform="matrix(0.145,0.061,-0.061,0.145,117.379,578.825)" x="14" y="14" width="79" height="39" fill="#6a9040" stroke="#000" stroke-opacity="0.5" stroke-width="1.2"/><rect transform="matrix(0.145,0.061,-0.061,0.145,1.805,541.706)" x="14" y="14" width="79" height="39" fill="#6a9040" stroke="#000" stroke-opacity="0.5" stroke-width="1.2"/><rect transform="matrix(0.145,0.061,-0.061,0.145,17.702,548.453)" x="14" y="14" width="79" height="39" fill="#4e6e34" stroke="#000" stroke-opacity="0.5" stroke-width="1.2"/><rect transform="matrix(0.145,0.061,-0.061,0.145,33.6,555.201)" x="14" y="14" width="79" height="39" fill="#2e4622" stroke="#000" stroke-opacity="0.5" stroke-width="1.2"/><rect transform="matrix(0.145,0.061,-0.061,0.145,49.497,561.949)" x="14" y="14" width="79" height="39" fill="#5f8a38" stroke="#000" stroke-opacity="0.5" stroke-width="1.2"/><rect transform="matrix(0.145,0.061,-0.061,0.145,65.394,568.697)" x="14" y="14" width="79" height="39" fill="#6a9040" stroke="#000" stroke-opacity="0.5" stroke-width="1.2"/><rect transform="matrix(0.145,0.061,-0.061,0.145,81.291,575.445)" x="14" y="14" width="79" height="39" fill="#6e9444" stroke="#000" stroke-opacity="0.5" stroke-width="1.2"/><rect transform="matrix(0.145,0.061,-0.061,0.145,13.408,558.57)" x="14" y="14" width="79" height="39" fill="#a89c92" stroke="#000" stroke-opacity="0.5" stroke-width="1.2"/><rect transform="matrix(0.145,0.061,-0.061,0.145,29.305,565.318)" x="14" y="14" width="79" height="39" fill="#fafafa" stroke="#000" stroke-opacity="0.5" stroke-width="1.2"/><rect transform="matrix(0.145,0.061,-0.061,0.145,45.203,572.066)" x="14" y="14" width="79" height="39" fill="#5f8a38" stroke="#000" stroke-opacity="0.5" stroke-width="1.2"/><rect transform="matrix(0.145,0.061,-0.061,0.145,61.1,578.814)" x="14" y="14" width="79" height="39" fill="#74a048" stroke="#000" stroke-opacity="0.5" stroke-width="1.2"/><rect transform="matrix(0.145,0.061,-0.061,0.145,9.114,568.686)" x="14" y="14" width="79" height="39" fill="#6a9040" stroke="#000" stroke-opacity="0.5" stroke-width="1.2"/><rect transform="matrix(0.145,0.061,-0.061,0.145,25.011,575.434)" x="14" y="14" width="79" height="39" fill="#6a9040" stroke="#000" stroke-opacity="0.5" stroke-width="1.2"/><rect transform="matrix(0.145,0.061,-0.061,0.145,4.82,578.803)" x="14" y="14" width="79" height="39" fill="#5a8032" stroke="#000" stroke-opacity="0.5" stroke-width="1.2"/>
</g>
<rect x="347" y="363" width="11" height="213" fill="#efefef"/>
<rect x="347" y="363" width="1" height="213" fill="#e2e2e2"/>
<rect x="347" y="363" width="11" height="10" fill="#ffffff"/>
<rect x="347" y="566" width="11" height="10" fill="#ffffff"/>
<rect x="347" y="373" width="11" height="1" fill="#e2e2e2"/>
<rect x="347" y="565" width="11" height="1" fill="#e2e2e2"/>
<path d="M349.8 369.8 L352.5 366.6 L355.2 369.8Z" fill="#505050"/>
<path d="M349.8 568.2 L352.5 571.4 L355.2 568.2Z" fill="#505050"/>
<rect x="347.5" y="437.5" width="10" height="20" fill="#ffffff" stroke="#d6d6d6" stroke-width="1"/>
<rect x="17" y="576" width="330" height="11" fill="#efefef"/>
<rect x="17" y="576" width="330" height="1" fill="#e2e2e2"/>
<rect x="17" y="576" width="11" height="11" fill="#ffffff"/>
<rect x="336" y="576" width="11" height="11" fill="#ffffff"/>
<rect x="28" y="576" width="1" height="11" fill="#e2e2e2"/>
<rect x="335" y="576" width="1" height="11" fill="#e2e2e2"/>
<path d="M24.2 578.8 L20.8 581.5 L24.2 584.2Z" fill="#505050"/>
<path d="M339.8 578.8 L343.2 581.5 L339.8 584.2Z" fill="#505050"/>
<rect x="130.5" y="576.5" width="24" height="10" fill="#ffffff" stroke="#d6d6d6" stroke-width="1"/>
<rect x="347" y="576" width="11" height="11" fill="#fafafa"/>
<rect x="347" y="576" width="1" height="11" fill="#e2e2e2"/>
<rect x="347" y="576" width="11" height="1" fill="#e2e2e2"/>
<rect x="363.5" y="362.5" width="23" height="22" fill="#ffffff" stroke="#cbcbcb" stroke-width="1" rx="3"/>
<line x1="377.70000000000005" y1="375.79999999999995" x2="382.70000000000005" y2="380.59999999999997" stroke="#a87a30" stroke-width="3.4" stroke-linecap="round"/>
<line x1="377.90000000000003" y1="376.0" x2="382.5" y2="380.4" stroke="#f2c866" stroke-width="2" stroke-linecap="round"/>
<circle cx="372.1" cy="370.4" r="5.5" fill="url(#lens)" stroke="#959ca4" stroke-width="1.1"/>
<path d="M366.8 379.3h4.4M369 377.1v4.4" stroke="#38c030" stroke-width="1.7"/>
<rect x="363.5" y="564.5" width="23" height="22" fill="#ffffff" stroke="#cbcbcb" stroke-width="1" rx="3"/>
<line x1="377.70000000000005" y1="577.8" x2="382.70000000000005" y2="582.6" stroke="#a87a30" stroke-width="3.4" stroke-linecap="round"/>
<line x1="377.90000000000003" y1="578.0" x2="382.5" y2="582.4" stroke="#f2c866" stroke-width="2" stroke-linecap="round"/>
<circle cx="372.1" cy="572.4" r="5.5" fill="url(#lens)" stroke="#959ca4" stroke-width="1.1"/>
<path d="M366.3 581.3h5" stroke="#38c030" stroke-width="1.7"/>
<rect x="366.2" y="391" width="3.6" height="167" fill="#e6e6e6" stroke="#c8c8c8" stroke-width="0.7" rx="1.8"/>
<rect x="366" y="511" width="4" height="47" fill="#e8602e" rx="2"/>
<rect x="374" y="395.00" width="3" height="1" fill="#a4a4a4"/>
<rect x="374" y="398.14" width="3" height="1" fill="#a4a4a4"/>
<rect x="374" y="401.28" width="3" height="1" fill="#a4a4a4"/>
<rect x="374" y="404.42" width="3" height="1" fill="#a4a4a4"/>
<rect x="374" y="407.56" width="3" height="1" fill="#a4a4a4"/>
<rect x="374" y="410.70" width="3" height="1" fill="#a4a4a4"/>
<rect x="374" y="413.84" width="3" height="1" fill="#a4a4a4"/>
<rect x="374" y="416.98" width="3" height="1" fill="#a4a4a4"/>
<rect x="374" y="420.12" width="3" height="1" fill="#a4a4a4"/>
<rect x="374" y="423.26" width="3" height="1" fill="#a4a4a4"/>
<rect x="374" y="426.40" width="3" height="1" fill="#a4a4a4"/>
<rect x="374" y="429.54" width="3" height="1" fill="#a4a4a4"/>
<rect x="374" y="432.68" width="3" height="1" fill="#a4a4a4"/>
<rect x="374" y="435.82" width="3" height="1" fill="#a4a4a4"/>
<rect x="374" y="438.96" width="3" height="1" fill="#a4a4a4"/>
<rect x="374" y="442.10" width="3" height="1" fill="#a4a4a4"/>
<rect x="374" y="445.24" width="3" height="1" fill="#a4a4a4"/>
<rect x="374" y="448.38" width="3" height="1" fill="#a4a4a4"/>
<rect x="374" y="451.52" width="3" height="1" fill="#a4a4a4"/>
<rect x="374" y="454.66" width="3" height="1" fill="#a4a4a4"/>
<rect x="374" y="457.80" width="3" height="1" fill="#a4a4a4"/>
<rect x="374" y="460.94" width="3" height="1" fill="#a4a4a4"/>
<rect x="374" y="464.08" width="3" height="1" fill="#a4a4a4"/>
<rect x="374" y="467.22" width="3" height="1" fill="#a4a4a4"/>
<rect x="374" y="470.36" width="3" height="1" fill="#a4a4a4"/>
<rect x="374" y="473.50" width="3" height="1" fill="#a4a4a4"/>
<rect x="374" y="476.64" width="3" height="1" fill="#a4a4a4"/>
<rect x="374" y="479.78" width="3" height="1" fill="#a4a4a4"/>
<rect x="374" y="482.92" width="3" height="1" fill="#a4a4a4"/>
<rect x="374" y="486.06" width="3" height="1" fill="#a4a4a4"/>
<rect x="374" y="489.20" width="3" height="1" fill="#a4a4a4"/>
<rect x="374" y="492.34" width="3" height="1" fill="#a4a4a4"/>
<rect x="374" y="495.48" width="3" height="1" fill="#a4a4a4"/>
<rect x="374" y="498.62" width="3" height="1" fill="#a4a4a4"/>
<rect x="374" y="501.76" width="3" height="1" fill="#a4a4a4"/>
<rect x="374" y="504.90" width="3" height="1" fill="#a4a4a4"/>
<rect x="374" y="508.04" width="3" height="1" fill="#a4a4a4"/>
<rect x="374" y="511.18" width="3" height="1" fill="#a4a4a4"/>
<rect x="374" y="514.32" width="3" height="1" fill="#a4a4a4"/>
<rect x="374" y="517.46" width="3" height="1" fill="#a4a4a4"/>
<rect x="374" y="520.60" width="3" height="1" fill="#a4a4a4"/>
<rect x="374" y="523.74" width="3" height="1" fill="#a4a4a4"/>
<rect x="374" y="526.88" width="3" height="1" fill="#a4a4a4"/>
<rect x="374" y="530.02" width="3" height="1" fill="#a4a4a4"/>
<rect x="374" y="533.16" width="3" height="1" fill="#a4a4a4"/>
<rect x="374" y="536.30" width="3" height="1" fill="#a4a4a4"/>
<rect x="374" y="539.44" width="3" height="1" fill="#a4a4a4"/>
<rect x="374" y="542.58" width="3" height="1" fill="#a4a4a4"/>
<rect x="374" y="545.72" width="3" height="1" fill="#a4a4a4"/>
<rect x="374" y="548.86" width="3" height="1" fill="#a4a4a4"/>
<rect x="374" y="552.00" width="3" height="1" fill="#a4a4a4"/>
<rect x="363.5" y="506.5" width="9" height="9" fill="#ffffff" stroke="#bdbdbd" stroke-width="1" rx="2.5"/>
<rect x="16.5" y="592.5" width="23" height="22" fill="#ffffff" stroke="#cbcbcb" stroke-width="1" rx="3"/>
<g transform="translate(21.5,596)">
<rect x="1.8" y="0.6" width="10.4" height="13" fill="#eef1f5" stroke="#92a2b8" stroke-width="0.7"/>
<path d="M12.6 3.4 Q8.2 0.4 4.4 4.8" stroke="#3c8c98" stroke-width="3" fill="none"/>
<path d="M12.6 3.4 Q8.2 0.4 4.4 4.8" stroke="#7ed8b8" stroke-width="1.8" fill="none"/>
<path d="M0.4 8.2 L1.4 2.4 L6.8 6.4Z" fill="#6ccaa8" stroke="#3c8c98" stroke-width="0.6"/>
<path d="M2.4 12.0 Q6.8 14.8 10.4 10.0" stroke="#3a9a40" stroke-width="3" fill="none"/>
<path d="M2.4 12.0 Q6.8 14.8 10.4 10.0" stroke="#78e060" stroke-width="1.8" fill="none"/>
<path d="M13.8 6.4 L12.8 12.4 L7.6 8.6Z" fill="#60d050" stroke="#3a9a40" stroke-width="0.6"/>
</g>
<rect x="334.5" y="592.5" width="23" height="22" fill="#ffffff" stroke="#cbcbcb" stroke-width="1" rx="3"/>
<g transform="translate(339.5,596) translate(14,0) scale(-1,1)">
<rect x="1.8" y="0.6" width="10.4" height="13" fill="#eef1f5" stroke="#92a2b8" stroke-width="0.7"/>
<path d="M12.6 3.4 Q8.2 0.4 4.4 4.8" stroke="#3c8c98" stroke-width="3" fill="none"/>
<path d="M12.6 3.4 Q8.2 0.4 4.4 4.8" stroke="#7ed8b8" stroke-width="1.8" fill="none"/>
<path d="M0.4 8.2 L1.4 2.4 L6.8 6.4Z" fill="#6ccaa8" stroke="#3c8c98" stroke-width="0.6"/>
<path d="M2.4 12.0 Q6.8 14.8 10.4 10.0" stroke="#3a9a40" stroke-width="3" fill="none"/>
<path d="M2.4 12.0 Q6.8 14.8 10.4 10.0" stroke="#78e060" stroke-width="1.8" fill="none"/>
<path d="M13.8 6.4 L12.8 12.4 L7.6 8.6Z" fill="#60d050" stroke="#3a9a40" stroke-width="0.6"/>
</g>
<rect x="46" y="599.2" width="283" height="3.6" fill="#e6e6e6" stroke="#c8c8c8" stroke-width="0.7" rx="1.8"/>
<rect x="46" y="599" width="147" height="4" fill="#e8602e" rx="2"/>
<rect x="50.00" y="607" width="1" height="2" fill="#a4a4a4"/>
<rect x="53.79" y="607" width="1" height="2" fill="#a4a4a4"/>
<rect x="57.58" y="607" width="1" height="2" fill="#a4a4a4"/>
<rect x="61.38" y="607" width="1" height="2" fill="#a4a4a4"/>
<rect x="65.17" y="607" width="1" height="2" fill="#a4a4a4"/>
<rect x="68.96" y="607" width="1" height="2" fill="#a4a4a4"/>
<rect x="72.75" y="607" width="1" height="2" fill="#a4a4a4"/>
<rect x="76.54" y="607" width="1" height="2" fill="#a4a4a4"/>
<rect x="80.33" y="607" width="1" height="2" fill="#a4a4a4"/>
<rect x="84.12" y="607" width="1" height="2" fill="#a4a4a4"/>
<rect x="87.92" y="607" width="1" height="2" fill="#a4a4a4"/>
<rect x="91.71" y="607" width="1" height="2" fill="#a4a4a4"/>
<rect x="95.50" y="607" width="1" height="2" fill="#a4a4a4"/>
<rect x="99.29" y="607" width="1" height="2" fill="#a4a4a4"/>
<rect x="103.08" y="607" width="1" height="2" fill="#a4a4a4"/>
<rect x="106.88" y="607" width="1" height="2" fill="#a4a4a4"/>
<rect x="110.67" y="607" width="1" height="2" fill="#a4a4a4"/>
<rect x="114.46" y="607" width="1" height="2" fill="#a4a4a4"/>
<rect x="118.25" y="607" width="1" height="2" fill="#a4a4a4"/>
<rect x="122.04" y="607" width="1" height="2" fill="#a4a4a4"/>
<rect x="125.83" y="607" width="1" height="2" fill="#a4a4a4"/>
<rect x="129.62" y="607" width="1" height="2" fill="#a4a4a4"/>
<rect x="133.42" y="607" width="1" height="2" fill="#a4a4a4"/>
<rect x="137.21" y="607" width="1" height="2" fill="#a4a4a4"/>
<rect x="141.00" y="607" width="1" height="2" fill="#a4a4a4"/>
<rect x="144.79" y="607" width="1" height="2" fill="#a4a4a4"/>
<rect x="148.58" y="607" width="1" height="2" fill="#a4a4a4"/>
<rect x="152.38" y="607" width="1" height="2" fill="#a4a4a4"/>
<rect x="156.17" y="607" width="1" height="2" fill="#a4a4a4"/>
<rect x="159.96" y="607" width="1" height="2" fill="#a4a4a4"/>
<rect x="163.75" y="607" width="1" height="2" fill="#a4a4a4"/>
<rect x="167.54" y="607" width="1" height="2" fill="#a4a4a4"/>
<rect x="171.33" y="607" width="1" height="2" fill="#a4a4a4"/>
<rect x="175.12" y="607" width="1" height="2" fill="#a4a4a4"/>
<rect x="178.92" y="607" width="1" height="2" fill="#a4a4a4"/>
<rect x="182.71" y="607" width="1" height="2" fill="#a4a4a4"/>
<rect x="186.50" y="607" width="1" height="2" fill="#a4a4a4"/>
<rect x="190.29" y="607" width="1" height="2" fill="#a4a4a4"/>
<rect x="194.08" y="607" width="1" height="2" fill="#a4a4a4"/>
<rect x="197.88" y="607" width="1" height="2" fill="#a4a4a4"/>
<rect x="201.67" y="607" width="1" height="2" fill="#a4a4a4"/>
<rect x="205.46" y="607" width="1" height="2" fill="#a4a4a4"/>
<rect x="209.25" y="607" width="1" height="2" fill="#a4a4a4"/>
<rect x="213.04" y="607" width="1" height="2" fill="#a4a4a4"/>
<rect x="216.83" y="607" width="1" height="2" fill="#a4a4a4"/>
<rect x="220.62" y="607" width="1" height="2" fill="#a4a4a4"/>
<rect x="224.42" y="607" width="1" height="2" fill="#a4a4a4"/>
<rect x="228.21" y="607" width="1" height="2" fill="#a4a4a4"/>
<rect x="232.00" y="607" width="1" height="2" fill="#a4a4a4"/>
<rect x="235.79" y="607" width="1" height="2" fill="#a4a4a4"/>
<rect x="239.58" y="607" width="1" height="2" fill="#a4a4a4"/>
<rect x="243.38" y="607" width="1" height="2" fill="#a4a4a4"/>
<rect x="247.17" y="607" width="1" height="2" fill="#a4a4a4"/>
<rect x="250.96" y="607" width="1" height="2" fill="#a4a4a4"/>
<rect x="254.75" y="607" width="1" height="2" fill="#a4a4a4"/>
<rect x="258.54" y="607" width="1" height="2" fill="#a4a4a4"/>
<rect x="262.33" y="607" width="1" height="2" fill="#a4a4a4"/>
<rect x="266.12" y="607" width="1" height="2" fill="#a4a4a4"/>
<rect x="269.92" y="607" width="1" height="2" fill="#a4a4a4"/>
<rect x="273.71" y="607" width="1" height="2" fill="#a4a4a4"/>
<rect x="277.50" y="607" width="1" height="2" fill="#a4a4a4"/>
<rect x="281.29" y="607" width="1" height="2" fill="#a4a4a4"/>
<rect x="285.08" y="607" width="1" height="2" fill="#a4a4a4"/>
<rect x="288.88" y="607" width="1" height="2" fill="#a4a4a4"/>
<rect x="292.67" y="607" width="1" height="2" fill="#a4a4a4"/>
<rect x="296.46" y="607" width="1" height="2" fill="#a4a4a4"/>
<rect x="300.25" y="607" width="1" height="2" fill="#a4a4a4"/>
<rect x="304.04" y="607" width="1" height="2" fill="#a4a4a4"/>
<rect x="307.83" y="607" width="1" height="2" fill="#a4a4a4"/>
<rect x="311.62" y="607" width="1" height="2" fill="#a4a4a4"/>
<rect x="315.42" y="607" width="1" height="2" fill="#a4a4a4"/>
<rect x="319.21" y="607" width="1" height="2" fill="#a4a4a4"/>
<rect x="323.00" y="607" width="1" height="2" fill="#a4a4a4"/>
<rect x="191.5" y="596.5" width="9" height="9" fill="#ffffff" stroke="#bdbdbd" stroke-width="1" rx="2.5"/>
<rect x="363.5" y="594.5" width="16" height="18" fill="#ffffff" stroke="#cbcbcb" stroke-width="1" rx="3"/>
<text x="0" y="0" transform="translate(368.30,607.30) scale(1.0008,1)" font-family='"Liberation Sans", sans-serif' font-size="11.5" fill="#3a3a3a">0</text>
<rect x="397.5" y="332.5" width="391" height="290" fill="#fafafa" stroke="#d3d3d3" stroke-width="1" rx="1"/>
<text x="0" y="0" transform="translate(405.50,352.50) scale(1.0239,1)" font-family='"Liberation Sans", sans-serif' font-size="11.5" fill="#3a3a3a">Bottom right view</text>
<text x="0" y="0" transform="translate(501.50,352.50) scale(0.9898,1)" font-family='"Liberation Sans", sans-serif' font-size="11.5" fill="#3a3a3a">Pointer Mode</text>
<rect x="574.5" y="339.5" width="41" height="18" fill="#e8e8e8" stroke="#cbcbcb" stroke-width="1" rx="3"/>
<text x="0" y="0" transform="translate(579.75,352.30) scale(0.9543,1)" font-family='"Liberation Sans", sans-serif' font-size="11.5" fill="#3a3a3a">Select</text>
<rect x="621.5" y="339.5" width="34" height="18" fill="#ffffff" stroke="#cbcbcb" stroke-width="1" rx="3"/>
<text x="0" y="0" transform="translate(626.75,352.30) scale(0.9428,1)" font-family='"Liberation Sans", sans-serif' font-size="11.5" fill="#3a3a3a">Drag</text>
<rect x="661.5" y="339.5" width="68" height="18" fill="#ffffff" stroke="#cbcbcb" stroke-width="1" rx="3"/>
<text x="0" y="0" transform="translate(666.50,352.30) scale(0.9862,1)" font-family='"Liberation Sans", sans-serif' font-size="11.5" fill="#3a3a3a">Antialiasing</text>
<rect x="735.5" y="340.5" width="17" height="16" fill="#ffffff" stroke="#cbcbcb" stroke-width="1" rx="3"/>
<g transform="translate(738,342)">
<path d="M2.2 0.8 L7.6 1.2 L8.6 6 L3.4 6Z" fill="#a6ccf2" stroke="#8c90c8" stroke-width="0.6"/>
<path d="M0.8 7.2 Q0.8 5.2 3.5 5.2 L9 5.2 Q11.8 5.2 11.8 7.6 L11.8 10.6 Q11.8 12.2 9.4 12.2 L3 12.2 Q0.8 12.2 0.8 10.6Z" fill="#d8d8d8" stroke="#9a9a9a" stroke-width="0.7"/>
<path d="M1.8 8.4h9" stroke="#f4f4f4" stroke-width="1"/>
<path d="M4 11.4 L8.6 11.4" stroke="#7474a0" stroke-width="1"/>
<circle cx="10" cy="8.2" r="0.7" fill="#4a9a4a"/>
</g>
<rect x="405.5" y="362.5" width="348" height="225" fill="#fcfcfc" stroke="#d8d8d8" stroke-width="1"/>
<g clip-path="url(#clipBR)">
<g transform="matrix(8.98,0,0,8.98,307.7,255.7)"><rect x="14" y="14" width="79" height="39" fill="#5e8233" stroke="#000" stroke-width="1" stroke-linejoin="bevel"/></g><path d="M469.34 372.44L469.34 300.60M469.34 740.62L469.34 812.46M532.20 372.44L532.20 300.60M532.20 740.62L532.20 812.46M595.06 372.44L595.06 300.60M595.06 740.62L595.06 812.46M657.92 372.44L657.92 300.60M657.92 740.62L657.92 812.46M720.78 372.44L720.78 300.60M720.78 740.62L720.78 812.46M783.64 372.44L783.64 300.60M783.64 740.62L783.64 812.46M846.50 372.44L846.50 300.60M846.50 740.62L846.50 812.46M909.36 372.44L909.36 300.60M909.36 740.62L909.36 812.46M972.22 372.44L972.22 300.60M972.22 740.62L972.22 812.46M1035.08 372.44L1035.08 300.60M1035.08 740.62L1035.08 812.46M1097.94 372.44L1097.94 300.60M1097.94 740.62L1097.94 812.46M352.60 417.34L424.44 417.34M1151.82 417.34L1223.66 417.34M352.60 462.24L424.44 462.24M1151.82 462.24L1223.66 462.24M352.60 507.14L424.44 507.14M1151.82 507.14L1223.66 507.14M352.60 552.04L424.44 552.04M1151.82 552.04L1223.66 552.04M352.60 596.94L424.44 596.94M1151.82 596.94L1223.66 596.94M352.60 641.84L424.44 641.84M1151.82 641.84L1223.66 641.84M352.60 686.74L424.44 686.74M1151.82 686.74L1223.66 686.74M532.20 570.00L622.00 570.00M622.00 525.10L622.00 614.90M622.00 525.10L711.80 570.00M622.00 614.90L711.80 570.00M711.80 525.10L711.80 614.90M711.80 570.00L801.60 570.00" stroke="#333" stroke-width="0.75" fill="none"/>
<text x="0" y="0" transform="translate(460.60,417.30) scale(0.9994,1)" font-family='"Liberation Serif", serif' font-size="11.7" fill="#111">Model: VSC-2000 (Very Small Chip) at 6x4</text>
<text x="0" y="0" transform="translate(460.60,435.30) scale(0.9994,1)" font-family='"Liberation Serif", serif' font-size="11.7" fill="#111">Serial number: DLWR-WEER-123L-ZZ33-SDSJ</text>
<text x="0" y="0" transform="translate(460.60,453.30) scale(0.9925,1)" font-family='"Liberation Serif", serif' font-size="11.7" fill="#111">Manufacturer: Chip Manufacturer</text>
</g>
<rect x="742" y="363" width="11" height="213" fill="#efefef"/>
<rect x="742" y="363" width="1" height="213" fill="#e2e2e2"/>
<rect x="742" y="363" width="11" height="10" fill="#ffffff"/>
<rect x="742" y="566" width="11" height="10" fill="#ffffff"/>
<rect x="742" y="373" width="11" height="1" fill="#e2e2e2"/>
<rect x="742" y="565" width="11" height="1" fill="#e2e2e2"/>
<path d="M744.8 369.8 L747.5 366.6 L750.2 369.8Z" fill="#505050"/>
<path d="M744.8 568.2 L747.5 571.4 L750.2 568.2Z" fill="#505050"/>
<rect x="742.5" y="374.5" width="10" height="20" fill="#ffffff" stroke="#d6d6d6" stroke-width="1"/>
<rect x="406" y="576" width="336" height="11" fill="#efefef"/>
<rect x="406" y="576" width="336" height="1" fill="#e2e2e2"/>
<rect x="406" y="576" width="11" height="11" fill="#ffffff"/>
<rect x="731" y="576" width="11" height="11" fill="#ffffff"/>
<rect x="417" y="576" width="1" height="11" fill="#e2e2e2"/>
<rect x="730" y="576" width="1" height="11" fill="#e2e2e2"/>
<path d="M413.2 578.8 L409.8 581.5 L413.2 584.2Z" fill="#505050"/>
<path d="M734.8 578.8 L738.2 581.5 L734.8 584.2Z" fill="#505050"/>
<rect x="423.5" y="576.5" width="20" height="10" fill="#ffffff" stroke="#d6d6d6" stroke-width="1"/>
<rect x="742" y="576" width="11" height="11" fill="#fafafa"/>
<rect x="742" y="576" width="1" height="11" fill="#e2e2e2"/>
<rect x="742" y="576" width="11" height="1" fill="#e2e2e2"/>
<rect x="757.5" y="362.5" width="23" height="22" fill="#ffffff" stroke="#cbcbcb" stroke-width="1" rx="3"/>
<line x1="771.7" y1="375.79999999999995" x2="776.7" y2="380.59999999999997" stroke="#a87a30" stroke-width="3.4" stroke-linecap="round"/>
<line x1="771.9" y1="376.0" x2="776.5" y2="380.4" stroke="#f2c866" stroke-width="2" stroke-linecap="round"/>
<circle cx="766.1" cy="370.4" r="5.5" fill="url(#lens)" stroke="#959ca4" stroke-width="1.1"/>
<path d="M760.8 379.3h4.4M763 377.1v4.4" stroke="#38c030" stroke-width="1.7"/>
<rect x="757.5" y="564.5" width="23" height="22" fill="#ffffff" stroke="#cbcbcb" stroke-width="1" rx="3"/>
<line x1="771.7" y1="577.8" x2="776.7" y2="582.6" stroke="#a87a30" stroke-width="3.4" stroke-linecap="round"/>
<line x1="771.9" y1="578.0" x2="776.5" y2="582.4" stroke="#f2c866" stroke-width="2" stroke-linecap="round"/>
<circle cx="766.1" cy="572.4" r="5.5" fill="url(#lens)" stroke="#959ca4" stroke-width="1.1"/>
<path d="M760.3 581.3h5" stroke="#38c030" stroke-width="1.7"/>
<rect x="760.2" y="391" width="3.6" height="167" fill="#e6e6e6" stroke="#c8c8c8" stroke-width="0.7" rx="1.8"/>
<rect x="760" y="418" width="4" height="140" fill="#e8602e" rx="2"/>
<rect x="768" y="395.00" width="3" height="1" fill="#a4a4a4"/>
<rect x="768" y="398.14" width="3" height="1" fill="#a4a4a4"/>
<rect x="768" y="401.28" width="3" height="1" fill="#a4a4a4"/>
<rect x="768" y="404.42" width="3" height="1" fill="#a4a4a4"/>
<rect x="768" y="407.56" width="3" height="1" fill="#a4a4a4"/>
<rect x="768" y="410.70" width="3" height="1" fill="#a4a4a4"/>
<rect x="768" y="413.84" width="3" height="1" fill="#a4a4a4"/>
<rect x="768" y="416.98" width="3" height="1" fill="#a4a4a4"/>
<rect x="768" y="420.12" width="3" height="1" fill="#a4a4a4"/>
<rect x="768" y="423.26" width="3" height="1" fill="#a4a4a4"/>
<rect x="768" y="426.40" width="3" height="1" fill="#a4a4a4"/>
<rect x="768" y="429.54" width="3" height="1" fill="#a4a4a4"/>
<rect x="768" y="432.68" width="3" height="1" fill="#a4a4a4"/>
<rect x="768" y="435.82" width="3" height="1" fill="#a4a4a4"/>
<rect x="768" y="438.96" width="3" height="1" fill="#a4a4a4"/>
<rect x="768" y="442.10" width="3" height="1" fill="#a4a4a4"/>
<rect x="768" y="445.24" width="3" height="1" fill="#a4a4a4"/>
<rect x="768" y="448.38" width="3" height="1" fill="#a4a4a4"/>
<rect x="768" y="451.52" width="3" height="1" fill="#a4a4a4"/>
<rect x="768" y="454.66" width="3" height="1" fill="#a4a4a4"/>
<rect x="768" y="457.80" width="3" height="1" fill="#a4a4a4"/>
<rect x="768" y="460.94" width="3" height="1" fill="#a4a4a4"/>
<rect x="768" y="464.08" width="3" height="1" fill="#a4a4a4"/>
<rect x="768" y="467.22" width="3" height="1" fill="#a4a4a4"/>
<rect x="768" y="470.36" width="3" height="1" fill="#a4a4a4"/>
<rect x="768" y="473.50" width="3" height="1" fill="#a4a4a4"/>
<rect x="768" y="476.64" width="3" height="1" fill="#a4a4a4"/>
<rect x="768" y="479.78" width="3" height="1" fill="#a4a4a4"/>
<rect x="768" y="482.92" width="3" height="1" fill="#a4a4a4"/>
<rect x="768" y="486.06" width="3" height="1" fill="#a4a4a4"/>
<rect x="768" y="489.20" width="3" height="1" fill="#a4a4a4"/>
<rect x="768" y="492.34" width="3" height="1" fill="#a4a4a4"/>
<rect x="768" y="495.48" width="3" height="1" fill="#a4a4a4"/>
<rect x="768" y="498.62" width="3" height="1" fill="#a4a4a4"/>
<rect x="768" y="501.76" width="3" height="1" fill="#a4a4a4"/>
<rect x="768" y="504.90" width="3" height="1" fill="#a4a4a4"/>
<rect x="768" y="508.04" width="3" height="1" fill="#a4a4a4"/>
<rect x="768" y="511.18" width="3" height="1" fill="#a4a4a4"/>
<rect x="768" y="514.32" width="3" height="1" fill="#a4a4a4"/>
<rect x="768" y="517.46" width="3" height="1" fill="#a4a4a4"/>
<rect x="768" y="520.60" width="3" height="1" fill="#a4a4a4"/>
<rect x="768" y="523.74" width="3" height="1" fill="#a4a4a4"/>
<rect x="768" y="526.88" width="3" height="1" fill="#a4a4a4"/>
<rect x="768" y="530.02" width="3" height="1" fill="#a4a4a4"/>
<rect x="768" y="533.16" width="3" height="1" fill="#a4a4a4"/>
<rect x="768" y="536.30" width="3" height="1" fill="#a4a4a4"/>
<rect x="768" y="539.44" width="3" height="1" fill="#a4a4a4"/>
<rect x="768" y="542.58" width="3" height="1" fill="#a4a4a4"/>
<rect x="768" y="545.72" width="3" height="1" fill="#a4a4a4"/>
<rect x="768" y="548.86" width="3" height="1" fill="#a4a4a4"/>
<rect x="768" y="552.00" width="3" height="1" fill="#a4a4a4"/>
<rect x="757.5" y="413.5" width="9" height="9" fill="#ffffff" stroke="#bdbdbd" stroke-width="1" rx="2.5"/>
<rect x="405.5" y="592.5" width="23" height="22" fill="#ffffff" stroke="#cbcbcb" stroke-width="1" rx="3"/>
<g transform="translate(410.5,596)">
<rect x="1.8" y="0.6" width="10.4" height="13" fill="#eef1f5" stroke="#92a2b8" stroke-width="0.7"/>
<path d="M12.6 3.4 Q8.2 0.4 4.4 4.8" stroke="#3c8c98" stroke-width="3" fill="none"/>
<path d="M12.6 3.4 Q8.2 0.4 4.4 4.8" stroke="#7ed8b8" stroke-width="1.8" fill="none"/>
<path d="M0.4 8.2 L1.4 2.4 L6.8 6.4Z" fill="#6ccaa8" stroke="#3c8c98" stroke-width="0.6"/>
<path d="M2.4 12.0 Q6.8 14.8 10.4 10.0" stroke="#3a9a40" stroke-width="3" fill="none"/>
<path d="M2.4 12.0 Q6.8 14.8 10.4 10.0" stroke="#78e060" stroke-width="1.8" fill="none"/>
<path d="M13.8 6.4 L12.8 12.4 L7.6 8.6Z" fill="#60d050" stroke="#3a9a40" stroke-width="0.6"/>
</g>
<rect x="729.5" y="592.5" width="23" height="22" fill="#ffffff" stroke="#cbcbcb" stroke-width="1" rx="3"/>
<g transform="translate(734.5,596) translate(14,0) scale(-1,1)">
<rect x="1.8" y="0.6" width="10.4" height="13" fill="#eef1f5" stroke="#92a2b8" stroke-width="0.7"/>
<path d="M12.6 3.4 Q8.2 0.4 4.4 4.8" stroke="#3c8c98" stroke-width="3" fill="none"/>
<path d="M12.6 3.4 Q8.2 0.4 4.4 4.8" stroke="#7ed8b8" stroke-width="1.8" fill="none"/>
<path d="M0.4 8.2 L1.4 2.4 L6.8 6.4Z" fill="#6ccaa8" stroke="#3c8c98" stroke-width="0.6"/>
<path d="M2.4 12.0 Q6.8 14.8 10.4 10.0" stroke="#3a9a40" stroke-width="3" fill="none"/>
<path d="M2.4 12.0 Q6.8 14.8 10.4 10.0" stroke="#78e060" stroke-width="1.8" fill="none"/>
<path d="M13.8 6.4 L12.8 12.4 L7.6 8.6Z" fill="#60d050" stroke="#3a9a40" stroke-width="0.6"/>
</g>
<rect x="435" y="599.2" width="289" height="3.6" fill="#e6e6e6" stroke="#c8c8c8" stroke-width="0.7" rx="1.8"/>
<rect x="435" y="599" width="142" height="4" fill="#e8602e" rx="2"/>
<rect x="439.00" y="607" width="1" height="2" fill="#a4a4a4"/>
<rect x="442.88" y="607" width="1" height="2" fill="#a4a4a4"/>
<rect x="446.75" y="607" width="1" height="2" fill="#a4a4a4"/>
<rect x="450.62" y="607" width="1" height="2" fill="#a4a4a4"/>
<rect x="454.50" y="607" width="1" height="2" fill="#a4a4a4"/>
<rect x="458.38" y="607" width="1" height="2" fill="#a4a4a4"/>
<rect x="462.25" y="607" width="1" height="2" fill="#a4a4a4"/>
<rect x="466.12" y="607" width="1" height="2" fill="#a4a4a4"/>
<rect x="470.00" y="607" width="1" height="2" fill="#a4a4a4"/>
<rect x="473.88" y="607" width="1" height="2" fill="#a4a4a4"/>
<rect x="477.75" y="607" width="1" height="2" fill="#a4a4a4"/>
<rect x="481.62" y="607" width="1" height="2" fill="#a4a4a4"/>
<rect x="485.50" y="607" width="1" height="2" fill="#a4a4a4"/>
<rect x="489.38" y="607" width="1" height="2" fill="#a4a4a4"/>
<rect x="493.25" y="607" width="1" height="2" fill="#a4a4a4"/>
<rect x="497.12" y="607" width="1" height="2" fill="#a4a4a4"/>
<rect x="501.00" y="607" width="1" height="2" fill="#a4a4a4"/>
<rect x="504.88" y="607" width="1" height="2" fill="#a4a4a4"/>
<rect x="508.75" y="607" width="1" height="2" fill="#a4a4a4"/>
<rect x="512.62" y="607" width="1" height="2" fill="#a4a4a4"/>
<rect x="516.50" y="607" width="1" height="2" fill="#a4a4a4"/>
<rect x="520.38" y="607" width="1" height="2" fill="#a4a4a4"/>
<rect x="524.25" y="607" width="1" height="2" fill="#a4a4a4"/>
<rect x="528.12" y="607" width="1" height="2" fill="#a4a4a4"/>
<rect x="532.00" y="607" width="1" height="2" fill="#a4a4a4"/>
<rect x="535.88" y="607" width="1" height="2" fill="#a4a4a4"/>
<rect x="539.75" y="607" width="1" height="2" fill="#a4a4a4"/>
<rect x="543.62" y="607" width="1" height="2" fill="#a4a4a4"/>
<rect x="547.50" y="607" width="1" height="2" fill="#a4a4a4"/>
<rect x="551.38" y="607" width="1" height="2" fill="#a4a4a4"/>
<rect x="555.25" y="607" width="1" height="2" fill="#a4a4a4"/>
<rect x="559.12" y="607" width="1" height="2" fill="#a4a4a4"/>
<rect x="563.00" y="607" width="1" height="2" fill="#a4a4a4"/>
<rect x="566.88" y="607" width="1" height="2" fill="#a4a4a4"/>
<rect x="570.75" y="607" width="1" height="2" fill="#a4a4a4"/>
<rect x="574.62" y="607" width="1" height="2" fill="#a4a4a4"/>
<rect x="578.50" y="607" width="1" height="2" fill="#a4a4a4"/>
<rect x="582.38" y="607" width="1" height="2" fill="#a4a4a4"/>
<rect x="586.25" y="607" width="1" height="2" fill="#a4a4a4"/>
<rect x="590.12" y="607" width="1" height="2" fill="#a4a4a4"/>
<rect x="594.00" y="607" width="1" height="2" fill="#a4a4a4"/>
<rect x="597.88" y="607" width="1" height="2" fill="#a4a4a4"/>
<rect x="601.75" y="607" width="1" height="2" fill="#a4a4a4"/>
<rect x="605.62" y="607" width="1" height="2" fill="#a4a4a4"/>
<rect x="609.50" y="607" width="1" height="2" fill="#a4a4a4"/>
<rect x="613.38" y="607" width="1" height="2" fill="#a4a4a4"/>
<rect x="617.25" y="607" width="1" height="2" fill="#a4a4a4"/>
<rect x="621.12" y="607" width="1" height="2" fill="#a4a4a4"/>
<rect x="625.00" y="607" width="1" height="2" fill="#a4a4a4"/>
<rect x="628.88" y="607" width="1" height="2" fill="#a4a4a4"/>
<rect x="632.75" y="607" width="1" height="2" fill="#a4a4a4"/>
<rect x="636.62" y="607" width="1" height="2" fill="#a4a4a4"/>
<rect x="640.50" y="607" width="1" height="2" fill="#a4a4a4"/>
<rect x="644.38" y="607" width="1" height="2" fill="#a4a4a4"/>
<rect x="648.25" y="607" width="1" height="2" fill="#a4a4a4"/>
<rect x="652.12" y="607" width="1" height="2" fill="#a4a4a4"/>
<rect x="656.00" y="607" width="1" height="2" fill="#a4a4a4"/>
<rect x="659.88" y="607" width="1" height="2" fill="#a4a4a4"/>
<rect x="663.75" y="607" width="1" height="2" fill="#a4a4a4"/>
<rect x="667.62" y="607" width="1" height="2" fill="#a4a4a4"/>
<rect x="671.50" y="607" width="1" height="2" fill="#a4a4a4"/>
<rect x="675.38" y="607" width="1" height="2" fill="#a4a4a4"/>
<rect x="679.25" y="607" width="1" height="2" fill="#a4a4a4"/>
<rect x="683.12" y="607" width="1" height="2" fill="#a4a4a4"/>
<rect x="687.00" y="607" width="1" height="2" fill="#a4a4a4"/>
<rect x="690.88" y="607" width="1" height="2" fill="#a4a4a4"/>
<rect x="694.75" y="607" width="1" height="2" fill="#a4a4a4"/>
<rect x="698.62" y="607" width="1" height="2" fill="#a4a4a4"/>
<rect x="702.50" y="607" width="1" height="2" fill="#a4a4a4"/>
<rect x="706.38" y="607" width="1" height="2" fill="#a4a4a4"/>
<rect x="710.25" y="607" width="1" height="2" fill="#a4a4a4"/>
<rect x="714.12" y="607" width="1" height="2" fill="#a4a4a4"/>
<rect x="718.00" y="607" width="1" height="2" fill="#a4a4a4"/>
<rect x="575.5" y="596.5" width="9" height="9" fill="#ffffff" stroke="#bdbdbd" stroke-width="1" rx="2.5"/>
<rect x="757.5" y="594.5" width="16" height="18" fill="#ffffff" stroke="#cbcbcb" stroke-width="1" rx="3"/>
<text x="0" y="0" transform="translate(762.30,607.30) scale(1.0008,1)" font-family='"Liberation Sans", sans-serif' font-size="11.5" fill="#3a3a3a">0</text>
<rect x="391.0" y="330" width="1" height="1" fill="#e4e4e4"/>
<rect x="393.5" y="330" width="1" height="1" fill="#e4e4e4"/>
<rect x="396.0" y="330" width="1" height="1" fill="#e4e4e4"/>
<rect x="398.5" y="330" width="1" height="1" fill="#e4e4e4"/>
<rect x="401.0" y="330" width="1" height="1" fill="#e4e4e4"/>
</svg></body></html>
